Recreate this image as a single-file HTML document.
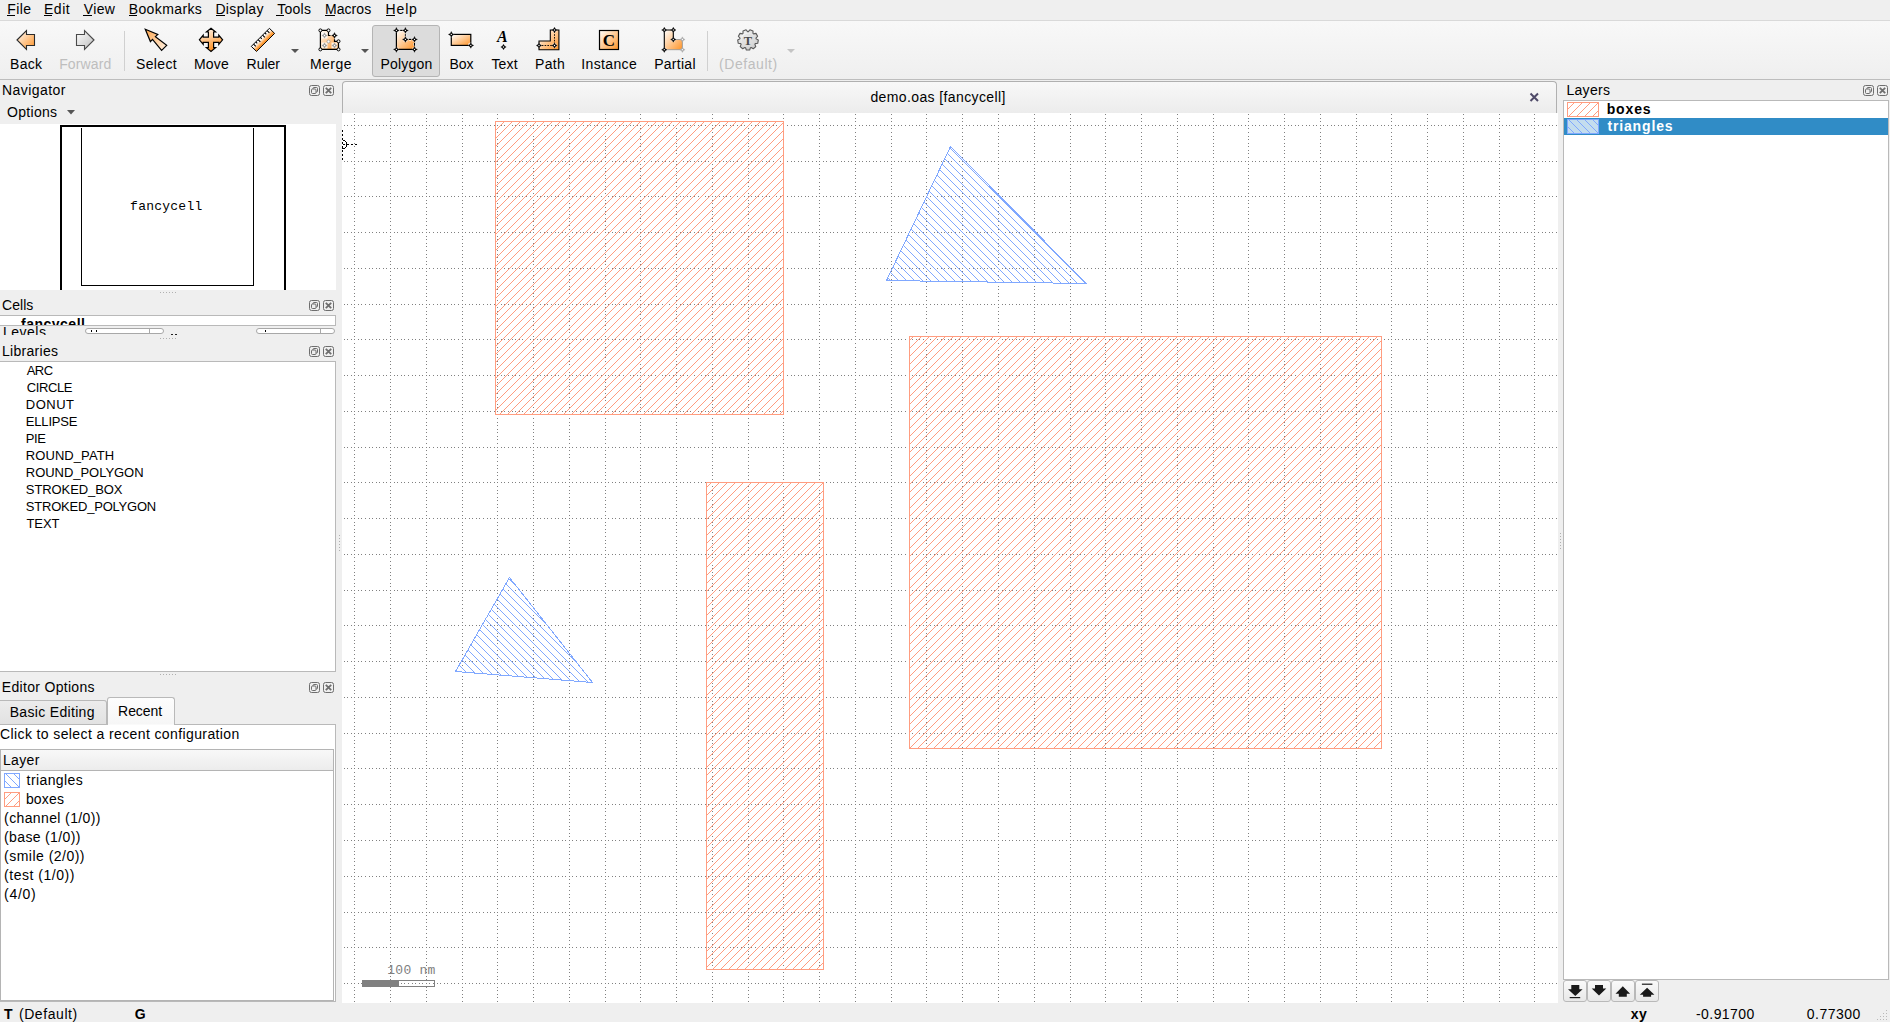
<!DOCTYPE html><html><head><meta charset="utf-8"><title>KLayout</title><style>
*{margin:0;padding:0;box-sizing:border-box}
html,body{width:1890px;height:1022px;overflow:hidden}
body{background:#efefef;position:relative;font-family:"Liberation Sans",sans-serif;font-size:14px;color:#000}
.a{position:absolute}
.t{position:absolute;white-space:pre;line-height:14px}
svg{position:absolute;overflow:visible}
.u{text-decoration:underline;text-underline-offset:2px}
</style></head><body>
<div class="a" style="left:0;top:0;width:1890px;height:20px;background:#efefef"></div>
<div class="a" style="left:0;top:20px;width:1890px;height:1px;background:#d9d9d9"></div>
<div class="t" style="left:7.3px;top:2px;letter-spacing:0.37px;">File</div>
<div class="a" style="left:7px;top:15px;width:8px;height:1px;background:#000"></div>
<div class="t" style="left:43.9px;top:2px;letter-spacing:0.57px;">Edit</div>
<div class="a" style="left:44px;top:15px;width:8px;height:1px;background:#000"></div>
<div class="t" style="left:83.7px;top:2px;letter-spacing:0.4px;">View</div>
<div class="a" style="left:83px;top:15px;width:9px;height:1px;background:#000"></div>
<div class="t" style="left:128.7px;top:2px;letter-spacing:0.39px;">Bookmarks</div>
<div class="a" style="left:129px;top:15px;width:8px;height:1px;background:#000"></div>
<div class="t" style="left:215.4px;top:2px;letter-spacing:0.37px;">Display</div>
<div class="a" style="left:216px;top:15px;width:9px;height:1px;background:#000"></div>
<div class="t" style="left:277.3px;top:2px;letter-spacing:0.25px;">Tools</div>
<div class="a" style="left:276px;top:15px;width:8px;height:1px;background:#000"></div>
<div class="t" style="left:324.9px;top:2px;letter-spacing:0.08px;">Macros</div>
<div class="a" style="left:325px;top:15px;width:10px;height:1px;background:#000"></div>
<div class="t" style="left:385.6px;top:2px;letter-spacing:0.83px;">Help</div>
<div class="a" style="left:386px;top:15px;width:9px;height:1px;background:#000"></div>
<div class="a" style="left:0;top:21px;width:1890px;height:58px;background:linear-gradient(#f8f8f8,#efefef)"></div>
<div class="a" style="left:0;top:79px;width:1890px;height:1px;background:#bdbdbd"></div>
<div class="a" style="left:372px;top:25px;width:68px;height:52px;background:#dcdcdc;border:1px solid #b4b4b4;border-radius:3px"></div>
<div class="a" style="left:124px;top:31px;width:1px;height:40px;background:#d0d0d0"></div>
<div class="a" style="left:707px;top:31px;width:1px;height:40px;background:#d0d0d0"></div>
<div class="t" style="left:10.1px;top:57px;letter-spacing:0.27px;">Back</div>
<div class="t" style="left:59.2px;top:57px;color:#bebebe;letter-spacing:0.13px;">Forward</div>
<div class="t" style="left:136.1px;top:57px;letter-spacing:0.32px;">Select</div>
<div class="t" style="left:194.0px;top:57px;letter-spacing:0.2px;">Move</div>
<div class="t" style="left:246.6px;top:57px;letter-spacing:-0.05px;">Ruler</div>
<div class="t" style="left:310.0px;top:57px;letter-spacing:0.45px;">Merge</div>
<div class="t" style="left:380.4px;top:57px;letter-spacing:0.2px;">Polygon</div>
<div class="t" style="left:449.4px;top:57px;letter-spacing:0.05px;">Box</div>
<div class="t" style="left:491.4px;top:57px;letter-spacing:0.17px;">Text</div>
<div class="t" style="left:535.1px;top:57px;letter-spacing:0.27px;">Path</div>
<div class="t" style="left:581.3px;top:57px;letter-spacing:0.36px;">Instance</div>
<div class="t" style="left:654.2px;top:57px;letter-spacing:0.28px;">Partial</div>
<div class="t" style="left:719.0px;top:57px;color:#bebebe;letter-spacing:0.56px;">(Default)</div>
<svg style="left:0;top:0" width="820" height="80" viewBox="0 0 820 80">
<defs>
<linearGradient id="og" x1="0" y1="0" x2="1" y2="1"><stop offset="0" stop-color="#fff"/><stop offset="1" stop-color="#ff9326"/></linearGradient>
<linearGradient id="og2" x1="0" y1="0" x2="1" y2="1"><stop offset="0" stop-color="#ffa64d"/><stop offset="1" stop-color="#fff3e6"/></linearGradient>
<linearGradient id="ogv" x1="0" y1="0" x2="0.3" y2="1"><stop offset="0" stop-color="#fff"/><stop offset="1" stop-color="#ff9326"/></linearGradient>
<linearGradient id="gg" x1="0" y1="0" x2="1" y2="1"><stop offset="0" stop-color="#fff"/><stop offset="1" stop-color="#bdbdbd"/></linearGradient>
<linearGradient id="rg" gradientUnits="userSpaceOnUse" x1="260.3" y1="37.3" x2="265.5" y2="42.4"><stop offset="0.25" stop-color="#fff"/><stop offset="0.8" stop-color="#ff9a33"/></linearGradient>
<radialGradient id="gear" cx="0.4" cy="0.35" r="0.7"><stop offset="0" stop-color="#fff"/><stop offset="1" stop-color="#c8c8c8"/></radialGradient>
</defs>
<path d="M17 40L26.5 30.5V34.5H34.5V45.5H26.5V49.5Z" fill="url(#og)" stroke="#2b2b2b" stroke-width="1.1" stroke-linejoin="miter"/>
<path d="M94 40L84.5 30.5V34.5H76.5V45.5H84.5V49.5Z" fill="url(#gg)" stroke="#4a4a4a" stroke-width="1.1"/>
<path d="M145.3 29.3L157.8 34.4L155.4 36.6L166.7 45.4L161.6 50.4L152.5 39.3L150.4 41.6Z" fill="url(#og2)" stroke="#000" stroke-width="1.2" stroke-linejoin="miter"/>
<path d="M211.0 28.2L215.6 32.0L213.6 32.0L213.6 37.2L218.8 37.2L218.8 35.2L222.6 39.8L218.8 44.4L218.8 42.4L213.6 42.4L213.6 47.6L215.6 47.6L211.0 51.4L206.4 47.6L208.4 47.6L208.4 42.4L203.2 42.4L203.2 44.4L199.4 39.8L203.2 35.2L203.2 37.2L208.4 37.2L208.4 32.0L206.4 32.0Z" fill="url(#ogv)" stroke="#000" stroke-width="1.2"/>
<path d="M269.4 28.3L274.6 33.4L256.5 51.4L251.3 46.4Z" fill="url(#rg)" stroke="#000" stroke-width="1"/>
<path d="M253.56 44.14l2.26 2.26M255.82 41.88l1.41 1.41M258.09 39.61l2.26 2.26M260.35 37.35l1.41 1.41M262.61 35.09l2.26 2.26M264.88 32.83l1.41 1.41M267.14 30.56l2.26 2.26" stroke="#000" stroke-width="1.1"/>
<path d="M291 49H299L295 53Z" fill="#555"/>
<path d="M361 49H369L365 53Z" fill="#555"/>
<path d="M787 49H795L791 53Z" fill="#c4c4c4"/>
<path d="M320.4 30.4H328.5V35.5H334.5V41.3H338.5V49.4H320.4Z" fill="url(#og)"/>
<rect x="321.5" y="32.5" width="6" height="6" fill="#fff" opacity="0.8"/>
<path d="M324.5 32.812L325.5 34.5L327.188 35.5L325.5 36.5L324.5 38.188L323.5 36.5L321.812 35.5L323.5 34.5Z" fill="#9a9a9a" stroke="#9a9a9a" stroke-width="0.35" stroke-linejoin="round"/><circle cx="324.5" cy="35.5" r="0.65" fill="#fff"/>
<rect x="321.5" y="42.5" width="6" height="6" fill="#fff" opacity="0.8"/>
<path d="M324.5 42.812L325.5 44.5L327.188 45.5L325.5 46.5L324.5 48.188L323.5 46.5L321.812 45.5L323.5 44.5Z" fill="#9a9a9a" stroke="#9a9a9a" stroke-width="0.35" stroke-linejoin="round"/><circle cx="324.5" cy="45.5" r="0.65" fill="#fff"/>
<rect x="331.5" y="42.5" width="6" height="6" fill="#fff" opacity="0.8"/>
<path d="M334.5 42.812L335.5 44.5L337.188 45.5L335.5 46.5L334.5 48.188L333.5 46.5L331.812 45.5L333.5 44.5Z" fill="#9a9a9a" stroke="#9a9a9a" stroke-width="0.35" stroke-linejoin="round"/><circle cx="334.5" cy="45.5" r="0.65" fill="#fff"/>
<circle cx="328.5" cy="41.5" r="1.5" fill="#fff" stroke="#999" stroke-width="0.8"/>
<path d="M330.5 35.5H328.5V30.4H320.4V49.4H338.5V41.3H334.5V39.2" fill="none" stroke="#000" stroke-width="1.2"/>
<circle cx="320.4" cy="30.4" r="1.5" fill="#fff" stroke="#000" stroke-width="1"/>
<circle cx="328.5" cy="30.4" r="1.5" fill="#fff" stroke="#000" stroke-width="1"/>
<circle cx="338.5" cy="41.3" r="1.5" fill="#fff" stroke="#000" stroke-width="1"/>
<circle cx="338.5" cy="49.4" r="1.5" fill="#fff" stroke="#000" stroke-width="1"/>
<circle cx="320.4" cy="49.4" r="1.5" fill="#fff" stroke="#000" stroke-width="1"/>
<path d="M334.5 32.588L335.5 34.5L337.412 35.5L335.5 36.5L334.5 38.412L333.5 36.5L331.588 35.5L333.5 34.5Z" fill="#000" stroke="#000" stroke-width="0.35" stroke-linejoin="round"/><circle cx="334.5" cy="35.5" r="0.65" fill="#fff"/>
<path d="M396.4 30.4H405.4V39.4H414.5V49.4H396.4Z" fill="url(#og)"/>
<path d="M400.2 30.4H402.4M405.4 34.2V35.8M409 39.4H411M414.5 43.1V45.7" stroke="#fff" stroke-width="2.6" opacity="0.8"/>
<path d="M396.4 33V47M399 49.4H412" stroke="#000" stroke-width="1.2"/>
<path d="M400.2 30.4H402.4M405.4 34.2V35.8M409 39.4H411M414.5 43.1V45.7" stroke="#000" stroke-width="1.2"/>
<circle cx="396.4" cy="30.4" r="2.6" fill="#fff" opacity="0.6"/>
<path d="M396.4 27.488L397.4 29.4L399.31199999999995 30.4L397.4 31.4L396.4 33.312L395.4 31.4L393.488 30.4L395.4 29.4Z" fill="#000" stroke="#000" stroke-width="0.35" stroke-linejoin="round"/><circle cx="396.4" cy="30.4" r="0.65" fill="#fff"/>
<circle cx="405.4" cy="30.4" r="2.6" fill="#fff" opacity="0.6"/>
<path d="M405.4 27.488L406.4 29.4L408.31199999999995 30.4L406.4 31.4L405.4 33.312L404.4 31.4L402.488 30.4L404.4 29.4Z" fill="#000" stroke="#000" stroke-width="0.35" stroke-linejoin="round"/><circle cx="405.4" cy="30.4" r="0.65" fill="#fff"/>
<circle cx="405.4" cy="39.4" r="2.6" fill="#fff" opacity="0.6"/>
<path d="M405.4 36.488L406.4 38.4L408.31199999999995 39.4L406.4 40.4L405.4 42.312L404.4 40.4L402.488 39.4L404.4 38.4Z" fill="#000" stroke="#000" stroke-width="0.35" stroke-linejoin="round"/><circle cx="405.4" cy="39.4" r="0.65" fill="#fff"/>
<circle cx="414.5" cy="39.4" r="2.6" fill="#fff" opacity="0.6"/>
<path d="M414.5 36.488L415.5 38.4L417.412 39.4L415.5 40.4L414.5 42.312L413.5 40.4L411.588 39.4L413.5 38.4Z" fill="#000" stroke="#000" stroke-width="0.35" stroke-linejoin="round"/><circle cx="414.5" cy="39.4" r="0.65" fill="#fff"/>
<circle cx="414.5" cy="49.4" r="2.6" fill="#fff" opacity="0.6"/>
<path d="M414.5 46.488L415.5 48.4L417.412 49.4L415.5 50.4L414.5 52.312L413.5 50.4L411.588 49.4L413.5 48.4Z" fill="#000" stroke="#000" stroke-width="0.35" stroke-linejoin="round"/><circle cx="414.5" cy="49.4" r="0.65" fill="#fff"/>
<circle cx="396.4" cy="49.4" r="2.6" fill="#fff" opacity="0.6"/>
<path d="M396.4 46.488L397.4 48.4L399.31199999999995 49.4L397.4 50.4L396.4 52.312L395.4 50.4L393.488 49.4L395.4 48.4Z" fill="#000" stroke="#000" stroke-width="0.35" stroke-linejoin="round"/><circle cx="396.4" cy="49.4" r="0.65" fill="#fff"/>
<rect x="451.3" y="34.4" width="19.5" height="11" fill="url(#og)" stroke="#000" stroke-width="1.2"/>
<circle cx="451.3" cy="34.4" r="2.8" fill="#fff" opacity="0.8"/><circle cx="470.8" cy="45.4" r="2.8" fill="#fff" opacity="0.8"/>
<path d="M451.3 31.488L452.3 33.4L454.212 34.4L452.3 35.4L451.3 37.312L450.3 35.4L448.38800000000003 34.4L450.3 33.4Z" fill="#000" stroke="#000" stroke-width="0.35" stroke-linejoin="round"/><circle cx="451.3" cy="34.4" r="0.65" fill="#fff"/><path d="M470.8 42.488L471.8 44.4L473.712 45.4L471.8 46.4L470.8 48.312L469.8 46.4L467.88800000000003 45.4L469.8 44.4Z" fill="#000" stroke="#000" stroke-width="0.35" stroke-linejoin="round"/><circle cx="470.8" cy="45.4" r="0.65" fill="#fff"/>
<text x="497" y="42" font-family="Liberation Serif" font-style="italic" font-weight="bold" font-size="16">A</text>
<path d="M503.5 44.312L504.5 46.0L506.188 47L504.5 48.0L503.5 49.688L502.5 48.0L500.812 47L502.5 46.0Z" fill="#000" stroke="#000" stroke-width="0.35" stroke-linejoin="round"/><circle cx="503.5" cy="47" r="0.65" fill="#fff"/>
<path d="M539 41H550.3V30H558.9V49.7H539Z" fill="url(#og)" stroke="#000" stroke-width="1.1"/>
<path d="M539 45.5H554.5V30" fill="none" stroke="#000" stroke-width="0.9" stroke-dasharray="1.6 1.2"/>
<circle cx="539" cy="45.5" r="2.4" fill="#fff" opacity="0.7"/>
<circle cx="554.5" cy="45.5" r="2.4" fill="#fff" opacity="0.7"/>
<circle cx="554.5" cy="30" r="2.4" fill="#fff" opacity="0.7"/>
<path d="M539 42.812L540.0 44.5L541.688 45.5L540.0 46.5L539 48.188L538.0 46.5L536.312 45.5L538.0 44.5Z" fill="#000" stroke="#000" stroke-width="0.35" stroke-linejoin="round"/><circle cx="539" cy="45.5" r="0.65" fill="#fff"/><path d="M554.5 42.812L555.5 44.5L557.188 45.5L555.5 46.5L554.5 48.188L553.5 46.5L551.812 45.5L553.5 44.5Z" fill="#000" stroke="#000" stroke-width="0.35" stroke-linejoin="round"/><circle cx="554.5" cy="45.5" r="0.65" fill="#fff"/><path d="M554.5 27.312L555.5 29.0L557.188 30L555.5 31.0L554.5 32.688L553.5 31.0L551.812 30L553.5 29.0Z" fill="#000" stroke="#000" stroke-width="0.35" stroke-linejoin="round"/><circle cx="554.5" cy="30" r="0.65" fill="#fff"/>
<rect x="599.5" y="30.5" width="19" height="19" fill="url(#og)" stroke="#000" stroke-width="1.2"/>
<text x="609" y="46" text-anchor="middle" font-family="Liberation Serif" font-weight="bold" font-size="17">C</text>
<path d="M664.3 30H673.3V39.5H682.4V49.7H664.3Z" fill="url(#og)"/>
<path d="M664.3 30V49.7M664.3 30H673.3V39.5" fill="none" stroke="#000" stroke-width="1.1"/>
<path d="M673.3 39.5H682.4V49.7H664.3" fill="none" stroke="#999" stroke-width="0.9"/>
<circle cx="664.3" cy="30" r="2.4" fill="#fff" opacity="0.7"/>
<circle cx="673.3" cy="30" r="2.4" fill="#fff" opacity="0.7"/>
<circle cx="673.3" cy="39.5" r="2.4" fill="#fff" opacity="0.7"/>
<circle cx="664.3" cy="49.7" r="2.4" fill="#fff" opacity="0.7"/>
<path d="M664.3 27.312L665.3 29.0L666.9879999999999 30L665.3 31.0L664.3 32.688L663.3 31.0L661.612 30L663.3 29.0Z" fill="#000" stroke="#000" stroke-width="0.35" stroke-linejoin="round"/><circle cx="664.3" cy="30" r="0.65" fill="#fff"/><path d="M673.3 27.312L674.3 29.0L675.9879999999999 30L674.3 31.0L673.3 32.688L672.3 31.0L670.612 30L672.3 29.0Z" fill="#000" stroke="#000" stroke-width="0.35" stroke-linejoin="round"/><circle cx="673.3" cy="30" r="0.65" fill="#fff"/><path d="M673.3 36.812L674.3 38.5L675.9879999999999 39.5L674.3 40.5L673.3 42.188L672.3 40.5L670.612 39.5L672.3 38.5Z" fill="#000" stroke="#000" stroke-width="0.35" stroke-linejoin="round"/><circle cx="673.3" cy="39.5" r="0.65" fill="#fff"/><path d="M664.3 47.012L665.3 48.7L666.9879999999999 49.7L665.3 50.7L664.3 52.388000000000005L663.3 50.7L661.612 49.7L663.3 48.7Z" fill="#000" stroke="#000" stroke-width="0.35" stroke-linejoin="round"/><circle cx="664.3" cy="49.7" r="0.65" fill="#fff"/>
<path d="M682.4 36.812L683.4 38.5L685.088 39.5L683.4 40.5L682.4 42.188L681.4 40.5L679.712 39.5L681.4 38.5Z" fill="#aaa" stroke="#aaa" stroke-width="0.35" stroke-linejoin="round"/><circle cx="682.4" cy="39.5" r="0.65" fill="#fff"/><path d="M682.4 47.012L683.4 48.7L685.088 49.7L683.4 50.7L682.4 52.388000000000005L681.4 50.7L679.712 49.7L681.4 48.7Z" fill="#aaa" stroke="#aaa" stroke-width="0.35" stroke-linejoin="round"/><circle cx="682.4" cy="49.7" r="0.65" fill="#fff"/>
<path d="M750.42 47.73L749.64 50.07L746.36 50.07L745.58 47.73L744.82 47.46L742.72 48.74L740.21 46.63L741.11 44.34L740.71 43.65L738.27 43.28L737.70 40.05L739.86 38.87L740.00 38.08L738.37 36.24L740.01 33.39L742.43 33.88L743.04 33.37L742.98 30.91L746.06 29.78L747.60 31.71L748.40 31.71L749.94 29.78L753.02 30.91L752.96 33.37L753.57 33.88L755.99 33.39L757.63 36.24L756.00 38.08L756.14 38.87L758.30 40.05L757.73 43.28L755.29 43.65L754.89 44.34L755.79 46.63L753.28 48.74L751.18 47.46Z" fill="url(#gear)" stroke="#5a5a5a" stroke-width="1.1" stroke-linejoin="round"/>
<circle cx="748" cy="40" r="6.2" fill="#d9d9d9" opacity="0.6"/>
<text x="748" y="44.6" text-anchor="middle" font-family="Liberation Serif" font-weight="bold" font-size="12.5" fill="#4a4a4a">T</text>
</svg>
<div class="t" style="left:1.9px;top:83px;letter-spacing:0.46px;">Navigator</div>
<svg style="left:309px;top:85px" width="26" height="12" viewBox="0 0 26 12">
<rect x="0.5" y="0.5" width="10" height="10" rx="2" fill="none" stroke="#6e6e6e"/>
<rect x="4" y="2.5" width="4.5" height="4.5" rx="1" fill="none" stroke="#6e6e6e"/>
<rect x="2.5" y="4" width="4.5" height="4.5" rx="1" fill="#efefef" stroke="#6e6e6e"/>
<rect x="14.5" y="0.5" width="10" height="10" rx="2" fill="none" stroke="#6e6e6e"/>
<path d="M16.8 2.8L22.2 8.2M22.2 2.8L16.8 8.2" stroke="#6e6e6e" stroke-width="1.8"/>
</svg>
<div class="t" style="left:7.1px;top:105px;letter-spacing:0.28px;">Options</div>
<svg style="left:67px;top:110px" width="8" height="5"><path d="M0 0H8L4 4.5Z" fill="#555"/></svg>
<div class="a" style="left:0;top:124px;width:336px;height:166px;background:#fff"></div>
<div class="a" style="left:60px;top:125px;width:226px;height:170px;border:2px solid #000;border-bottom:none"></div>
<div class="a" style="left:81px;top:128px;width:173px;height:158px;border:1px solid #000;border-top:none"></div>
<div class="a" style="left:81px;top:128px;width:1px;height:1px;background:#000"></div>
<div class="t" style="left:130.1px;top:200px;font-size:13px;line-height:13px;letter-spacing:0.24px;font-family:'Liberation Mono',monospace;">fancycell</div>
<div class="a" style="left:0;top:290px;width:340px;height:10px;background:#efefef"></div>
<div class="a" style="left:160px;top:292px;width:17px;height:1px;background:repeating-linear-gradient(90deg,#b0b0b0 0 1px,transparent 1px 3px)"></div>
<div class="t" style="left:2.0px;top:298px;letter-spacing:0.05px;">Cells</div>
<svg style="left:309px;top:300px" width="26" height="12" viewBox="0 0 26 12">
<rect x="0.5" y="0.5" width="10" height="10" rx="2" fill="none" stroke="#6e6e6e"/>
<rect x="4" y="2.5" width="4.5" height="4.5" rx="1" fill="none" stroke="#6e6e6e"/>
<rect x="2.5" y="4" width="4.5" height="4.5" rx="1" fill="#efefef" stroke="#6e6e6e"/>
<rect x="14.5" y="0.5" width="10" height="10" rx="2" fill="none" stroke="#6e6e6e"/>
<path d="M16.8 2.8L22.2 8.2M22.2 2.8L16.8 8.2" stroke="#6e6e6e" stroke-width="1.8"/>
</svg>
<div class="a" style="left:0;top:315px;width:336px;height:11px;background:#fff;border-top:1px solid #b9b9b9;border-bottom:1px solid #b9b9b9;border-right:1px solid #b9b9b9;overflow:hidden"><div class="t" style="left:21px;top:1px;font-weight:bold;letter-spacing:0.5px">fancycell</div></div>
<div class="a" style="left:0;top:326px;width:80px;height:9px;overflow:hidden"><div class="t" style="left:3px;top:-1px;letter-spacing:0.5px">Levels</div></div>
<div class="a" style="left:85px;top:328px;width:79px;height:6px;border:1px solid #a8a8a8;border-radius:3px;background:#fff"></div>
<div class="a" style="left:149px;top:328px;width:1px;height:6px;background:#a8a8a8"></div>
<div class="a" style="left:256px;top:328px;width:79px;height:6px;border:1px solid #a8a8a8;border-radius:3px;background:#fff"></div>
<div class="a" style="left:320px;top:328px;width:1px;height:6px;background:#a8a8a8"></div>
<div class="a" style="left:91px;top:330px;width:1px;height:2px;background:#000"></div><div class="a" style="left:96px;top:330px;width:1px;height:2px;background:#000"></div>
<div class="a" style="left:171px;top:334px;width:2px;height:1px;background:#222"></div><div class="a" style="left:175px;top:334px;width:2px;height:1px;background:#222"></div>
<div class="a" style="left:265px;top:330px;width:1px;height:2px;background:#000"></div>
<div class="a" style="left:160px;top:338px;width:17px;height:1px;background:repeating-linear-gradient(90deg,#b0b0b0 0 1px,transparent 1px 3px)"></div>
<div class="t" style="left:2.0px;top:344px;letter-spacing:0.29px;">Libraries</div>
<svg style="left:309px;top:346px" width="26" height="12" viewBox="0 0 26 12">
<rect x="0.5" y="0.5" width="10" height="10" rx="2" fill="none" stroke="#6e6e6e"/>
<rect x="4" y="2.5" width="4.5" height="4.5" rx="1" fill="none" stroke="#6e6e6e"/>
<rect x="2.5" y="4" width="4.5" height="4.5" rx="1" fill="#efefef" stroke="#6e6e6e"/>
<rect x="14.5" y="0.5" width="10" height="10" rx="2" fill="none" stroke="#6e6e6e"/>
<path d="M16.8 2.8L22.2 8.2M22.2 2.8L16.8 8.2" stroke="#6e6e6e" stroke-width="1.8"/>
</svg>
<div class="a" style="left:-1px;top:361px;width:337px;height:311px;background:#fff;border:1px solid #b9b9b9"></div>
<div class="t" style="left:26.8px;top:364px;font-size:13px;line-height:13px;letter-spacing:-0.6px;">ARC</div>
<div class="t" style="left:26.8px;top:381px;font-size:13px;line-height:13px;letter-spacing:-0.4px;">CIRCLE</div>
<div class="t" style="left:25.8px;top:398px;font-size:13px;line-height:13px;letter-spacing:0.5px;">DONUT</div>
<div class="t" style="left:25.8px;top:415px;font-size:13px;line-height:13px;letter-spacing:-0.17px;">ELLIPSE</div>
<div class="t" style="left:25.8px;top:432px;font-size:13px;line-height:13px;letter-spacing:-0.4px;">PIE</div>
<div class="t" style="left:25.8px;top:449px;font-size:13px;line-height:13px;letter-spacing:0.07px;">ROUND_PATH</div>
<div class="t" style="left:25.8px;top:466px;font-size:13px;line-height:13px;letter-spacing:-0.04px;">ROUND_POLYGON</div>
<div class="t" style="left:25.8px;top:483px;font-size:13px;line-height:13px;letter-spacing:-0.09px;">STROKED_BOX</div>
<div class="t" style="left:25.8px;top:500px;font-size:13px;line-height:13px;letter-spacing:-0.21px;">STROKED_POLYGON</div>
<div class="t" style="left:26.4px;top:517px;font-size:13px;line-height:13px;letter-spacing:-0.03px;">TEXT</div>
<div class="a" style="left:160px;top:674px;width:17px;height:1px;background:repeating-linear-gradient(90deg,#b0b0b0 0 1px,transparent 1px 3px)"></div>
<div class="t" style="left:1.8px;top:680px;letter-spacing:0.31px;">Editor Options</div>
<svg style="left:309px;top:682px" width="26" height="12" viewBox="0 0 26 12">
<rect x="0.5" y="0.5" width="10" height="10" rx="2" fill="none" stroke="#6e6e6e"/>
<rect x="4" y="2.5" width="4.5" height="4.5" rx="1" fill="none" stroke="#6e6e6e"/>
<rect x="2.5" y="4" width="4.5" height="4.5" rx="1" fill="#efefef" stroke="#6e6e6e"/>
<rect x="14.5" y="0.5" width="10" height="10" rx="2" fill="none" stroke="#6e6e6e"/>
<path d="M16.8 2.8L22.2 8.2M22.2 2.8L16.8 8.2" stroke="#6e6e6e" stroke-width="1.8"/>
</svg>
<div class="a" style="left:0;top:700px;width:107px;height:25px;background:linear-gradient(#ececec,#e2e2e2);border:1px solid #b9b9b9;border-left:none;border-radius:0 3px 0 0"></div>
<div class="a" style="left:107px;top:697px;width:68px;height:28px;background:linear-gradient(#fdfdfd,#f6f6f6);border:1px solid #b9b9b9;border-bottom:none;border-radius:3px 3px 0 0"></div>
<div class="t" style="left:9.7px;top:705px;letter-spacing:0.32px;">Basic Editing</div>
<div class="t" style="left:118.1px;top:704px;letter-spacing:-0.06px;">Recent</div>
<div class="a" style="left:-1px;top:724px;width:337px;height:278px;background:#fff;border:1px solid #b9b9b9"></div>
<div class="a" style="left:108px;top:724px;width:66px;height:1px;background:#fafafa"></div>
<div class="t" style="left:0.0px;top:727px;letter-spacing:0.39px;">Click to select a recent configuration</div>
<div class="a" style="left:0px;top:749px;width:334px;height:252px;border:1px solid #b4b4b4;background:#fff"></div>
<div class="a" style="left:1px;top:750px;width:332px;height:21px;background:linear-gradient(#f8f8f8,#ececec);border-bottom:1px solid #b4b4b4"></div>
<div class="t" style="left:2.9px;top:753px;letter-spacing:0.38px;">Layer</div>
<div class="t" style="left:26.6px;top:773px;letter-spacing:0.4px;">triangles</div>
<div class="t" style="left:25.9px;top:792px;letter-spacing:0.18px;">boxes</div>
<div class="t" style="left:4.1px;top:811px;letter-spacing:0.38px;">(channel (1/0))</div>
<div class="t" style="left:4.1px;top:830px;letter-spacing:0.35px;">(base (1/0))</div>
<div class="t" style="left:4.1px;top:849px;letter-spacing:0.48px;">(smile (2/0))</div>
<div class="t" style="left:4.1px;top:868px;letter-spacing:0.52px;">(test (1/0))</div>
<div class="t" style="left:4.1px;top:887px;letter-spacing:0.68px;">(4/0)</div>
<svg style="left:4px;top:773px" width="16" height="15" shape-rendering="crispEdges"><rect x="0.5" y="0.5" width="15" height="14" fill="#fff" stroke="#80a8ff"/><path d="M1 8h1v1h-1zM2 1h1v1h-1zM2 9h1v1h-1zM3 2h1v1h-1zM3 10h1v1h-1zM4 3h1v1h-1zM4 11h1v1h-1zM5 4h1v1h-1zM5 12h1v1h-1zM6 5h1v1h-1zM6 13h1v1h-1zM7 6h1v1h-1zM8 7h1v1h-1zM9 8h1v1h-1zM10 1h1v1h-1zM10 9h1v1h-1zM11 2h1v1h-1zM11 10h1v1h-1zM12 3h1v1h-1zM12 11h1v1h-1zM13 4h1v1h-1zM13 12h1v1h-1zM14 5h1v1h-1zM14 13h1v1h-1z" fill="#80a8ff"/></svg>
<svg style="left:4px;top:792px" width="16" height="15" shape-rendering="crispEdges"><rect x="0.5" y="0.5" width="15" height="14" fill="#fff" stroke="#ff9d80"/><path d="M1 6h1v1h-1zM2 5h1v1h-1zM2 13h1v1h-1zM3 4h1v1h-1zM3 12h1v1h-1zM4 3h1v1h-1zM4 11h1v1h-1zM5 2h1v1h-1zM5 10h1v1h-1zM6 1h1v1h-1zM6 9h1v1h-1zM7 8h1v1h-1zM8 7h1v1h-1zM9 6h1v1h-1zM10 5h1v1h-1zM10 13h1v1h-1zM11 4h1v1h-1zM11 12h1v1h-1zM12 3h1v1h-1zM12 11h1v1h-1zM13 2h1v1h-1zM13 10h1v1h-1zM14 1h1v1h-1zM14 9h1v1h-1z" fill="#ff9d80"/></svg>
<div class="a" style="left:339px;top:535px;width:1px;height:17px;background:repeating-linear-gradient(180deg,#b0b0b0 0 1px,transparent 1px 3px)"></div>
<div class="a" style="left:342px;top:81px;width:1215px;height:32px;background:linear-gradient(#f8f8f8,#ececec);border:1px solid #b0b0b0;border-bottom:none;border-radius:4px 4px 0 0"></div>
<div class="t" style="left:870.4px;top:90px;letter-spacing:0.39px;">demo.oas [fancycell]</div>
<svg style="left:1529px;top:92px" width="11" height="11"><path d="M1.5 1.5L9 9M9 1.5L1.5 9" stroke="#4f4a68" stroke-width="2"/></svg>
<svg style="left:342px;top:113px" width="1216" height="890" viewBox="342 113 1216 890" shape-rendering="crispEdges">
<rect x="342" y="113" width="1216" height="890" fill="#fff"/>
<defs><pattern id="hb" x="0" y="0" width="8" height="8" patternUnits="userSpaceOnUse"><path d="M0 1h1v1h-1zM1 0h1v1h-1zM2 7h1v1h-1zM3 6h1v1h-1zM4 5h1v1h-1zM5 4h1v1h-1zM6 3h1v1h-1zM7 2h1v1h-1z" fill="#ff9d80"/></pattern><pattern id="ht" x="0" y="0" width="8" height="8" patternUnits="userSpaceOnUse"><path d="M0 6h1v1h-1zM1 7h1v1h-1zM2 0h1v1h-1zM3 1h1v1h-1zM4 2h1v1h-1zM5 3h1v1h-1zM6 4h1v1h-1zM7 5h1v1h-1z" fill="#80a8ff"/></pattern></defs>
<path d="M344 125.5h1m2 0h1m3 0h1m2 0h1m3 0h1m2 0h1m3 0h1m3 0h1m2 0h1m3 0h1m2 0h1m3 0h1m2 0h1m3 0h1m3 0h1m2 0h1m3 0h1m2 0h1m3 0h1m3 0h1m2 0h1m3 0h1m2 0h1m3 0h1m2 0h1m3 0h1m3 0h1m2 0h1m3 0h1m2 0h1m3 0h1m2 0h1m3 0h1m3 0h1m2 0h1m3 0h1m2 0h1m3 0h1m2 0h1m3 0h1m3 0h1m2 0h1m3 0h1m2 0h1m3 0h1m2 0h1m3 0h1m3 0h1m2 0h1m3 0h1m2 0h1m3 0h1m3 0h1m2 0h1m3 0h1m2 0h1m3 0h1m2 0h1m3 0h1m3 0h1m2 0h1m3 0h1m2 0h1m3 0h1m2 0h1m3 0h1m3 0h1m2 0h1m3 0h1m2 0h1m3 0h1m2 0h1m3 0h1m3 0h1m2 0h1m3 0h1m2 0h1m3 0h1m3 0h1m2 0h1m3 0h1m2 0h1m3 0h1m2 0h1m3 0h1m3 0h1m2 0h1m3 0h1m2 0h1m3 0h1m2 0h1m3 0h1m3 0h1m2 0h1m3 0h1m2 0h1m3 0h1m2 0h1m3 0h1m3 0h1m2 0h1m3 0h1m2 0h1m3 0h1m2 0h1m3 0h1m3 0h1m2 0h1m3 0h1m2 0h1m3 0h1m3 0h1m2 0h1m3 0h1m2 0h1m3 0h1m2 0h1m3 0h1m3 0h1m2 0h1m3 0h1m2 0h1m3 0h1m2 0h1m3 0h1m3 0h1m2 0h1m3 0h1m2 0h1m3 0h1m2 0h1m3 0h1m3 0h1m2 0h1m3 0h1m2 0h1m3 0h1m2 0h1m3 0h1m3 0h1m2 0h1m3 0h1m2 0h1m3 0h1m3 0h1m2 0h1m3 0h1m2 0h1m3 0h1m2 0h1m3 0h1m3 0h1m2 0h1m3 0h1m2 0h1m3 0h1m2 0h1m3 0h1m3 0h1m2 0h1m3 0h1m2 0h1m3 0h1m2 0h1m3 0h1m3 0h1m2 0h1m3 0h1m2 0h1m3 0h1m2 0h1m3 0h1m3 0h1m2 0h1m3 0h1m2 0h1m3 0h1m3 0h1m2 0h1m3 0h1m2 0h1m3 0h1m2 0h1m3 0h1m3 0h1m2 0h1m3 0h1m2 0h1m3 0h1m2 0h1m3 0h1m3 0h1m2 0h1m3 0h1m2 0h1m3 0h1m2 0h1m3 0h1m3 0h1m2 0h1m3 0h1m2 0h1m3 0h1m3 0h1m2 0h1m3 0h1m2 0h1m3 0h1m2 0h1m3 0h1m3 0h1m2 0h1m3 0h1m2 0h1m3 0h1m2 0h1m3 0h1m3 0h1m2 0h1m3 0h1m2 0h1m3 0h1m2 0h1m3 0h1m3 0h1m2 0h1m3 0h1m2 0h1m3 0h1m2 0h1m3 0h1m3 0h1m2 0h1m3 0h1m2 0h1m3 0h1m3 0h1m2 0h1m3 0h1m2 0h1m3 0h1m2 0h1m3 0h1m3 0h1m2 0h1m3 0h1m2 0h1m3 0h1m2 0h1m3 0h1m3 0h1m2 0h1m3 0h1m2 0h1m3 0h1m2 0h1m3 0h1m3 0h1m2 0h1m3 0h1m2 0h1m3 0h1m2 0h1m3 0h1m3 0h1m2 0h1m3 0h1m2 0h1m3 0h1m3 0h1m2 0h1m3 0h1m2 0h1m3 0h1m2 0h1m3 0h1m3 0h1m2 0h1m3 0h1m2 0h1m3 0h1m2 0h1m3 0h1m3 0h1m2 0h1m3 0h1m2 0h1m3 0h1m2 0h1m3 0h1m3 0h1m2 0h1m3 0h1m2 0h1m3 0h1m2 0h1m3 0h1m3 0h1m2 0h1m3 0h1m2 0h1m3 0h1m3 0h1m2 0h1m3 0h1m2 0h1m3 0h1m2 0h1m3 0h1m3 0h1m2 0h1m3 0h1m2 0h1m3 0h1m2 0h1m3 0h1m3 0h1m2 0h1m3 0h1m2 0h1m3 0h1m2 0h1m3 0h1m3 0h1m2 0h1m3 0h1m2 0h1m3 0h1m2 0h1m3 0h1m3 0h1m2 0h1m3 0h1m2 0h1m3 0h1m3 0h1m2 0h1m3 0h1m2 0h1m3 0h1M344 161.5h1m2 0h1m3 0h1m2 0h1m3 0h1m2 0h1m3 0h1m3 0h1m2 0h1m3 0h1m2 0h1m3 0h1m2 0h1m3 0h1m3 0h1m2 0h1m3 0h1m2 0h1m3 0h1m3 0h1m2 0h1m3 0h1m2 0h1m3 0h1m2 0h1m3 0h1m3 0h1m2 0h1m3 0h1m2 0h1m3 0h1m2 0h1m3 0h1m3 0h1m2 0h1m3 0h1m2 0h1m3 0h1m2 0h1m3 0h1m3 0h1m2 0h1m3 0h1m2 0h1m3 0h1m2 0h1m3 0h1m3 0h1m2 0h1m3 0h1m2 0h1m3 0h1m3 0h1m2 0h1m3 0h1m2 0h1m3 0h1m2 0h1m3 0h1m3 0h1m2 0h1m3 0h1m2 0h1m3 0h1m2 0h1m3 0h1m3 0h1m2 0h1m3 0h1m2 0h1m3 0h1m2 0h1m3 0h1m3 0h1m2 0h1m3 0h1m2 0h1m3 0h1m3 0h1m2 0h1m3 0h1m2 0h1m3 0h1m2 0h1m3 0h1m3 0h1m2 0h1m3 0h1m2 0h1m3 0h1m2 0h1m3 0h1m3 0h1m2 0h1m3 0h1m2 0h1m3 0h1m2 0h1m3 0h1m3 0h1m2 0h1m3 0h1m2 0h1m3 0h1m2 0h1m3 0h1m3 0h1m2 0h1m3 0h1m2 0h1m3 0h1m3 0h1m2 0h1m3 0h1m2 0h1m3 0h1m2 0h1m3 0h1m3 0h1m2 0h1m3 0h1m2 0h1m3 0h1m2 0h1m3 0h1m3 0h1m2 0h1m3 0h1m2 0h1m3 0h1m2 0h1m3 0h1m3 0h1m2 0h1m3 0h1m2 0h1m3 0h1m2 0h1m3 0h1m3 0h1m2 0h1m3 0h1m2 0h1m3 0h1m3 0h1m2 0h1m3 0h1m2 0h1m3 0h1m2 0h1m3 0h1m3 0h1m2 0h1m3 0h1m2 0h1m3 0h1m2 0h1m3 0h1m3 0h1m2 0h1m3 0h1m2 0h1m3 0h1m2 0h1m3 0h1m3 0h1m2 0h1m3 0h1m2 0h1m3 0h1m2 0h1m3 0h1m3 0h1m2 0h1m3 0h1m2 0h1m3 0h1m3 0h1m2 0h1m3 0h1m2 0h1m3 0h1m2 0h1m3 0h1m3 0h1m2 0h1m3 0h1m2 0h1m3 0h1m2 0h1m3 0h1m3 0h1m2 0h1m3 0h1m2 0h1m3 0h1m2 0h1m3 0h1m3 0h1m2 0h1m3 0h1m2 0h1m3 0h1m3 0h1m2 0h1m3 0h1m2 0h1m3 0h1m2 0h1m3 0h1m3 0h1m2 0h1m3 0h1m2 0h1m3 0h1m2 0h1m3 0h1m3 0h1m2 0h1m3 0h1m2 0h1m3 0h1m2 0h1m3 0h1m3 0h1m2 0h1m3 0h1m2 0h1m3 0h1m2 0h1m3 0h1m3 0h1m2 0h1m3 0h1m2 0h1m3 0h1m3 0h1m2 0h1m3 0h1m2 0h1m3 0h1m2 0h1m3 0h1m3 0h1m2 0h1m3 0h1m2 0h1m3 0h1m2 0h1m3 0h1m3 0h1m2 0h1m3 0h1m2 0h1m3 0h1m2 0h1m3 0h1m3 0h1m2 0h1m3 0h1m2 0h1m3 0h1m2 0h1m3 0h1m3 0h1m2 0h1m3 0h1m2 0h1m3 0h1m3 0h1m2 0h1m3 0h1m2 0h1m3 0h1m2 0h1m3 0h1m3 0h1m2 0h1m3 0h1m2 0h1m3 0h1m2 0h1m3 0h1m3 0h1m2 0h1m3 0h1m2 0h1m3 0h1m2 0h1m3 0h1m3 0h1m2 0h1m3 0h1m2 0h1m3 0h1m2 0h1m3 0h1m3 0h1m2 0h1m3 0h1m2 0h1m3 0h1m3 0h1m2 0h1m3 0h1m2 0h1m3 0h1m2 0h1m3 0h1m3 0h1m2 0h1m3 0h1m2 0h1m3 0h1m2 0h1m3 0h1m3 0h1m2 0h1m3 0h1m2 0h1m3 0h1m2 0h1m3 0h1m3 0h1m2 0h1m3 0h1m2 0h1m3 0h1m2 0h1m3 0h1m3 0h1m2 0h1m3 0h1m2 0h1m3 0h1m3 0h1m2 0h1m3 0h1m2 0h1m3 0h1M344 196.5h1m2 0h1m3 0h1m2 0h1m3 0h1m2 0h1m3 0h1m3 0h1m2 0h1m3 0h1m2 0h1m3 0h1m2 0h1m3 0h1m3 0h1m2 0h1m3 0h1m2 0h1m3 0h1m3 0h1m2 0h1m3 0h1m2 0h1m3 0h1m2 0h1m3 0h1m3 0h1m2 0h1m3 0h1m2 0h1m3 0h1m2 0h1m3 0h1m3 0h1m2 0h1m3 0h1m2 0h1m3 0h1m2 0h1m3 0h1m3 0h1m2 0h1m3 0h1m2 0h1m3 0h1m2 0h1m3 0h1m3 0h1m2 0h1m3 0h1m2 0h1m3 0h1m3 0h1m2 0h1m3 0h1m2 0h1m3 0h1m2 0h1m3 0h1m3 0h1m2 0h1m3 0h1m2 0h1m3 0h1m2 0h1m3 0h1m3 0h1m2 0h1m3 0h1m2 0h1m3 0h1m2 0h1m3 0h1m3 0h1m2 0h1m3 0h1m2 0h1m3 0h1m3 0h1m2 0h1m3 0h1m2 0h1m3 0h1m2 0h1m3 0h1m3 0h1m2 0h1m3 0h1m2 0h1m3 0h1m2 0h1m3 0h1m3 0h1m2 0h1m3 0h1m2 0h1m3 0h1m2 0h1m3 0h1m3 0h1m2 0h1m3 0h1m2 0h1m3 0h1m2 0h1m3 0h1m3 0h1m2 0h1m3 0h1m2 0h1m3 0h1m3 0h1m2 0h1m3 0h1m2 0h1m3 0h1m2 0h1m3 0h1m3 0h1m2 0h1m3 0h1m2 0h1m3 0h1m2 0h1m3 0h1m3 0h1m2 0h1m3 0h1m2 0h1m3 0h1m2 0h1m3 0h1m3 0h1m2 0h1m3 0h1m2 0h1m3 0h1m2 0h1m3 0h1m3 0h1m2 0h1m3 0h1m2 0h1m3 0h1m3 0h1m2 0h1m3 0h1m2 0h1m3 0h1m2 0h1m3 0h1m3 0h1m2 0h1m3 0h1m2 0h1m3 0h1m2 0h1m3 0h1m3 0h1m2 0h1m3 0h1m2 0h1m3 0h1m2 0h1m3 0h1m3 0h1m2 0h1m3 0h1m2 0h1m3 0h1m2 0h1m3 0h1m3 0h1m2 0h1m3 0h1m2 0h1m3 0h1m3 0h1m2 0h1m3 0h1m2 0h1m3 0h1m2 0h1m3 0h1m3 0h1m2 0h1m3 0h1m2 0h1m3 0h1m2 0h1m3 0h1m3 0h1m2 0h1m3 0h1m2 0h1m3 0h1m2 0h1m3 0h1m3 0h1m2 0h1m3 0h1m2 0h1m3 0h1m3 0h1m2 0h1m3 0h1m2 0h1m3 0h1m2 0h1m3 0h1m3 0h1m2 0h1m3 0h1m2 0h1m3 0h1m2 0h1m3 0h1m3 0h1m2 0h1m3 0h1m2 0h1m3 0h1m2 0h1m3 0h1m3 0h1m2 0h1m3 0h1m2 0h1m3 0h1m2 0h1m3 0h1m3 0h1m2 0h1m3 0h1m2 0h1m3 0h1m3 0h1m2 0h1m3 0h1m2 0h1m3 0h1m2 0h1m3 0h1m3 0h1m2 0h1m3 0h1m2 0h1m3 0h1m2 0h1m3 0h1m3 0h1m2 0h1m3 0h1m2 0h1m3 0h1m2 0h1m3 0h1m3 0h1m2 0h1m3 0h1m2 0h1m3 0h1m2 0h1m3 0h1m3 0h1m2 0h1m3 0h1m2 0h1m3 0h1m3 0h1m2 0h1m3 0h1m2 0h1m3 0h1m2 0h1m3 0h1m3 0h1m2 0h1m3 0h1m2 0h1m3 0h1m2 0h1m3 0h1m3 0h1m2 0h1m3 0h1m2 0h1m3 0h1m2 0h1m3 0h1m3 0h1m2 0h1m3 0h1m2 0h1m3 0h1m2 0h1m3 0h1m3 0h1m2 0h1m3 0h1m2 0h1m3 0h1m3 0h1m2 0h1m3 0h1m2 0h1m3 0h1m2 0h1m3 0h1m3 0h1m2 0h1m3 0h1m2 0h1m3 0h1m2 0h1m3 0h1m3 0h1m2 0h1m3 0h1m2 0h1m3 0h1m2 0h1m3 0h1m3 0h1m2 0h1m3 0h1m2 0h1m3 0h1m2 0h1m3 0h1m3 0h1m2 0h1m3 0h1m2 0h1m3 0h1m3 0h1m2 0h1m3 0h1m2 0h1m3 0h1M344 232.5h1m2 0h1m3 0h1m2 0h1m3 0h1m2 0h1m3 0h1m3 0h1m2 0h1m3 0h1m2 0h1m3 0h1m2 0h1m3 0h1m3 0h1m2 0h1m3 0h1m2 0h1m3 0h1m3 0h1m2 0h1m3 0h1m2 0h1m3 0h1m2 0h1m3 0h1m3 0h1m2 0h1m3 0h1m2 0h1m3 0h1m2 0h1m3 0h1m3 0h1m2 0h1m3 0h1m2 0h1m3 0h1m2 0h1m3 0h1m3 0h1m2 0h1m3 0h1m2 0h1m3 0h1m2 0h1m3 0h1m3 0h1m2 0h1m3 0h1m2 0h1m3 0h1m3 0h1m2 0h1m3 0h1m2 0h1m3 0h1m2 0h1m3 0h1m3 0h1m2 0h1m3 0h1m2 0h1m3 0h1m2 0h1m3 0h1m3 0h1m2 0h1m3 0h1m2 0h1m3 0h1m2 0h1m3 0h1m3 0h1m2 0h1m3 0h1m2 0h1m3 0h1m3 0h1m2 0h1m3 0h1m2 0h1m3 0h1m2 0h1m3 0h1m3 0h1m2 0h1m3 0h1m2 0h1m3 0h1m2 0h1m3 0h1m3 0h1m2 0h1m3 0h1m2 0h1m3 0h1m2 0h1m3 0h1m3 0h1m2 0h1m3 0h1m2 0h1m3 0h1m2 0h1m3 0h1m3 0h1m2 0h1m3 0h1m2 0h1m3 0h1m3 0h1m2 0h1m3 0h1m2 0h1m3 0h1m2 0h1m3 0h1m3 0h1m2 0h1m3 0h1m2 0h1m3 0h1m2 0h1m3 0h1m3 0h1m2 0h1m3 0h1m2 0h1m3 0h1m2 0h1m3 0h1m3 0h1m2 0h1m3 0h1m2 0h1m3 0h1m2 0h1m3 0h1m3 0h1m2 0h1m3 0h1m2 0h1m3 0h1m3 0h1m2 0h1m3 0h1m2 0h1m3 0h1m2 0h1m3 0h1m3 0h1m2 0h1m3 0h1m2 0h1m3 0h1m2 0h1m3 0h1m3 0h1m2 0h1m3 0h1m2 0h1m3 0h1m2 0h1m3 0h1m3 0h1m2 0h1m3 0h1m2 0h1m3 0h1m2 0h1m3 0h1m3 0h1m2 0h1m3 0h1m2 0h1m3 0h1m3 0h1m2 0h1m3 0h1m2 0h1m3 0h1m2 0h1m3 0h1m3 0h1m2 0h1m3 0h1m2 0h1m3 0h1m2 0h1m3 0h1m3 0h1m2 0h1m3 0h1m2 0h1m3 0h1m2 0h1m3 0h1m3 0h1m2 0h1m3 0h1m2 0h1m3 0h1m3 0h1m2 0h1m3 0h1m2 0h1m3 0h1m2 0h1m3 0h1m3 0h1m2 0h1m3 0h1m2 0h1m3 0h1m2 0h1m3 0h1m3 0h1m2 0h1m3 0h1m2 0h1m3 0h1m2 0h1m3 0h1m3 0h1m2 0h1m3 0h1m2 0h1m3 0h1m2 0h1m3 0h1m3 0h1m2 0h1m3 0h1m2 0h1m3 0h1m3 0h1m2 0h1m3 0h1m2 0h1m3 0h1m2 0h1m3 0h1m3 0h1m2 0h1m3 0h1m2 0h1m3 0h1m2 0h1m3 0h1m3 0h1m2 0h1m3 0h1m2 0h1m3 0h1m2 0h1m3 0h1m3 0h1m2 0h1m3 0h1m2 0h1m3 0h1m2 0h1m3 0h1m3 0h1m2 0h1m3 0h1m2 0h1m3 0h1m3 0h1m2 0h1m3 0h1m2 0h1m3 0h1m2 0h1m3 0h1m3 0h1m2 0h1m3 0h1m2 0h1m3 0h1m2 0h1m3 0h1m3 0h1m2 0h1m3 0h1m2 0h1m3 0h1m2 0h1m3 0h1m3 0h1m2 0h1m3 0h1m2 0h1m3 0h1m2 0h1m3 0h1m3 0h1m2 0h1m3 0h1m2 0h1m3 0h1m3 0h1m2 0h1m3 0h1m2 0h1m3 0h1m2 0h1m3 0h1m3 0h1m2 0h1m3 0h1m2 0h1m3 0h1m2 0h1m3 0h1m3 0h1m2 0h1m3 0h1m2 0h1m3 0h1m2 0h1m3 0h1m3 0h1m2 0h1m3 0h1m2 0h1m3 0h1m2 0h1m3 0h1m3 0h1m2 0h1m3 0h1m2 0h1m3 0h1m3 0h1m2 0h1m3 0h1m2 0h1m3 0h1M344 268.5h1m2 0h1m3 0h1m2 0h1m3 0h1m2 0h1m3 0h1m3 0h1m2 0h1m3 0h1m2 0h1m3 0h1m2 0h1m3 0h1m3 0h1m2 0h1m3 0h1m2 0h1m3 0h1m3 0h1m2 0h1m3 0h1m2 0h1m3 0h1m2 0h1m3 0h1m3 0h1m2 0h1m3 0h1m2 0h1m3 0h1m2 0h1m3 0h1m3 0h1m2 0h1m3 0h1m2 0h1m3 0h1m2 0h1m3 0h1m3 0h1m2 0h1m3 0h1m2 0h1m3 0h1m2 0h1m3 0h1m3 0h1m2 0h1m3 0h1m2 0h1m3 0h1m3 0h1m2 0h1m3 0h1m2 0h1m3 0h1m2 0h1m3 0h1m3 0h1m2 0h1m3 0h1m2 0h1m3 0h1m2 0h1m3 0h1m3 0h1m2 0h1m3 0h1m2 0h1m3 0h1m2 0h1m3 0h1m3 0h1m2 0h1m3 0h1m2 0h1m3 0h1m3 0h1m2 0h1m3 0h1m2 0h1m3 0h1m2 0h1m3 0h1m3 0h1m2 0h1m3 0h1m2 0h1m3 0h1m2 0h1m3 0h1m3 0h1m2 0h1m3 0h1m2 0h1m3 0h1m2 0h1m3 0h1m3 0h1m2 0h1m3 0h1m2 0h1m3 0h1m2 0h1m3 0h1m3 0h1m2 0h1m3 0h1m2 0h1m3 0h1m3 0h1m2 0h1m3 0h1m2 0h1m3 0h1m2 0h1m3 0h1m3 0h1m2 0h1m3 0h1m2 0h1m3 0h1m2 0h1m3 0h1m3 0h1m2 0h1m3 0h1m2 0h1m3 0h1m2 0h1m3 0h1m3 0h1m2 0h1m3 0h1m2 0h1m3 0h1m2 0h1m3 0h1m3 0h1m2 0h1m3 0h1m2 0h1m3 0h1m3 0h1m2 0h1m3 0h1m2 0h1m3 0h1m2 0h1m3 0h1m3 0h1m2 0h1m3 0h1m2 0h1m3 0h1m2 0h1m3 0h1m3 0h1m2 0h1m3 0h1m2 0h1m3 0h1m2 0h1m3 0h1m3 0h1m2 0h1m3 0h1m2 0h1m3 0h1m2 0h1m3 0h1m3 0h1m2 0h1m3 0h1m2 0h1m3 0h1m3 0h1m2 0h1m3 0h1m2 0h1m3 0h1m2 0h1m3 0h1m3 0h1m2 0h1m3 0h1m2 0h1m3 0h1m2 0h1m3 0h1m3 0h1m2 0h1m3 0h1m2 0h1m3 0h1m2 0h1m3 0h1m3 0h1m2 0h1m3 0h1m2 0h1m3 0h1m3 0h1m2 0h1m3 0h1m2 0h1m3 0h1m2 0h1m3 0h1m3 0h1m2 0h1m3 0h1m2 0h1m3 0h1m2 0h1m3 0h1m3 0h1m2 0h1m3 0h1m2 0h1m3 0h1m2 0h1m3 0h1m3 0h1m2 0h1m3 0h1m2 0h1m3 0h1m2 0h1m3 0h1m3 0h1m2 0h1m3 0h1m2 0h1m3 0h1m3 0h1m2 0h1m3 0h1m2 0h1m3 0h1m2 0h1m3 0h1m3 0h1m2 0h1m3 0h1m2 0h1m3 0h1m2 0h1m3 0h1m3 0h1m2 0h1m3 0h1m2 0h1m3 0h1m2 0h1m3 0h1m3 0h1m2 0h1m3 0h1m2 0h1m3 0h1m2 0h1m3 0h1m3 0h1m2 0h1m3 0h1m2 0h1m3 0h1m3 0h1m2 0h1m3 0h1m2 0h1m3 0h1m2 0h1m3 0h1m3 0h1m2 0h1m3 0h1m2 0h1m3 0h1m2 0h1m3 0h1m3 0h1m2 0h1m3 0h1m2 0h1m3 0h1m2 0h1m3 0h1m3 0h1m2 0h1m3 0h1m2 0h1m3 0h1m2 0h1m3 0h1m3 0h1m2 0h1m3 0h1m2 0h1m3 0h1m3 0h1m2 0h1m3 0h1m2 0h1m3 0h1m2 0h1m3 0h1m3 0h1m2 0h1m3 0h1m2 0h1m3 0h1m2 0h1m3 0h1m3 0h1m2 0h1m3 0h1m2 0h1m3 0h1m2 0h1m3 0h1m3 0h1m2 0h1m3 0h1m2 0h1m3 0h1m2 0h1m3 0h1m3 0h1m2 0h1m3 0h1m2 0h1m3 0h1m3 0h1m2 0h1m3 0h1m2 0h1m3 0h1M344 304.5h1m2 0h1m3 0h1m2 0h1m3 0h1m2 0h1m3 0h1m3 0h1m2 0h1m3 0h1m2 0h1m3 0h1m2 0h1m3 0h1m3 0h1m2 0h1m3 0h1m2 0h1m3 0h1m3 0h1m2 0h1m3 0h1m2 0h1m3 0h1m2 0h1m3 0h1m3 0h1m2 0h1m3 0h1m2 0h1m3 0h1m2 0h1m3 0h1m3 0h1m2 0h1m3 0h1m2 0h1m3 0h1m2 0h1m3 0h1m3 0h1m2 0h1m3 0h1m2 0h1m3 0h1m2 0h1m3 0h1m3 0h1m2 0h1m3 0h1m2 0h1m3 0h1m3 0h1m2 0h1m3 0h1m2 0h1m3 0h1m2 0h1m3 0h1m3 0h1m2 0h1m3 0h1m2 0h1m3 0h1m2 0h1m3 0h1m3 0h1m2 0h1m3 0h1m2 0h1m3 0h1m2 0h1m3 0h1m3 0h1m2 0h1m3 0h1m2 0h1m3 0h1m3 0h1m2 0h1m3 0h1m2 0h1m3 0h1m2 0h1m3 0h1m3 0h1m2 0h1m3 0h1m2 0h1m3 0h1m2 0h1m3 0h1m3 0h1m2 0h1m3 0h1m2 0h1m3 0h1m2 0h1m3 0h1m3 0h1m2 0h1m3 0h1m2 0h1m3 0h1m2 0h1m3 0h1m3 0h1m2 0h1m3 0h1m2 0h1m3 0h1m3 0h1m2 0h1m3 0h1m2 0h1m3 0h1m2 0h1m3 0h1m3 0h1m2 0h1m3 0h1m2 0h1m3 0h1m2 0h1m3 0h1m3 0h1m2 0h1m3 0h1m2 0h1m3 0h1m2 0h1m3 0h1m3 0h1m2 0h1m3 0h1m2 0h1m3 0h1m2 0h1m3 0h1m3 0h1m2 0h1m3 0h1m2 0h1m3 0h1m3 0h1m2 0h1m3 0h1m2 0h1m3 0h1m2 0h1m3 0h1m3 0h1m2 0h1m3 0h1m2 0h1m3 0h1m2 0h1m3 0h1m3 0h1m2 0h1m3 0h1m2 0h1m3 0h1m2 0h1m3 0h1m3 0h1m2 0h1m3 0h1m2 0h1m3 0h1m2 0h1m3 0h1m3 0h1m2 0h1m3 0h1m2 0h1m3 0h1m3 0h1m2 0h1m3 0h1m2 0h1m3 0h1m2 0h1m3 0h1m3 0h1m2 0h1m3 0h1m2 0h1m3 0h1m2 0h1m3 0h1m3 0h1m2 0h1m3 0h1m2 0h1m3 0h1m2 0h1m3 0h1m3 0h1m2 0h1m3 0h1m2 0h1m3 0h1m3 0h1m2 0h1m3 0h1m2 0h1m3 0h1m2 0h1m3 0h1m3 0h1m2 0h1m3 0h1m2 0h1m3 0h1m2 0h1m3 0h1m3 0h1m2 0h1m3 0h1m2 0h1m3 0h1m2 0h1m3 0h1m3 0h1m2 0h1m3 0h1m2 0h1m3 0h1m2 0h1m3 0h1m3 0h1m2 0h1m3 0h1m2 0h1m3 0h1m3 0h1m2 0h1m3 0h1m2 0h1m3 0h1m2 0h1m3 0h1m3 0h1m2 0h1m3 0h1m2 0h1m3 0h1m2 0h1m3 0h1m3 0h1m2 0h1m3 0h1m2 0h1m3 0h1m2 0h1m3 0h1m3 0h1m2 0h1m3 0h1m2 0h1m3 0h1m2 0h1m3 0h1m3 0h1m2 0h1m3 0h1m2 0h1m3 0h1m3 0h1m2 0h1m3 0h1m2 0h1m3 0h1m2 0h1m3 0h1m3 0h1m2 0h1m3 0h1m2 0h1m3 0h1m2 0h1m3 0h1m3 0h1m2 0h1m3 0h1m2 0h1m3 0h1m2 0h1m3 0h1m3 0h1m2 0h1m3 0h1m2 0h1m3 0h1m2 0h1m3 0h1m3 0h1m2 0h1m3 0h1m2 0h1m3 0h1m3 0h1m2 0h1m3 0h1m2 0h1m3 0h1m2 0h1m3 0h1m3 0h1m2 0h1m3 0h1m2 0h1m3 0h1m2 0h1m3 0h1m3 0h1m2 0h1m3 0h1m2 0h1m3 0h1m2 0h1m3 0h1m3 0h1m2 0h1m3 0h1m2 0h1m3 0h1m2 0h1m3 0h1m3 0h1m2 0h1m3 0h1m2 0h1m3 0h1m3 0h1m2 0h1m3 0h1m2 0h1m3 0h1M344 339.5h1m2 0h1m3 0h1m2 0h1m3 0h1m2 0h1m3 0h1m3 0h1m2 0h1m3 0h1m2 0h1m3 0h1m2 0h1m3 0h1m3 0h1m2 0h1m3 0h1m2 0h1m3 0h1m3 0h1m2 0h1m3 0h1m2 0h1m3 0h1m2 0h1m3 0h1m3 0h1m2 0h1m3 0h1m2 0h1m3 0h1m2 0h1m3 0h1m3 0h1m2 0h1m3 0h1m2 0h1m3 0h1m2 0h1m3 0h1m3 0h1m2 0h1m3 0h1m2 0h1m3 0h1m2 0h1m3 0h1m3 0h1m2 0h1m3 0h1m2 0h1m3 0h1m3 0h1m2 0h1m3 0h1m2 0h1m3 0h1m2 0h1m3 0h1m3 0h1m2 0h1m3 0h1m2 0h1m3 0h1m2 0h1m3 0h1m3 0h1m2 0h1m3 0h1m2 0h1m3 0h1m2 0h1m3 0h1m3 0h1m2 0h1m3 0h1m2 0h1m3 0h1m3 0h1m2 0h1m3 0h1m2 0h1m3 0h1m2 0h1m3 0h1m3 0h1m2 0h1m3 0h1m2 0h1m3 0h1m2 0h1m3 0h1m3 0h1m2 0h1m3 0h1m2 0h1m3 0h1m2 0h1m3 0h1m3 0h1m2 0h1m3 0h1m2 0h1m3 0h1m2 0h1m3 0h1m3 0h1m2 0h1m3 0h1m2 0h1m3 0h1m3 0h1m2 0h1m3 0h1m2 0h1m3 0h1m2 0h1m3 0h1m3 0h1m2 0h1m3 0h1m2 0h1m3 0h1m2 0h1m3 0h1m3 0h1m2 0h1m3 0h1m2 0h1m3 0h1m2 0h1m3 0h1m3 0h1m2 0h1m3 0h1m2 0h1m3 0h1m2 0h1m3 0h1m3 0h1m2 0h1m3 0h1m2 0h1m3 0h1m3 0h1m2 0h1m3 0h1m2 0h1m3 0h1m2 0h1m3 0h1m3 0h1m2 0h1m3 0h1m2 0h1m3 0h1m2 0h1m3 0h1m3 0h1m2 0h1m3 0h1m2 0h1m3 0h1m2 0h1m3 0h1m3 0h1m2 0h1m3 0h1m2 0h1m3 0h1m2 0h1m3 0h1m3 0h1m2 0h1m3 0h1m2 0h1m3 0h1m3 0h1m2 0h1m3 0h1m2 0h1m3 0h1m2 0h1m3 0h1m3 0h1m2 0h1m3 0h1m2 0h1m3 0h1m2 0h1m3 0h1m3 0h1m2 0h1m3 0h1m2 0h1m3 0h1m2 0h1m3 0h1m3 0h1m2 0h1m3 0h1m2 0h1m3 0h1m3 0h1m2 0h1m3 0h1m2 0h1m3 0h1m2 0h1m3 0h1m3 0h1m2 0h1m3 0h1m2 0h1m3 0h1m2 0h1m3 0h1m3 0h1m2 0h1m3 0h1m2 0h1m3 0h1m2 0h1m3 0h1m3 0h1m2 0h1m3 0h1m2 0h1m3 0h1m2 0h1m3 0h1m3 0h1m2 0h1m3 0h1m2 0h1m3 0h1m3 0h1m2 0h1m3 0h1m2 0h1m3 0h1m2 0h1m3 0h1m3 0h1m2 0h1m3 0h1m2 0h1m3 0h1m2 0h1m3 0h1m3 0h1m2 0h1m3 0h1m2 0h1m3 0h1m2 0h1m3 0h1m3 0h1m2 0h1m3 0h1m2 0h1m3 0h1m2 0h1m3 0h1m3 0h1m2 0h1m3 0h1m2 0h1m3 0h1m3 0h1m2 0h1m3 0h1m2 0h1m3 0h1m2 0h1m3 0h1m3 0h1m2 0h1m3 0h1m2 0h1m3 0h1m2 0h1m3 0h1m3 0h1m2 0h1m3 0h1m2 0h1m3 0h1m2 0h1m3 0h1m3 0h1m2 0h1m3 0h1m2 0h1m3 0h1m2 0h1m3 0h1m3 0h1m2 0h1m3 0h1m2 0h1m3 0h1m3 0h1m2 0h1m3 0h1m2 0h1m3 0h1m2 0h1m3 0h1m3 0h1m2 0h1m3 0h1m2 0h1m3 0h1m2 0h1m3 0h1m3 0h1m2 0h1m3 0h1m2 0h1m3 0h1m2 0h1m3 0h1m3 0h1m2 0h1m3 0h1m2 0h1m3 0h1m2 0h1m3 0h1m3 0h1m2 0h1m3 0h1m2 0h1m3 0h1m3 0h1m2 0h1m3 0h1m2 0h1m3 0h1M344 375.5h1m2 0h1m3 0h1m2 0h1m3 0h1m2 0h1m3 0h1m3 0h1m2 0h1m3 0h1m2 0h1m3 0h1m2 0h1m3 0h1m3 0h1m2 0h1m3 0h1m2 0h1m3 0h1m3 0h1m2 0h1m3 0h1m2 0h1m3 0h1m2 0h1m3 0h1m3 0h1m2 0h1m3 0h1m2 0h1m3 0h1m2 0h1m3 0h1m3 0h1m2 0h1m3 0h1m2 0h1m3 0h1m2 0h1m3 0h1m3 0h1m2 0h1m3 0h1m2 0h1m3 0h1m2 0h1m3 0h1m3 0h1m2 0h1m3 0h1m2 0h1m3 0h1m3 0h1m2 0h1m3 0h1m2 0h1m3 0h1m2 0h1m3 0h1m3 0h1m2 0h1m3 0h1m2 0h1m3 0h1m2 0h1m3 0h1m3 0h1m2 0h1m3 0h1m2 0h1m3 0h1m2 0h1m3 0h1m3 0h1m2 0h1m3 0h1m2 0h1m3 0h1m3 0h1m2 0h1m3 0h1m2 0h1m3 0h1m2 0h1m3 0h1m3 0h1m2 0h1m3 0h1m2 0h1m3 0h1m2 0h1m3 0h1m3 0h1m2 0h1m3 0h1m2 0h1m3 0h1m2 0h1m3 0h1m3 0h1m2 0h1m3 0h1m2 0h1m3 0h1m2 0h1m3 0h1m3 0h1m2 0h1m3 0h1m2 0h1m3 0h1m3 0h1m2 0h1m3 0h1m2 0h1m3 0h1m2 0h1m3 0h1m3 0h1m2 0h1m3 0h1m2 0h1m3 0h1m2 0h1m3 0h1m3 0h1m2 0h1m3 0h1m2 0h1m3 0h1m2 0h1m3 0h1m3 0h1m2 0h1m3 0h1m2 0h1m3 0h1m2 0h1m3 0h1m3 0h1m2 0h1m3 0h1m2 0h1m3 0h1m3 0h1m2 0h1m3 0h1m2 0h1m3 0h1m2 0h1m3 0h1m3 0h1m2 0h1m3 0h1m2 0h1m3 0h1m2 0h1m3 0h1m3 0h1m2 0h1m3 0h1m2 0h1m3 0h1m2 0h1m3 0h1m3 0h1m2 0h1m3 0h1m2 0h1m3 0h1m2 0h1m3 0h1m3 0h1m2 0h1m3 0h1m2 0h1m3 0h1m3 0h1m2 0h1m3 0h1m2 0h1m3 0h1m2 0h1m3 0h1m3 0h1m2 0h1m3 0h1m2 0h1m3 0h1m2 0h1m3 0h1m3 0h1m2 0h1m3 0h1m2 0h1m3 0h1m2 0h1m3 0h1m3 0h1m2 0h1m3 0h1m2 0h1m3 0h1m3 0h1m2 0h1m3 0h1m2 0h1m3 0h1m2 0h1m3 0h1m3 0h1m2 0h1m3 0h1m2 0h1m3 0h1m2 0h1m3 0h1m3 0h1m2 0h1m3 0h1m2 0h1m3 0h1m2 0h1m3 0h1m3 0h1m2 0h1m3 0h1m2 0h1m3 0h1m2 0h1m3 0h1m3 0h1m2 0h1m3 0h1m2 0h1m3 0h1m3 0h1m2 0h1m3 0h1m2 0h1m3 0h1m2 0h1m3 0h1m3 0h1m2 0h1m3 0h1m2 0h1m3 0h1m2 0h1m3 0h1m3 0h1m2 0h1m3 0h1m2 0h1m3 0h1m2 0h1m3 0h1m3 0h1m2 0h1m3 0h1m2 0h1m3 0h1m2 0h1m3 0h1m3 0h1m2 0h1m3 0h1m2 0h1m3 0h1m3 0h1m2 0h1m3 0h1m2 0h1m3 0h1m2 0h1m3 0h1m3 0h1m2 0h1m3 0h1m2 0h1m3 0h1m2 0h1m3 0h1m3 0h1m2 0h1m3 0h1m2 0h1m3 0h1m2 0h1m3 0h1m3 0h1m2 0h1m3 0h1m2 0h1m3 0h1m2 0h1m3 0h1m3 0h1m2 0h1m3 0h1m2 0h1m3 0h1m3 0h1m2 0h1m3 0h1m2 0h1m3 0h1m2 0h1m3 0h1m3 0h1m2 0h1m3 0h1m2 0h1m3 0h1m2 0h1m3 0h1m3 0h1m2 0h1m3 0h1m2 0h1m3 0h1m2 0h1m3 0h1m3 0h1m2 0h1m3 0h1m2 0h1m3 0h1m2 0h1m3 0h1m3 0h1m2 0h1m3 0h1m2 0h1m3 0h1m3 0h1m2 0h1m3 0h1m2 0h1m3 0h1M344 411.5h1m2 0h1m3 0h1m2 0h1m3 0h1m2 0h1m3 0h1m3 0h1m2 0h1m3 0h1m2 0h1m3 0h1m2 0h1m3 0h1m3 0h1m2 0h1m3 0h1m2 0h1m3 0h1m3 0h1m2 0h1m3 0h1m2 0h1m3 0h1m2 0h1m3 0h1m3 0h1m2 0h1m3 0h1m2 0h1m3 0h1m2 0h1m3 0h1m3 0h1m2 0h1m3 0h1m2 0h1m3 0h1m2 0h1m3 0h1m3 0h1m2 0h1m3 0h1m2 0h1m3 0h1m2 0h1m3 0h1m3 0h1m2 0h1m3 0h1m2 0h1m3 0h1m3 0h1m2 0h1m3 0h1m2 0h1m3 0h1m2 0h1m3 0h1m3 0h1m2 0h1m3 0h1m2 0h1m3 0h1m2 0h1m3 0h1m3 0h1m2 0h1m3 0h1m2 0h1m3 0h1m2 0h1m3 0h1m3 0h1m2 0h1m3 0h1m2 0h1m3 0h1m3 0h1m2 0h1m3 0h1m2 0h1m3 0h1m2 0h1m3 0h1m3 0h1m2 0h1m3 0h1m2 0h1m3 0h1m2 0h1m3 0h1m3 0h1m2 0h1m3 0h1m2 0h1m3 0h1m2 0h1m3 0h1m3 0h1m2 0h1m3 0h1m2 0h1m3 0h1m2 0h1m3 0h1m3 0h1m2 0h1m3 0h1m2 0h1m3 0h1m3 0h1m2 0h1m3 0h1m2 0h1m3 0h1m2 0h1m3 0h1m3 0h1m2 0h1m3 0h1m2 0h1m3 0h1m2 0h1m3 0h1m3 0h1m2 0h1m3 0h1m2 0h1m3 0h1m2 0h1m3 0h1m3 0h1m2 0h1m3 0h1m2 0h1m3 0h1m2 0h1m3 0h1m3 0h1m2 0h1m3 0h1m2 0h1m3 0h1m3 0h1m2 0h1m3 0h1m2 0h1m3 0h1m2 0h1m3 0h1m3 0h1m2 0h1m3 0h1m2 0h1m3 0h1m2 0h1m3 0h1m3 0h1m2 0h1m3 0h1m2 0h1m3 0h1m2 0h1m3 0h1m3 0h1m2 0h1m3 0h1m2 0h1m3 0h1m2 0h1m3 0h1m3 0h1m2 0h1m3 0h1m2 0h1m3 0h1m3 0h1m2 0h1m3 0h1m2 0h1m3 0h1m2 0h1m3 0h1m3 0h1m2 0h1m3 0h1m2 0h1m3 0h1m2 0h1m3 0h1m3 0h1m2 0h1m3 0h1m2 0h1m3 0h1m2 0h1m3 0h1m3 0h1m2 0h1m3 0h1m2 0h1m3 0h1m3 0h1m2 0h1m3 0h1m2 0h1m3 0h1m2 0h1m3 0h1m3 0h1m2 0h1m3 0h1m2 0h1m3 0h1m2 0h1m3 0h1m3 0h1m2 0h1m3 0h1m2 0h1m3 0h1m2 0h1m3 0h1m3 0h1m2 0h1m3 0h1m2 0h1m3 0h1m2 0h1m3 0h1m3 0h1m2 0h1m3 0h1m2 0h1m3 0h1m3 0h1m2 0h1m3 0h1m2 0h1m3 0h1m2 0h1m3 0h1m3 0h1m2 0h1m3 0h1m2 0h1m3 0h1m2 0h1m3 0h1m3 0h1m2 0h1m3 0h1m2 0h1m3 0h1m2 0h1m3 0h1m3 0h1m2 0h1m3 0h1m2 0h1m3 0h1m2 0h1m3 0h1m3 0h1m2 0h1m3 0h1m2 0h1m3 0h1m3 0h1m2 0h1m3 0h1m2 0h1m3 0h1m2 0h1m3 0h1m3 0h1m2 0h1m3 0h1m2 0h1m3 0h1m2 0h1m3 0h1m3 0h1m2 0h1m3 0h1m2 0h1m3 0h1m2 0h1m3 0h1m3 0h1m2 0h1m3 0h1m2 0h1m3 0h1m2 0h1m3 0h1m3 0h1m2 0h1m3 0h1m2 0h1m3 0h1m3 0h1m2 0h1m3 0h1m2 0h1m3 0h1m2 0h1m3 0h1m3 0h1m2 0h1m3 0h1m2 0h1m3 0h1m2 0h1m3 0h1m3 0h1m2 0h1m3 0h1m2 0h1m3 0h1m2 0h1m3 0h1m3 0h1m2 0h1m3 0h1m2 0h1m3 0h1m2 0h1m3 0h1m3 0h1m2 0h1m3 0h1m2 0h1m3 0h1m3 0h1m2 0h1m3 0h1m2 0h1m3 0h1M344 447.5h1m2 0h1m3 0h1m2 0h1m3 0h1m2 0h1m3 0h1m3 0h1m2 0h1m3 0h1m2 0h1m3 0h1m2 0h1m3 0h1m3 0h1m2 0h1m3 0h1m2 0h1m3 0h1m3 0h1m2 0h1m3 0h1m2 0h1m3 0h1m2 0h1m3 0h1m3 0h1m2 0h1m3 0h1m2 0h1m3 0h1m2 0h1m3 0h1m3 0h1m2 0h1m3 0h1m2 0h1m3 0h1m2 0h1m3 0h1m3 0h1m2 0h1m3 0h1m2 0h1m3 0h1m2 0h1m3 0h1m3 0h1m2 0h1m3 0h1m2 0h1m3 0h1m3 0h1m2 0h1m3 0h1m2 0h1m3 0h1m2 0h1m3 0h1m3 0h1m2 0h1m3 0h1m2 0h1m3 0h1m2 0h1m3 0h1m3 0h1m2 0h1m3 0h1m2 0h1m3 0h1m2 0h1m3 0h1m3 0h1m2 0h1m3 0h1m2 0h1m3 0h1m3 0h1m2 0h1m3 0h1m2 0h1m3 0h1m2 0h1m3 0h1m3 0h1m2 0h1m3 0h1m2 0h1m3 0h1m2 0h1m3 0h1m3 0h1m2 0h1m3 0h1m2 0h1m3 0h1m2 0h1m3 0h1m3 0h1m2 0h1m3 0h1m2 0h1m3 0h1m2 0h1m3 0h1m3 0h1m2 0h1m3 0h1m2 0h1m3 0h1m3 0h1m2 0h1m3 0h1m2 0h1m3 0h1m2 0h1m3 0h1m3 0h1m2 0h1m3 0h1m2 0h1m3 0h1m2 0h1m3 0h1m3 0h1m2 0h1m3 0h1m2 0h1m3 0h1m2 0h1m3 0h1m3 0h1m2 0h1m3 0h1m2 0h1m3 0h1m2 0h1m3 0h1m3 0h1m2 0h1m3 0h1m2 0h1m3 0h1m3 0h1m2 0h1m3 0h1m2 0h1m3 0h1m2 0h1m3 0h1m3 0h1m2 0h1m3 0h1m2 0h1m3 0h1m2 0h1m3 0h1m3 0h1m2 0h1m3 0h1m2 0h1m3 0h1m2 0h1m3 0h1m3 0h1m2 0h1m3 0h1m2 0h1m3 0h1m2 0h1m3 0h1m3 0h1m2 0h1m3 0h1m2 0h1m3 0h1m3 0h1m2 0h1m3 0h1m2 0h1m3 0h1m2 0h1m3 0h1m3 0h1m2 0h1m3 0h1m2 0h1m3 0h1m2 0h1m3 0h1m3 0h1m2 0h1m3 0h1m2 0h1m3 0h1m2 0h1m3 0h1m3 0h1m2 0h1m3 0h1m2 0h1m3 0h1m3 0h1m2 0h1m3 0h1m2 0h1m3 0h1m2 0h1m3 0h1m3 0h1m2 0h1m3 0h1m2 0h1m3 0h1m2 0h1m3 0h1m3 0h1m2 0h1m3 0h1m2 0h1m3 0h1m2 0h1m3 0h1m3 0h1m2 0h1m3 0h1m2 0h1m3 0h1m2 0h1m3 0h1m3 0h1m2 0h1m3 0h1m2 0h1m3 0h1m3 0h1m2 0h1m3 0h1m2 0h1m3 0h1m2 0h1m3 0h1m3 0h1m2 0h1m3 0h1m2 0h1m3 0h1m2 0h1m3 0h1m3 0h1m2 0h1m3 0h1m2 0h1m3 0h1m2 0h1m3 0h1m3 0h1m2 0h1m3 0h1m2 0h1m3 0h1m2 0h1m3 0h1m3 0h1m2 0h1m3 0h1m2 0h1m3 0h1m3 0h1m2 0h1m3 0h1m2 0h1m3 0h1m2 0h1m3 0h1m3 0h1m2 0h1m3 0h1m2 0h1m3 0h1m2 0h1m3 0h1m3 0h1m2 0h1m3 0h1m2 0h1m3 0h1m2 0h1m3 0h1m3 0h1m2 0h1m3 0h1m2 0h1m3 0h1m2 0h1m3 0h1m3 0h1m2 0h1m3 0h1m2 0h1m3 0h1m3 0h1m2 0h1m3 0h1m2 0h1m3 0h1m2 0h1m3 0h1m3 0h1m2 0h1m3 0h1m2 0h1m3 0h1m2 0h1m3 0h1m3 0h1m2 0h1m3 0h1m2 0h1m3 0h1m2 0h1m3 0h1m3 0h1m2 0h1m3 0h1m2 0h1m3 0h1m2 0h1m3 0h1m3 0h1m2 0h1m3 0h1m2 0h1m3 0h1m3 0h1m2 0h1m3 0h1m2 0h1m3 0h1M344 482.5h1m2 0h1m3 0h1m2 0h1m3 0h1m2 0h1m3 0h1m3 0h1m2 0h1m3 0h1m2 0h1m3 0h1m2 0h1m3 0h1m3 0h1m2 0h1m3 0h1m2 0h1m3 0h1m3 0h1m2 0h1m3 0h1m2 0h1m3 0h1m2 0h1m3 0h1m3 0h1m2 0h1m3 0h1m2 0h1m3 0h1m2 0h1m3 0h1m3 0h1m2 0h1m3 0h1m2 0h1m3 0h1m2 0h1m3 0h1m3 0h1m2 0h1m3 0h1m2 0h1m3 0h1m2 0h1m3 0h1m3 0h1m2 0h1m3 0h1m2 0h1m3 0h1m3 0h1m2 0h1m3 0h1m2 0h1m3 0h1m2 0h1m3 0h1m3 0h1m2 0h1m3 0h1m2 0h1m3 0h1m2 0h1m3 0h1m3 0h1m2 0h1m3 0h1m2 0h1m3 0h1m2 0h1m3 0h1m3 0h1m2 0h1m3 0h1m2 0h1m3 0h1m3 0h1m2 0h1m3 0h1m2 0h1m3 0h1m2 0h1m3 0h1m3 0h1m2 0h1m3 0h1m2 0h1m3 0h1m2 0h1m3 0h1m3 0h1m2 0h1m3 0h1m2 0h1m3 0h1m2 0h1m3 0h1m3 0h1m2 0h1m3 0h1m2 0h1m3 0h1m2 0h1m3 0h1m3 0h1m2 0h1m3 0h1m2 0h1m3 0h1m3 0h1m2 0h1m3 0h1m2 0h1m3 0h1m2 0h1m3 0h1m3 0h1m2 0h1m3 0h1m2 0h1m3 0h1m2 0h1m3 0h1m3 0h1m2 0h1m3 0h1m2 0h1m3 0h1m2 0h1m3 0h1m3 0h1m2 0h1m3 0h1m2 0h1m3 0h1m2 0h1m3 0h1m3 0h1m2 0h1m3 0h1m2 0h1m3 0h1m3 0h1m2 0h1m3 0h1m2 0h1m3 0h1m2 0h1m3 0h1m3 0h1m2 0h1m3 0h1m2 0h1m3 0h1m2 0h1m3 0h1m3 0h1m2 0h1m3 0h1m2 0h1m3 0h1m2 0h1m3 0h1m3 0h1m2 0h1m3 0h1m2 0h1m3 0h1m2 0h1m3 0h1m3 0h1m2 0h1m3 0h1m2 0h1m3 0h1m3 0h1m2 0h1m3 0h1m2 0h1m3 0h1m2 0h1m3 0h1m3 0h1m2 0h1m3 0h1m2 0h1m3 0h1m2 0h1m3 0h1m3 0h1m2 0h1m3 0h1m2 0h1m3 0h1m2 0h1m3 0h1m3 0h1m2 0h1m3 0h1m2 0h1m3 0h1m3 0h1m2 0h1m3 0h1m2 0h1m3 0h1m2 0h1m3 0h1m3 0h1m2 0h1m3 0h1m2 0h1m3 0h1m2 0h1m3 0h1m3 0h1m2 0h1m3 0h1m2 0h1m3 0h1m2 0h1m3 0h1m3 0h1m2 0h1m3 0h1m2 0h1m3 0h1m2 0h1m3 0h1m3 0h1m2 0h1m3 0h1m2 0h1m3 0h1m3 0h1m2 0h1m3 0h1m2 0h1m3 0h1m2 0h1m3 0h1m3 0h1m2 0h1m3 0h1m2 0h1m3 0h1m2 0h1m3 0h1m3 0h1m2 0h1m3 0h1m2 0h1m3 0h1m2 0h1m3 0h1m3 0h1m2 0h1m3 0h1m2 0h1m3 0h1m2 0h1m3 0h1m3 0h1m2 0h1m3 0h1m2 0h1m3 0h1m3 0h1m2 0h1m3 0h1m2 0h1m3 0h1m2 0h1m3 0h1m3 0h1m2 0h1m3 0h1m2 0h1m3 0h1m2 0h1m3 0h1m3 0h1m2 0h1m3 0h1m2 0h1m3 0h1m2 0h1m3 0h1m3 0h1m2 0h1m3 0h1m2 0h1m3 0h1m2 0h1m3 0h1m3 0h1m2 0h1m3 0h1m2 0h1m3 0h1m3 0h1m2 0h1m3 0h1m2 0h1m3 0h1m2 0h1m3 0h1m3 0h1m2 0h1m3 0h1m2 0h1m3 0h1m2 0h1m3 0h1m3 0h1m2 0h1m3 0h1m2 0h1m3 0h1m2 0h1m3 0h1m3 0h1m2 0h1m3 0h1m2 0h1m3 0h1m2 0h1m3 0h1m3 0h1m2 0h1m3 0h1m2 0h1m3 0h1m3 0h1m2 0h1m3 0h1m2 0h1m3 0h1M344 518.5h1m2 0h1m3 0h1m2 0h1m3 0h1m2 0h1m3 0h1m3 0h1m2 0h1m3 0h1m2 0h1m3 0h1m2 0h1m3 0h1m3 0h1m2 0h1m3 0h1m2 0h1m3 0h1m3 0h1m2 0h1m3 0h1m2 0h1m3 0h1m2 0h1m3 0h1m3 0h1m2 0h1m3 0h1m2 0h1m3 0h1m2 0h1m3 0h1m3 0h1m2 0h1m3 0h1m2 0h1m3 0h1m2 0h1m3 0h1m3 0h1m2 0h1m3 0h1m2 0h1m3 0h1m2 0h1m3 0h1m3 0h1m2 0h1m3 0h1m2 0h1m3 0h1m3 0h1m2 0h1m3 0h1m2 0h1m3 0h1m2 0h1m3 0h1m3 0h1m2 0h1m3 0h1m2 0h1m3 0h1m2 0h1m3 0h1m3 0h1m2 0h1m3 0h1m2 0h1m3 0h1m2 0h1m3 0h1m3 0h1m2 0h1m3 0h1m2 0h1m3 0h1m3 0h1m2 0h1m3 0h1m2 0h1m3 0h1m2 0h1m3 0h1m3 0h1m2 0h1m3 0h1m2 0h1m3 0h1m2 0h1m3 0h1m3 0h1m2 0h1m3 0h1m2 0h1m3 0h1m2 0h1m3 0h1m3 0h1m2 0h1m3 0h1m2 0h1m3 0h1m2 0h1m3 0h1m3 0h1m2 0h1m3 0h1m2 0h1m3 0h1m3 0h1m2 0h1m3 0h1m2 0h1m3 0h1m2 0h1m3 0h1m3 0h1m2 0h1m3 0h1m2 0h1m3 0h1m2 0h1m3 0h1m3 0h1m2 0h1m3 0h1m2 0h1m3 0h1m2 0h1m3 0h1m3 0h1m2 0h1m3 0h1m2 0h1m3 0h1m2 0h1m3 0h1m3 0h1m2 0h1m3 0h1m2 0h1m3 0h1m3 0h1m2 0h1m3 0h1m2 0h1m3 0h1m2 0h1m3 0h1m3 0h1m2 0h1m3 0h1m2 0h1m3 0h1m2 0h1m3 0h1m3 0h1m2 0h1m3 0h1m2 0h1m3 0h1m2 0h1m3 0h1m3 0h1m2 0h1m3 0h1m2 0h1m3 0h1m2 0h1m3 0h1m3 0h1m2 0h1m3 0h1m2 0h1m3 0h1m3 0h1m2 0h1m3 0h1m2 0h1m3 0h1m2 0h1m3 0h1m3 0h1m2 0h1m3 0h1m2 0h1m3 0h1m2 0h1m3 0h1m3 0h1m2 0h1m3 0h1m2 0h1m3 0h1m2 0h1m3 0h1m3 0h1m2 0h1m3 0h1m2 0h1m3 0h1m3 0h1m2 0h1m3 0h1m2 0h1m3 0h1m2 0h1m3 0h1m3 0h1m2 0h1m3 0h1m2 0h1m3 0h1m2 0h1m3 0h1m3 0h1m2 0h1m3 0h1m2 0h1m3 0h1m2 0h1m3 0h1m3 0h1m2 0h1m3 0h1m2 0h1m3 0h1m2 0h1m3 0h1m3 0h1m2 0h1m3 0h1m2 0h1m3 0h1m3 0h1m2 0h1m3 0h1m2 0h1m3 0h1m2 0h1m3 0h1m3 0h1m2 0h1m3 0h1m2 0h1m3 0h1m2 0h1m3 0h1m3 0h1m2 0h1m3 0h1m2 0h1m3 0h1m2 0h1m3 0h1m3 0h1m2 0h1m3 0h1m2 0h1m3 0h1m2 0h1m3 0h1m3 0h1m2 0h1m3 0h1m2 0h1m3 0h1m3 0h1m2 0h1m3 0h1m2 0h1m3 0h1m2 0h1m3 0h1m3 0h1m2 0h1m3 0h1m2 0h1m3 0h1m2 0h1m3 0h1m3 0h1m2 0h1m3 0h1m2 0h1m3 0h1m2 0h1m3 0h1m3 0h1m2 0h1m3 0h1m2 0h1m3 0h1m2 0h1m3 0h1m3 0h1m2 0h1m3 0h1m2 0h1m3 0h1m3 0h1m2 0h1m3 0h1m2 0h1m3 0h1m2 0h1m3 0h1m3 0h1m2 0h1m3 0h1m2 0h1m3 0h1m2 0h1m3 0h1m3 0h1m2 0h1m3 0h1m2 0h1m3 0h1m2 0h1m3 0h1m3 0h1m2 0h1m3 0h1m2 0h1m3 0h1m2 0h1m3 0h1m3 0h1m2 0h1m3 0h1m2 0h1m3 0h1m3 0h1m2 0h1m3 0h1m2 0h1m3 0h1M344 554.5h1m2 0h1m3 0h1m2 0h1m3 0h1m2 0h1m3 0h1m3 0h1m2 0h1m3 0h1m2 0h1m3 0h1m2 0h1m3 0h1m3 0h1m2 0h1m3 0h1m2 0h1m3 0h1m3 0h1m2 0h1m3 0h1m2 0h1m3 0h1m2 0h1m3 0h1m3 0h1m2 0h1m3 0h1m2 0h1m3 0h1m2 0h1m3 0h1m3 0h1m2 0h1m3 0h1m2 0h1m3 0h1m2 0h1m3 0h1m3 0h1m2 0h1m3 0h1m2 0h1m3 0h1m2 0h1m3 0h1m3 0h1m2 0h1m3 0h1m2 0h1m3 0h1m3 0h1m2 0h1m3 0h1m2 0h1m3 0h1m2 0h1m3 0h1m3 0h1m2 0h1m3 0h1m2 0h1m3 0h1m2 0h1m3 0h1m3 0h1m2 0h1m3 0h1m2 0h1m3 0h1m2 0h1m3 0h1m3 0h1m2 0h1m3 0h1m2 0h1m3 0h1m3 0h1m2 0h1m3 0h1m2 0h1m3 0h1m2 0h1m3 0h1m3 0h1m2 0h1m3 0h1m2 0h1m3 0h1m2 0h1m3 0h1m3 0h1m2 0h1m3 0h1m2 0h1m3 0h1m2 0h1m3 0h1m3 0h1m2 0h1m3 0h1m2 0h1m3 0h1m2 0h1m3 0h1m3 0h1m2 0h1m3 0h1m2 0h1m3 0h1m3 0h1m2 0h1m3 0h1m2 0h1m3 0h1m2 0h1m3 0h1m3 0h1m2 0h1m3 0h1m2 0h1m3 0h1m2 0h1m3 0h1m3 0h1m2 0h1m3 0h1m2 0h1m3 0h1m2 0h1m3 0h1m3 0h1m2 0h1m3 0h1m2 0h1m3 0h1m2 0h1m3 0h1m3 0h1m2 0h1m3 0h1m2 0h1m3 0h1m3 0h1m2 0h1m3 0h1m2 0h1m3 0h1m2 0h1m3 0h1m3 0h1m2 0h1m3 0h1m2 0h1m3 0h1m2 0h1m3 0h1m3 0h1m2 0h1m3 0h1m2 0h1m3 0h1m2 0h1m3 0h1m3 0h1m2 0h1m3 0h1m2 0h1m3 0h1m2 0h1m3 0h1m3 0h1m2 0h1m3 0h1m2 0h1m3 0h1m3 0h1m2 0h1m3 0h1m2 0h1m3 0h1m2 0h1m3 0h1m3 0h1m2 0h1m3 0h1m2 0h1m3 0h1m2 0h1m3 0h1m3 0h1m2 0h1m3 0h1m2 0h1m3 0h1m2 0h1m3 0h1m3 0h1m2 0h1m3 0h1m2 0h1m3 0h1m3 0h1m2 0h1m3 0h1m2 0h1m3 0h1m2 0h1m3 0h1m3 0h1m2 0h1m3 0h1m2 0h1m3 0h1m2 0h1m3 0h1m3 0h1m2 0h1m3 0h1m2 0h1m3 0h1m2 0h1m3 0h1m3 0h1m2 0h1m3 0h1m2 0h1m3 0h1m2 0h1m3 0h1m3 0h1m2 0h1m3 0h1m2 0h1m3 0h1m3 0h1m2 0h1m3 0h1m2 0h1m3 0h1m2 0h1m3 0h1m3 0h1m2 0h1m3 0h1m2 0h1m3 0h1m2 0h1m3 0h1m3 0h1m2 0h1m3 0h1m2 0h1m3 0h1m2 0h1m3 0h1m3 0h1m2 0h1m3 0h1m2 0h1m3 0h1m2 0h1m3 0h1m3 0h1m2 0h1m3 0h1m2 0h1m3 0h1m3 0h1m2 0h1m3 0h1m2 0h1m3 0h1m2 0h1m3 0h1m3 0h1m2 0h1m3 0h1m2 0h1m3 0h1m2 0h1m3 0h1m3 0h1m2 0h1m3 0h1m2 0h1m3 0h1m2 0h1m3 0h1m3 0h1m2 0h1m3 0h1m2 0h1m3 0h1m2 0h1m3 0h1m3 0h1m2 0h1m3 0h1m2 0h1m3 0h1m3 0h1m2 0h1m3 0h1m2 0h1m3 0h1m2 0h1m3 0h1m3 0h1m2 0h1m3 0h1m2 0h1m3 0h1m2 0h1m3 0h1m3 0h1m2 0h1m3 0h1m2 0h1m3 0h1m2 0h1m3 0h1m3 0h1m2 0h1m3 0h1m2 0h1m3 0h1m2 0h1m3 0h1m3 0h1m2 0h1m3 0h1m2 0h1m3 0h1m3 0h1m2 0h1m3 0h1m2 0h1m3 0h1M344 590.5h1m2 0h1m3 0h1m2 0h1m3 0h1m2 0h1m3 0h1m3 0h1m2 0h1m3 0h1m2 0h1m3 0h1m2 0h1m3 0h1m3 0h1m2 0h1m3 0h1m2 0h1m3 0h1m3 0h1m2 0h1m3 0h1m2 0h1m3 0h1m2 0h1m3 0h1m3 0h1m2 0h1m3 0h1m2 0h1m3 0h1m2 0h1m3 0h1m3 0h1m2 0h1m3 0h1m2 0h1m3 0h1m2 0h1m3 0h1m3 0h1m2 0h1m3 0h1m2 0h1m3 0h1m2 0h1m3 0h1m3 0h1m2 0h1m3 0h1m2 0h1m3 0h1m3 0h1m2 0h1m3 0h1m2 0h1m3 0h1m2 0h1m3 0h1m3 0h1m2 0h1m3 0h1m2 0h1m3 0h1m2 0h1m3 0h1m3 0h1m2 0h1m3 0h1m2 0h1m3 0h1m2 0h1m3 0h1m3 0h1m2 0h1m3 0h1m2 0h1m3 0h1m3 0h1m2 0h1m3 0h1m2 0h1m3 0h1m2 0h1m3 0h1m3 0h1m2 0h1m3 0h1m2 0h1m3 0h1m2 0h1m3 0h1m3 0h1m2 0h1m3 0h1m2 0h1m3 0h1m2 0h1m3 0h1m3 0h1m2 0h1m3 0h1m2 0h1m3 0h1m2 0h1m3 0h1m3 0h1m2 0h1m3 0h1m2 0h1m3 0h1m3 0h1m2 0h1m3 0h1m2 0h1m3 0h1m2 0h1m3 0h1m3 0h1m2 0h1m3 0h1m2 0h1m3 0h1m2 0h1m3 0h1m3 0h1m2 0h1m3 0h1m2 0h1m3 0h1m2 0h1m3 0h1m3 0h1m2 0h1m3 0h1m2 0h1m3 0h1m2 0h1m3 0h1m3 0h1m2 0h1m3 0h1m2 0h1m3 0h1m3 0h1m2 0h1m3 0h1m2 0h1m3 0h1m2 0h1m3 0h1m3 0h1m2 0h1m3 0h1m2 0h1m3 0h1m2 0h1m3 0h1m3 0h1m2 0h1m3 0h1m2 0h1m3 0h1m2 0h1m3 0h1m3 0h1m2 0h1m3 0h1m2 0h1m3 0h1m2 0h1m3 0h1m3 0h1m2 0h1m3 0h1m2 0h1m3 0h1m3 0h1m2 0h1m3 0h1m2 0h1m3 0h1m2 0h1m3 0h1m3 0h1m2 0h1m3 0h1m2 0h1m3 0h1m2 0h1m3 0h1m3 0h1m2 0h1m3 0h1m2 0h1m3 0h1m2 0h1m3 0h1m3 0h1m2 0h1m3 0h1m2 0h1m3 0h1m3 0h1m2 0h1m3 0h1m2 0h1m3 0h1m2 0h1m3 0h1m3 0h1m2 0h1m3 0h1m2 0h1m3 0h1m2 0h1m3 0h1m3 0h1m2 0h1m3 0h1m2 0h1m3 0h1m2 0h1m3 0h1m3 0h1m2 0h1m3 0h1m2 0h1m3 0h1m2 0h1m3 0h1m3 0h1m2 0h1m3 0h1m2 0h1m3 0h1m3 0h1m2 0h1m3 0h1m2 0h1m3 0h1m2 0h1m3 0h1m3 0h1m2 0h1m3 0h1m2 0h1m3 0h1m2 0h1m3 0h1m3 0h1m2 0h1m3 0h1m2 0h1m3 0h1m2 0h1m3 0h1m3 0h1m2 0h1m3 0h1m2 0h1m3 0h1m2 0h1m3 0h1m3 0h1m2 0h1m3 0h1m2 0h1m3 0h1m3 0h1m2 0h1m3 0h1m2 0h1m3 0h1m2 0h1m3 0h1m3 0h1m2 0h1m3 0h1m2 0h1m3 0h1m2 0h1m3 0h1m3 0h1m2 0h1m3 0h1m2 0h1m3 0h1m2 0h1m3 0h1m3 0h1m2 0h1m3 0h1m2 0h1m3 0h1m2 0h1m3 0h1m3 0h1m2 0h1m3 0h1m2 0h1m3 0h1m3 0h1m2 0h1m3 0h1m2 0h1m3 0h1m2 0h1m3 0h1m3 0h1m2 0h1m3 0h1m2 0h1m3 0h1m2 0h1m3 0h1m3 0h1m2 0h1m3 0h1m2 0h1m3 0h1m2 0h1m3 0h1m3 0h1m2 0h1m3 0h1m2 0h1m3 0h1m2 0h1m3 0h1m3 0h1m2 0h1m3 0h1m2 0h1m3 0h1m3 0h1m2 0h1m3 0h1m2 0h1m3 0h1M344 625.5h1m2 0h1m3 0h1m2 0h1m3 0h1m2 0h1m3 0h1m3 0h1m2 0h1m3 0h1m2 0h1m3 0h1m2 0h1m3 0h1m3 0h1m2 0h1m3 0h1m2 0h1m3 0h1m3 0h1m2 0h1m3 0h1m2 0h1m3 0h1m2 0h1m3 0h1m3 0h1m2 0h1m3 0h1m2 0h1m3 0h1m2 0h1m3 0h1m3 0h1m2 0h1m3 0h1m2 0h1m3 0h1m2 0h1m3 0h1m3 0h1m2 0h1m3 0h1m2 0h1m3 0h1m2 0h1m3 0h1m3 0h1m2 0h1m3 0h1m2 0h1m3 0h1m3 0h1m2 0h1m3 0h1m2 0h1m3 0h1m2 0h1m3 0h1m3 0h1m2 0h1m3 0h1m2 0h1m3 0h1m2 0h1m3 0h1m3 0h1m2 0h1m3 0h1m2 0h1m3 0h1m2 0h1m3 0h1m3 0h1m2 0h1m3 0h1m2 0h1m3 0h1m3 0h1m2 0h1m3 0h1m2 0h1m3 0h1m2 0h1m3 0h1m3 0h1m2 0h1m3 0h1m2 0h1m3 0h1m2 0h1m3 0h1m3 0h1m2 0h1m3 0h1m2 0h1m3 0h1m2 0h1m3 0h1m3 0h1m2 0h1m3 0h1m2 0h1m3 0h1m2 0h1m3 0h1m3 0h1m2 0h1m3 0h1m2 0h1m3 0h1m3 0h1m2 0h1m3 0h1m2 0h1m3 0h1m2 0h1m3 0h1m3 0h1m2 0h1m3 0h1m2 0h1m3 0h1m2 0h1m3 0h1m3 0h1m2 0h1m3 0h1m2 0h1m3 0h1m2 0h1m3 0h1m3 0h1m2 0h1m3 0h1m2 0h1m3 0h1m2 0h1m3 0h1m3 0h1m2 0h1m3 0h1m2 0h1m3 0h1m3 0h1m2 0h1m3 0h1m2 0h1m3 0h1m2 0h1m3 0h1m3 0h1m2 0h1m3 0h1m2 0h1m3 0h1m2 0h1m3 0h1m3 0h1m2 0h1m3 0h1m2 0h1m3 0h1m2 0h1m3 0h1m3 0h1m2 0h1m3 0h1m2 0h1m3 0h1m2 0h1m3 0h1m3 0h1m2 0h1m3 0h1m2 0h1m3 0h1m3 0h1m2 0h1m3 0h1m2 0h1m3 0h1m2 0h1m3 0h1m3 0h1m2 0h1m3 0h1m2 0h1m3 0h1m2 0h1m3 0h1m3 0h1m2 0h1m3 0h1m2 0h1m3 0h1m2 0h1m3 0h1m3 0h1m2 0h1m3 0h1m2 0h1m3 0h1m3 0h1m2 0h1m3 0h1m2 0h1m3 0h1m2 0h1m3 0h1m3 0h1m2 0h1m3 0h1m2 0h1m3 0h1m2 0h1m3 0h1m3 0h1m2 0h1m3 0h1m2 0h1m3 0h1m2 0h1m3 0h1m3 0h1m2 0h1m3 0h1m2 0h1m3 0h1m2 0h1m3 0h1m3 0h1m2 0h1m3 0h1m2 0h1m3 0h1m3 0h1m2 0h1m3 0h1m2 0h1m3 0h1m2 0h1m3 0h1m3 0h1m2 0h1m3 0h1m2 0h1m3 0h1m2 0h1m3 0h1m3 0h1m2 0h1m3 0h1m2 0h1m3 0h1m2 0h1m3 0h1m3 0h1m2 0h1m3 0h1m2 0h1m3 0h1m2 0h1m3 0h1m3 0h1m2 0h1m3 0h1m2 0h1m3 0h1m3 0h1m2 0h1m3 0h1m2 0h1m3 0h1m2 0h1m3 0h1m3 0h1m2 0h1m3 0h1m2 0h1m3 0h1m2 0h1m3 0h1m3 0h1m2 0h1m3 0h1m2 0h1m3 0h1m2 0h1m3 0h1m3 0h1m2 0h1m3 0h1m2 0h1m3 0h1m2 0h1m3 0h1m3 0h1m2 0h1m3 0h1m2 0h1m3 0h1m3 0h1m2 0h1m3 0h1m2 0h1m3 0h1m2 0h1m3 0h1m3 0h1m2 0h1m3 0h1m2 0h1m3 0h1m2 0h1m3 0h1m3 0h1m2 0h1m3 0h1m2 0h1m3 0h1m2 0h1m3 0h1m3 0h1m2 0h1m3 0h1m2 0h1m3 0h1m2 0h1m3 0h1m3 0h1m2 0h1m3 0h1m2 0h1m3 0h1m3 0h1m2 0h1m3 0h1m2 0h1m3 0h1M344 661.5h1m2 0h1m3 0h1m2 0h1m3 0h1m2 0h1m3 0h1m3 0h1m2 0h1m3 0h1m2 0h1m3 0h1m2 0h1m3 0h1m3 0h1m2 0h1m3 0h1m2 0h1m3 0h1m3 0h1m2 0h1m3 0h1m2 0h1m3 0h1m2 0h1m3 0h1m3 0h1m2 0h1m3 0h1m2 0h1m3 0h1m2 0h1m3 0h1m3 0h1m2 0h1m3 0h1m2 0h1m3 0h1m2 0h1m3 0h1m3 0h1m2 0h1m3 0h1m2 0h1m3 0h1m2 0h1m3 0h1m3 0h1m2 0h1m3 0h1m2 0h1m3 0h1m3 0h1m2 0h1m3 0h1m2 0h1m3 0h1m2 0h1m3 0h1m3 0h1m2 0h1m3 0h1m2 0h1m3 0h1m2 0h1m3 0h1m3 0h1m2 0h1m3 0h1m2 0h1m3 0h1m2 0h1m3 0h1m3 0h1m2 0h1m3 0h1m2 0h1m3 0h1m3 0h1m2 0h1m3 0h1m2 0h1m3 0h1m2 0h1m3 0h1m3 0h1m2 0h1m3 0h1m2 0h1m3 0h1m2 0h1m3 0h1m3 0h1m2 0h1m3 0h1m2 0h1m3 0h1m2 0h1m3 0h1m3 0h1m2 0h1m3 0h1m2 0h1m3 0h1m2 0h1m3 0h1m3 0h1m2 0h1m3 0h1m2 0h1m3 0h1m3 0h1m2 0h1m3 0h1m2 0h1m3 0h1m2 0h1m3 0h1m3 0h1m2 0h1m3 0h1m2 0h1m3 0h1m2 0h1m3 0h1m3 0h1m2 0h1m3 0h1m2 0h1m3 0h1m2 0h1m3 0h1m3 0h1m2 0h1m3 0h1m2 0h1m3 0h1m2 0h1m3 0h1m3 0h1m2 0h1m3 0h1m2 0h1m3 0h1m3 0h1m2 0h1m3 0h1m2 0h1m3 0h1m2 0h1m3 0h1m3 0h1m2 0h1m3 0h1m2 0h1m3 0h1m2 0h1m3 0h1m3 0h1m2 0h1m3 0h1m2 0h1m3 0h1m2 0h1m3 0h1m3 0h1m2 0h1m3 0h1m2 0h1m3 0h1m2 0h1m3 0h1m3 0h1m2 0h1m3 0h1m2 0h1m3 0h1m3 0h1m2 0h1m3 0h1m2 0h1m3 0h1m2 0h1m3 0h1m3 0h1m2 0h1m3 0h1m2 0h1m3 0h1m2 0h1m3 0h1m3 0h1m2 0h1m3 0h1m2 0h1m3 0h1m2 0h1m3 0h1m3 0h1m2 0h1m3 0h1m2 0h1m3 0h1m3 0h1m2 0h1m3 0h1m2 0h1m3 0h1m2 0h1m3 0h1m3 0h1m2 0h1m3 0h1m2 0h1m3 0h1m2 0h1m3 0h1m3 0h1m2 0h1m3 0h1m2 0h1m3 0h1m2 0h1m3 0h1m3 0h1m2 0h1m3 0h1m2 0h1m3 0h1m2 0h1m3 0h1m3 0h1m2 0h1m3 0h1m2 0h1m3 0h1m3 0h1m2 0h1m3 0h1m2 0h1m3 0h1m2 0h1m3 0h1m3 0h1m2 0h1m3 0h1m2 0h1m3 0h1m2 0h1m3 0h1m3 0h1m2 0h1m3 0h1m2 0h1m3 0h1m2 0h1m3 0h1m3 0h1m2 0h1m3 0h1m2 0h1m3 0h1m2 0h1m3 0h1m3 0h1m2 0h1m3 0h1m2 0h1m3 0h1m3 0h1m2 0h1m3 0h1m2 0h1m3 0h1m2 0h1m3 0h1m3 0h1m2 0h1m3 0h1m2 0h1m3 0h1m2 0h1m3 0h1m3 0h1m2 0h1m3 0h1m2 0h1m3 0h1m2 0h1m3 0h1m3 0h1m2 0h1m3 0h1m2 0h1m3 0h1m2 0h1m3 0h1m3 0h1m2 0h1m3 0h1m2 0h1m3 0h1m3 0h1m2 0h1m3 0h1m2 0h1m3 0h1m2 0h1m3 0h1m3 0h1m2 0h1m3 0h1m2 0h1m3 0h1m2 0h1m3 0h1m3 0h1m2 0h1m3 0h1m2 0h1m3 0h1m2 0h1m3 0h1m3 0h1m2 0h1m3 0h1m2 0h1m3 0h1m2 0h1m3 0h1m3 0h1m2 0h1m3 0h1m2 0h1m3 0h1m3 0h1m2 0h1m3 0h1m2 0h1m3 0h1M344 697.5h1m2 0h1m3 0h1m2 0h1m3 0h1m2 0h1m3 0h1m3 0h1m2 0h1m3 0h1m2 0h1m3 0h1m2 0h1m3 0h1m3 0h1m2 0h1m3 0h1m2 0h1m3 0h1m3 0h1m2 0h1m3 0h1m2 0h1m3 0h1m2 0h1m3 0h1m3 0h1m2 0h1m3 0h1m2 0h1m3 0h1m2 0h1m3 0h1m3 0h1m2 0h1m3 0h1m2 0h1m3 0h1m2 0h1m3 0h1m3 0h1m2 0h1m3 0h1m2 0h1m3 0h1m2 0h1m3 0h1m3 0h1m2 0h1m3 0h1m2 0h1m3 0h1m3 0h1m2 0h1m3 0h1m2 0h1m3 0h1m2 0h1m3 0h1m3 0h1m2 0h1m3 0h1m2 0h1m3 0h1m2 0h1m3 0h1m3 0h1m2 0h1m3 0h1m2 0h1m3 0h1m2 0h1m3 0h1m3 0h1m2 0h1m3 0h1m2 0h1m3 0h1m3 0h1m2 0h1m3 0h1m2 0h1m3 0h1m2 0h1m3 0h1m3 0h1m2 0h1m3 0h1m2 0h1m3 0h1m2 0h1m3 0h1m3 0h1m2 0h1m3 0h1m2 0h1m3 0h1m2 0h1m3 0h1m3 0h1m2 0h1m3 0h1m2 0h1m3 0h1m2 0h1m3 0h1m3 0h1m2 0h1m3 0h1m2 0h1m3 0h1m3 0h1m2 0h1m3 0h1m2 0h1m3 0h1m2 0h1m3 0h1m3 0h1m2 0h1m3 0h1m2 0h1m3 0h1m2 0h1m3 0h1m3 0h1m2 0h1m3 0h1m2 0h1m3 0h1m2 0h1m3 0h1m3 0h1m2 0h1m3 0h1m2 0h1m3 0h1m2 0h1m3 0h1m3 0h1m2 0h1m3 0h1m2 0h1m3 0h1m3 0h1m2 0h1m3 0h1m2 0h1m3 0h1m2 0h1m3 0h1m3 0h1m2 0h1m3 0h1m2 0h1m3 0h1m2 0h1m3 0h1m3 0h1m2 0h1m3 0h1m2 0h1m3 0h1m2 0h1m3 0h1m3 0h1m2 0h1m3 0h1m2 0h1m3 0h1m2 0h1m3 0h1m3 0h1m2 0h1m3 0h1m2 0h1m3 0h1m3 0h1m2 0h1m3 0h1m2 0h1m3 0h1m2 0h1m3 0h1m3 0h1m2 0h1m3 0h1m2 0h1m3 0h1m2 0h1m3 0h1m3 0h1m2 0h1m3 0h1m2 0h1m3 0h1m2 0h1m3 0h1m3 0h1m2 0h1m3 0h1m2 0h1m3 0h1m3 0h1m2 0h1m3 0h1m2 0h1m3 0h1m2 0h1m3 0h1m3 0h1m2 0h1m3 0h1m2 0h1m3 0h1m2 0h1m3 0h1m3 0h1m2 0h1m3 0h1m2 0h1m3 0h1m2 0h1m3 0h1m3 0h1m2 0h1m3 0h1m2 0h1m3 0h1m2 0h1m3 0h1m3 0h1m2 0h1m3 0h1m2 0h1m3 0h1m3 0h1m2 0h1m3 0h1m2 0h1m3 0h1m2 0h1m3 0h1m3 0h1m2 0h1m3 0h1m2 0h1m3 0h1m2 0h1m3 0h1m3 0h1m2 0h1m3 0h1m2 0h1m3 0h1m2 0h1m3 0h1m3 0h1m2 0h1m3 0h1m2 0h1m3 0h1m2 0h1m3 0h1m3 0h1m2 0h1m3 0h1m2 0h1m3 0h1m3 0h1m2 0h1m3 0h1m2 0h1m3 0h1m2 0h1m3 0h1m3 0h1m2 0h1m3 0h1m2 0h1m3 0h1m2 0h1m3 0h1m3 0h1m2 0h1m3 0h1m2 0h1m3 0h1m2 0h1m3 0h1m3 0h1m2 0h1m3 0h1m2 0h1m3 0h1m2 0h1m3 0h1m3 0h1m2 0h1m3 0h1m2 0h1m3 0h1m3 0h1m2 0h1m3 0h1m2 0h1m3 0h1m2 0h1m3 0h1m3 0h1m2 0h1m3 0h1m2 0h1m3 0h1m2 0h1m3 0h1m3 0h1m2 0h1m3 0h1m2 0h1m3 0h1m2 0h1m3 0h1m3 0h1m2 0h1m3 0h1m2 0h1m3 0h1m2 0h1m3 0h1m3 0h1m2 0h1m3 0h1m2 0h1m3 0h1m3 0h1m2 0h1m3 0h1m2 0h1m3 0h1M344 733.5h1m2 0h1m3 0h1m2 0h1m3 0h1m2 0h1m3 0h1m3 0h1m2 0h1m3 0h1m2 0h1m3 0h1m2 0h1m3 0h1m3 0h1m2 0h1m3 0h1m2 0h1m3 0h1m3 0h1m2 0h1m3 0h1m2 0h1m3 0h1m2 0h1m3 0h1m3 0h1m2 0h1m3 0h1m2 0h1m3 0h1m2 0h1m3 0h1m3 0h1m2 0h1m3 0h1m2 0h1m3 0h1m2 0h1m3 0h1m3 0h1m2 0h1m3 0h1m2 0h1m3 0h1m2 0h1m3 0h1m3 0h1m2 0h1m3 0h1m2 0h1m3 0h1m3 0h1m2 0h1m3 0h1m2 0h1m3 0h1m2 0h1m3 0h1m3 0h1m2 0h1m3 0h1m2 0h1m3 0h1m2 0h1m3 0h1m3 0h1m2 0h1m3 0h1m2 0h1m3 0h1m2 0h1m3 0h1m3 0h1m2 0h1m3 0h1m2 0h1m3 0h1m3 0h1m2 0h1m3 0h1m2 0h1m3 0h1m2 0h1m3 0h1m3 0h1m2 0h1m3 0h1m2 0h1m3 0h1m2 0h1m3 0h1m3 0h1m2 0h1m3 0h1m2 0h1m3 0h1m2 0h1m3 0h1m3 0h1m2 0h1m3 0h1m2 0h1m3 0h1m2 0h1m3 0h1m3 0h1m2 0h1m3 0h1m2 0h1m3 0h1m3 0h1m2 0h1m3 0h1m2 0h1m3 0h1m2 0h1m3 0h1m3 0h1m2 0h1m3 0h1m2 0h1m3 0h1m2 0h1m3 0h1m3 0h1m2 0h1m3 0h1m2 0h1m3 0h1m2 0h1m3 0h1m3 0h1m2 0h1m3 0h1m2 0h1m3 0h1m2 0h1m3 0h1m3 0h1m2 0h1m3 0h1m2 0h1m3 0h1m3 0h1m2 0h1m3 0h1m2 0h1m3 0h1m2 0h1m3 0h1m3 0h1m2 0h1m3 0h1m2 0h1m3 0h1m2 0h1m3 0h1m3 0h1m2 0h1m3 0h1m2 0h1m3 0h1m2 0h1m3 0h1m3 0h1m2 0h1m3 0h1m2 0h1m3 0h1m2 0h1m3 0h1m3 0h1m2 0h1m3 0h1m2 0h1m3 0h1m3 0h1m2 0h1m3 0h1m2 0h1m3 0h1m2 0h1m3 0h1m3 0h1m2 0h1m3 0h1m2 0h1m3 0h1m2 0h1m3 0h1m3 0h1m2 0h1m3 0h1m2 0h1m3 0h1m2 0h1m3 0h1m3 0h1m2 0h1m3 0h1m2 0h1m3 0h1m3 0h1m2 0h1m3 0h1m2 0h1m3 0h1m2 0h1m3 0h1m3 0h1m2 0h1m3 0h1m2 0h1m3 0h1m2 0h1m3 0h1m3 0h1m2 0h1m3 0h1m2 0h1m3 0h1m2 0h1m3 0h1m3 0h1m2 0h1m3 0h1m2 0h1m3 0h1m2 0h1m3 0h1m3 0h1m2 0h1m3 0h1m2 0h1m3 0h1m3 0h1m2 0h1m3 0h1m2 0h1m3 0h1m2 0h1m3 0h1m3 0h1m2 0h1m3 0h1m2 0h1m3 0h1m2 0h1m3 0h1m3 0h1m2 0h1m3 0h1m2 0h1m3 0h1m2 0h1m3 0h1m3 0h1m2 0h1m3 0h1m2 0h1m3 0h1m2 0h1m3 0h1m3 0h1m2 0h1m3 0h1m2 0h1m3 0h1m3 0h1m2 0h1m3 0h1m2 0h1m3 0h1m2 0h1m3 0h1m3 0h1m2 0h1m3 0h1m2 0h1m3 0h1m2 0h1m3 0h1m3 0h1m2 0h1m3 0h1m2 0h1m3 0h1m2 0h1m3 0h1m3 0h1m2 0h1m3 0h1m2 0h1m3 0h1m2 0h1m3 0h1m3 0h1m2 0h1m3 0h1m2 0h1m3 0h1m3 0h1m2 0h1m3 0h1m2 0h1m3 0h1m2 0h1m3 0h1m3 0h1m2 0h1m3 0h1m2 0h1m3 0h1m2 0h1m3 0h1m3 0h1m2 0h1m3 0h1m2 0h1m3 0h1m2 0h1m3 0h1m3 0h1m2 0h1m3 0h1m2 0h1m3 0h1m2 0h1m3 0h1m3 0h1m2 0h1m3 0h1m2 0h1m3 0h1m3 0h1m2 0h1m3 0h1m2 0h1m3 0h1M344 768.5h1m2 0h1m3 0h1m2 0h1m3 0h1m2 0h1m3 0h1m3 0h1m2 0h1m3 0h1m2 0h1m3 0h1m2 0h1m3 0h1m3 0h1m2 0h1m3 0h1m2 0h1m3 0h1m3 0h1m2 0h1m3 0h1m2 0h1m3 0h1m2 0h1m3 0h1m3 0h1m2 0h1m3 0h1m2 0h1m3 0h1m2 0h1m3 0h1m3 0h1m2 0h1m3 0h1m2 0h1m3 0h1m2 0h1m3 0h1m3 0h1m2 0h1m3 0h1m2 0h1m3 0h1m2 0h1m3 0h1m3 0h1m2 0h1m3 0h1m2 0h1m3 0h1m3 0h1m2 0h1m3 0h1m2 0h1m3 0h1m2 0h1m3 0h1m3 0h1m2 0h1m3 0h1m2 0h1m3 0h1m2 0h1m3 0h1m3 0h1m2 0h1m3 0h1m2 0h1m3 0h1m2 0h1m3 0h1m3 0h1m2 0h1m3 0h1m2 0h1m3 0h1m3 0h1m2 0h1m3 0h1m2 0h1m3 0h1m2 0h1m3 0h1m3 0h1m2 0h1m3 0h1m2 0h1m3 0h1m2 0h1m3 0h1m3 0h1m2 0h1m3 0h1m2 0h1m3 0h1m2 0h1m3 0h1m3 0h1m2 0h1m3 0h1m2 0h1m3 0h1m2 0h1m3 0h1m3 0h1m2 0h1m3 0h1m2 0h1m3 0h1m3 0h1m2 0h1m3 0h1m2 0h1m3 0h1m2 0h1m3 0h1m3 0h1m2 0h1m3 0h1m2 0h1m3 0h1m2 0h1m3 0h1m3 0h1m2 0h1m3 0h1m2 0h1m3 0h1m2 0h1m3 0h1m3 0h1m2 0h1m3 0h1m2 0h1m3 0h1m2 0h1m3 0h1m3 0h1m2 0h1m3 0h1m2 0h1m3 0h1m3 0h1m2 0h1m3 0h1m2 0h1m3 0h1m2 0h1m3 0h1m3 0h1m2 0h1m3 0h1m2 0h1m3 0h1m2 0h1m3 0h1m3 0h1m2 0h1m3 0h1m2 0h1m3 0h1m2 0h1m3 0h1m3 0h1m2 0h1m3 0h1m2 0h1m3 0h1m2 0h1m3 0h1m3 0h1m2 0h1m3 0h1m2 0h1m3 0h1m3 0h1m2 0h1m3 0h1m2 0h1m3 0h1m2 0h1m3 0h1m3 0h1m2 0h1m3 0h1m2 0h1m3 0h1m2 0h1m3 0h1m3 0h1m2 0h1m3 0h1m2 0h1m3 0h1m2 0h1m3 0h1m3 0h1m2 0h1m3 0h1m2 0h1m3 0h1m3 0h1m2 0h1m3 0h1m2 0h1m3 0h1m2 0h1m3 0h1m3 0h1m2 0h1m3 0h1m2 0h1m3 0h1m2 0h1m3 0h1m3 0h1m2 0h1m3 0h1m2 0h1m3 0h1m2 0h1m3 0h1m3 0h1m2 0h1m3 0h1m2 0h1m3 0h1m2 0h1m3 0h1m3 0h1m2 0h1m3 0h1m2 0h1m3 0h1m3 0h1m2 0h1m3 0h1m2 0h1m3 0h1m2 0h1m3 0h1m3 0h1m2 0h1m3 0h1m2 0h1m3 0h1m2 0h1m3 0h1m3 0h1m2 0h1m3 0h1m2 0h1m3 0h1m2 0h1m3 0h1m3 0h1m2 0h1m3 0h1m2 0h1m3 0h1m2 0h1m3 0h1m3 0h1m2 0h1m3 0h1m2 0h1m3 0h1m3 0h1m2 0h1m3 0h1m2 0h1m3 0h1m2 0h1m3 0h1m3 0h1m2 0h1m3 0h1m2 0h1m3 0h1m2 0h1m3 0h1m3 0h1m2 0h1m3 0h1m2 0h1m3 0h1m2 0h1m3 0h1m3 0h1m2 0h1m3 0h1m2 0h1m3 0h1m2 0h1m3 0h1m3 0h1m2 0h1m3 0h1m2 0h1m3 0h1m3 0h1m2 0h1m3 0h1m2 0h1m3 0h1m2 0h1m3 0h1m3 0h1m2 0h1m3 0h1m2 0h1m3 0h1m2 0h1m3 0h1m3 0h1m2 0h1m3 0h1m2 0h1m3 0h1m2 0h1m3 0h1m3 0h1m2 0h1m3 0h1m2 0h1m3 0h1m2 0h1m3 0h1m3 0h1m2 0h1m3 0h1m2 0h1m3 0h1m3 0h1m2 0h1m3 0h1m2 0h1m3 0h1M344 804.5h1m2 0h1m3 0h1m2 0h1m3 0h1m2 0h1m3 0h1m3 0h1m2 0h1m3 0h1m2 0h1m3 0h1m2 0h1m3 0h1m3 0h1m2 0h1m3 0h1m2 0h1m3 0h1m3 0h1m2 0h1m3 0h1m2 0h1m3 0h1m2 0h1m3 0h1m3 0h1m2 0h1m3 0h1m2 0h1m3 0h1m2 0h1m3 0h1m3 0h1m2 0h1m3 0h1m2 0h1m3 0h1m2 0h1m3 0h1m3 0h1m2 0h1m3 0h1m2 0h1m3 0h1m2 0h1m3 0h1m3 0h1m2 0h1m3 0h1m2 0h1m3 0h1m3 0h1m2 0h1m3 0h1m2 0h1m3 0h1m2 0h1m3 0h1m3 0h1m2 0h1m3 0h1m2 0h1m3 0h1m2 0h1m3 0h1m3 0h1m2 0h1m3 0h1m2 0h1m3 0h1m2 0h1m3 0h1m3 0h1m2 0h1m3 0h1m2 0h1m3 0h1m3 0h1m2 0h1m3 0h1m2 0h1m3 0h1m2 0h1m3 0h1m3 0h1m2 0h1m3 0h1m2 0h1m3 0h1m2 0h1m3 0h1m3 0h1m2 0h1m3 0h1m2 0h1m3 0h1m2 0h1m3 0h1m3 0h1m2 0h1m3 0h1m2 0h1m3 0h1m2 0h1m3 0h1m3 0h1m2 0h1m3 0h1m2 0h1m3 0h1m3 0h1m2 0h1m3 0h1m2 0h1m3 0h1m2 0h1m3 0h1m3 0h1m2 0h1m3 0h1m2 0h1m3 0h1m2 0h1m3 0h1m3 0h1m2 0h1m3 0h1m2 0h1m3 0h1m2 0h1m3 0h1m3 0h1m2 0h1m3 0h1m2 0h1m3 0h1m2 0h1m3 0h1m3 0h1m2 0h1m3 0h1m2 0h1m3 0h1m3 0h1m2 0h1m3 0h1m2 0h1m3 0h1m2 0h1m3 0h1m3 0h1m2 0h1m3 0h1m2 0h1m3 0h1m2 0h1m3 0h1m3 0h1m2 0h1m3 0h1m2 0h1m3 0h1m2 0h1m3 0h1m3 0h1m2 0h1m3 0h1m2 0h1m3 0h1m2 0h1m3 0h1m3 0h1m2 0h1m3 0h1m2 0h1m3 0h1m3 0h1m2 0h1m3 0h1m2 0h1m3 0h1m2 0h1m3 0h1m3 0h1m2 0h1m3 0h1m2 0h1m3 0h1m2 0h1m3 0h1m3 0h1m2 0h1m3 0h1m2 0h1m3 0h1m2 0h1m3 0h1m3 0h1m2 0h1m3 0h1m2 0h1m3 0h1m3 0h1m2 0h1m3 0h1m2 0h1m3 0h1m2 0h1m3 0h1m3 0h1m2 0h1m3 0h1m2 0h1m3 0h1m2 0h1m3 0h1m3 0h1m2 0h1m3 0h1m2 0h1m3 0h1m2 0h1m3 0h1m3 0h1m2 0h1m3 0h1m2 0h1m3 0h1m2 0h1m3 0h1m3 0h1m2 0h1m3 0h1m2 0h1m3 0h1m3 0h1m2 0h1m3 0h1m2 0h1m3 0h1m2 0h1m3 0h1m3 0h1m2 0h1m3 0h1m2 0h1m3 0h1m2 0h1m3 0h1m3 0h1m2 0h1m3 0h1m2 0h1m3 0h1m2 0h1m3 0h1m3 0h1m2 0h1m3 0h1m2 0h1m3 0h1m2 0h1m3 0h1m3 0h1m2 0h1m3 0h1m2 0h1m3 0h1m3 0h1m2 0h1m3 0h1m2 0h1m3 0h1m2 0h1m3 0h1m3 0h1m2 0h1m3 0h1m2 0h1m3 0h1m2 0h1m3 0h1m3 0h1m2 0h1m3 0h1m2 0h1m3 0h1m2 0h1m3 0h1m3 0h1m2 0h1m3 0h1m2 0h1m3 0h1m2 0h1m3 0h1m3 0h1m2 0h1m3 0h1m2 0h1m3 0h1m3 0h1m2 0h1m3 0h1m2 0h1m3 0h1m2 0h1m3 0h1m3 0h1m2 0h1m3 0h1m2 0h1m3 0h1m2 0h1m3 0h1m3 0h1m2 0h1m3 0h1m2 0h1m3 0h1m2 0h1m3 0h1m3 0h1m2 0h1m3 0h1m2 0h1m3 0h1m2 0h1m3 0h1m3 0h1m2 0h1m3 0h1m2 0h1m3 0h1m3 0h1m2 0h1m3 0h1m2 0h1m3 0h1M344 840.5h1m2 0h1m3 0h1m2 0h1m3 0h1m2 0h1m3 0h1m3 0h1m2 0h1m3 0h1m2 0h1m3 0h1m2 0h1m3 0h1m3 0h1m2 0h1m3 0h1m2 0h1m3 0h1m3 0h1m2 0h1m3 0h1m2 0h1m3 0h1m2 0h1m3 0h1m3 0h1m2 0h1m3 0h1m2 0h1m3 0h1m2 0h1m3 0h1m3 0h1m2 0h1m3 0h1m2 0h1m3 0h1m2 0h1m3 0h1m3 0h1m2 0h1m3 0h1m2 0h1m3 0h1m2 0h1m3 0h1m3 0h1m2 0h1m3 0h1m2 0h1m3 0h1m3 0h1m2 0h1m3 0h1m2 0h1m3 0h1m2 0h1m3 0h1m3 0h1m2 0h1m3 0h1m2 0h1m3 0h1m2 0h1m3 0h1m3 0h1m2 0h1m3 0h1m2 0h1m3 0h1m2 0h1m3 0h1m3 0h1m2 0h1m3 0h1m2 0h1m3 0h1m3 0h1m2 0h1m3 0h1m2 0h1m3 0h1m2 0h1m3 0h1m3 0h1m2 0h1m3 0h1m2 0h1m3 0h1m2 0h1m3 0h1m3 0h1m2 0h1m3 0h1m2 0h1m3 0h1m2 0h1m3 0h1m3 0h1m2 0h1m3 0h1m2 0h1m3 0h1m2 0h1m3 0h1m3 0h1m2 0h1m3 0h1m2 0h1m3 0h1m3 0h1m2 0h1m3 0h1m2 0h1m3 0h1m2 0h1m3 0h1m3 0h1m2 0h1m3 0h1m2 0h1m3 0h1m2 0h1m3 0h1m3 0h1m2 0h1m3 0h1m2 0h1m3 0h1m2 0h1m3 0h1m3 0h1m2 0h1m3 0h1m2 0h1m3 0h1m2 0h1m3 0h1m3 0h1m2 0h1m3 0h1m2 0h1m3 0h1m3 0h1m2 0h1m3 0h1m2 0h1m3 0h1m2 0h1m3 0h1m3 0h1m2 0h1m3 0h1m2 0h1m3 0h1m2 0h1m3 0h1m3 0h1m2 0h1m3 0h1m2 0h1m3 0h1m2 0h1m3 0h1m3 0h1m2 0h1m3 0h1m2 0h1m3 0h1m2 0h1m3 0h1m3 0h1m2 0h1m3 0h1m2 0h1m3 0h1m3 0h1m2 0h1m3 0h1m2 0h1m3 0h1m2 0h1m3 0h1m3 0h1m2 0h1m3 0h1m2 0h1m3 0h1m2 0h1m3 0h1m3 0h1m2 0h1m3 0h1m2 0h1m3 0h1m2 0h1m3 0h1m3 0h1m2 0h1m3 0h1m2 0h1m3 0h1m3 0h1m2 0h1m3 0h1m2 0h1m3 0h1m2 0h1m3 0h1m3 0h1m2 0h1m3 0h1m2 0h1m3 0h1m2 0h1m3 0h1m3 0h1m2 0h1m3 0h1m2 0h1m3 0h1m2 0h1m3 0h1m3 0h1m2 0h1m3 0h1m2 0h1m3 0h1m2 0h1m3 0h1m3 0h1m2 0h1m3 0h1m2 0h1m3 0h1m3 0h1m2 0h1m3 0h1m2 0h1m3 0h1m2 0h1m3 0h1m3 0h1m2 0h1m3 0h1m2 0h1m3 0h1m2 0h1m3 0h1m3 0h1m2 0h1m3 0h1m2 0h1m3 0h1m2 0h1m3 0h1m3 0h1m2 0h1m3 0h1m2 0h1m3 0h1m2 0h1m3 0h1m3 0h1m2 0h1m3 0h1m2 0h1m3 0h1m3 0h1m2 0h1m3 0h1m2 0h1m3 0h1m2 0h1m3 0h1m3 0h1m2 0h1m3 0h1m2 0h1m3 0h1m2 0h1m3 0h1m3 0h1m2 0h1m3 0h1m2 0h1m3 0h1m2 0h1m3 0h1m3 0h1m2 0h1m3 0h1m2 0h1m3 0h1m2 0h1m3 0h1m3 0h1m2 0h1m3 0h1m2 0h1m3 0h1m3 0h1m2 0h1m3 0h1m2 0h1m3 0h1m2 0h1m3 0h1m3 0h1m2 0h1m3 0h1m2 0h1m3 0h1m2 0h1m3 0h1m3 0h1m2 0h1m3 0h1m2 0h1m3 0h1m2 0h1m3 0h1m3 0h1m2 0h1m3 0h1m2 0h1m3 0h1m2 0h1m3 0h1m3 0h1m2 0h1m3 0h1m2 0h1m3 0h1m3 0h1m2 0h1m3 0h1m2 0h1m3 0h1M344 876.5h1m2 0h1m3 0h1m2 0h1m3 0h1m2 0h1m3 0h1m3 0h1m2 0h1m3 0h1m2 0h1m3 0h1m2 0h1m3 0h1m3 0h1m2 0h1m3 0h1m2 0h1m3 0h1m3 0h1m2 0h1m3 0h1m2 0h1m3 0h1m2 0h1m3 0h1m3 0h1m2 0h1m3 0h1m2 0h1m3 0h1m2 0h1m3 0h1m3 0h1m2 0h1m3 0h1m2 0h1m3 0h1m2 0h1m3 0h1m3 0h1m2 0h1m3 0h1m2 0h1m3 0h1m2 0h1m3 0h1m3 0h1m2 0h1m3 0h1m2 0h1m3 0h1m3 0h1m2 0h1m3 0h1m2 0h1m3 0h1m2 0h1m3 0h1m3 0h1m2 0h1m3 0h1m2 0h1m3 0h1m2 0h1m3 0h1m3 0h1m2 0h1m3 0h1m2 0h1m3 0h1m2 0h1m3 0h1m3 0h1m2 0h1m3 0h1m2 0h1m3 0h1m3 0h1m2 0h1m3 0h1m2 0h1m3 0h1m2 0h1m3 0h1m3 0h1m2 0h1m3 0h1m2 0h1m3 0h1m2 0h1m3 0h1m3 0h1m2 0h1m3 0h1m2 0h1m3 0h1m2 0h1m3 0h1m3 0h1m2 0h1m3 0h1m2 0h1m3 0h1m2 0h1m3 0h1m3 0h1m2 0h1m3 0h1m2 0h1m3 0h1m3 0h1m2 0h1m3 0h1m2 0h1m3 0h1m2 0h1m3 0h1m3 0h1m2 0h1m3 0h1m2 0h1m3 0h1m2 0h1m3 0h1m3 0h1m2 0h1m3 0h1m2 0h1m3 0h1m2 0h1m3 0h1m3 0h1m2 0h1m3 0h1m2 0h1m3 0h1m2 0h1m3 0h1m3 0h1m2 0h1m3 0h1m2 0h1m3 0h1m3 0h1m2 0h1m3 0h1m2 0h1m3 0h1m2 0h1m3 0h1m3 0h1m2 0h1m3 0h1m2 0h1m3 0h1m2 0h1m3 0h1m3 0h1m2 0h1m3 0h1m2 0h1m3 0h1m2 0h1m3 0h1m3 0h1m2 0h1m3 0h1m2 0h1m3 0h1m2 0h1m3 0h1m3 0h1m2 0h1m3 0h1m2 0h1m3 0h1m3 0h1m2 0h1m3 0h1m2 0h1m3 0h1m2 0h1m3 0h1m3 0h1m2 0h1m3 0h1m2 0h1m3 0h1m2 0h1m3 0h1m3 0h1m2 0h1m3 0h1m2 0h1m3 0h1m2 0h1m3 0h1m3 0h1m2 0h1m3 0h1m2 0h1m3 0h1m3 0h1m2 0h1m3 0h1m2 0h1m3 0h1m2 0h1m3 0h1m3 0h1m2 0h1m3 0h1m2 0h1m3 0h1m2 0h1m3 0h1m3 0h1m2 0h1m3 0h1m2 0h1m3 0h1m2 0h1m3 0h1m3 0h1m2 0h1m3 0h1m2 0h1m3 0h1m2 0h1m3 0h1m3 0h1m2 0h1m3 0h1m2 0h1m3 0h1m3 0h1m2 0h1m3 0h1m2 0h1m3 0h1m2 0h1m3 0h1m3 0h1m2 0h1m3 0h1m2 0h1m3 0h1m2 0h1m3 0h1m3 0h1m2 0h1m3 0h1m2 0h1m3 0h1m2 0h1m3 0h1m3 0h1m2 0h1m3 0h1m2 0h1m3 0h1m2 0h1m3 0h1m3 0h1m2 0h1m3 0h1m2 0h1m3 0h1m3 0h1m2 0h1m3 0h1m2 0h1m3 0h1m2 0h1m3 0h1m3 0h1m2 0h1m3 0h1m2 0h1m3 0h1m2 0h1m3 0h1m3 0h1m2 0h1m3 0h1m2 0h1m3 0h1m2 0h1m3 0h1m3 0h1m2 0h1m3 0h1m2 0h1m3 0h1m2 0h1m3 0h1m3 0h1m2 0h1m3 0h1m2 0h1m3 0h1m3 0h1m2 0h1m3 0h1m2 0h1m3 0h1m2 0h1m3 0h1m3 0h1m2 0h1m3 0h1m2 0h1m3 0h1m2 0h1m3 0h1m3 0h1m2 0h1m3 0h1m2 0h1m3 0h1m2 0h1m3 0h1m3 0h1m2 0h1m3 0h1m2 0h1m3 0h1m2 0h1m3 0h1m3 0h1m2 0h1m3 0h1m2 0h1m3 0h1m3 0h1m2 0h1m3 0h1m2 0h1m3 0h1M344 912.5h1m2 0h1m3 0h1m2 0h1m3 0h1m2 0h1m3 0h1m3 0h1m2 0h1m3 0h1m2 0h1m3 0h1m2 0h1m3 0h1m3 0h1m2 0h1m3 0h1m2 0h1m3 0h1m3 0h1m2 0h1m3 0h1m2 0h1m3 0h1m2 0h1m3 0h1m3 0h1m2 0h1m3 0h1m2 0h1m3 0h1m2 0h1m3 0h1m3 0h1m2 0h1m3 0h1m2 0h1m3 0h1m2 0h1m3 0h1m3 0h1m2 0h1m3 0h1m2 0h1m3 0h1m2 0h1m3 0h1m3 0h1m2 0h1m3 0h1m2 0h1m3 0h1m3 0h1m2 0h1m3 0h1m2 0h1m3 0h1m2 0h1m3 0h1m3 0h1m2 0h1m3 0h1m2 0h1m3 0h1m2 0h1m3 0h1m3 0h1m2 0h1m3 0h1m2 0h1m3 0h1m2 0h1m3 0h1m3 0h1m2 0h1m3 0h1m2 0h1m3 0h1m3 0h1m2 0h1m3 0h1m2 0h1m3 0h1m2 0h1m3 0h1m3 0h1m2 0h1m3 0h1m2 0h1m3 0h1m2 0h1m3 0h1m3 0h1m2 0h1m3 0h1m2 0h1m3 0h1m2 0h1m3 0h1m3 0h1m2 0h1m3 0h1m2 0h1m3 0h1m2 0h1m3 0h1m3 0h1m2 0h1m3 0h1m2 0h1m3 0h1m3 0h1m2 0h1m3 0h1m2 0h1m3 0h1m2 0h1m3 0h1m3 0h1m2 0h1m3 0h1m2 0h1m3 0h1m2 0h1m3 0h1m3 0h1m2 0h1m3 0h1m2 0h1m3 0h1m2 0h1m3 0h1m3 0h1m2 0h1m3 0h1m2 0h1m3 0h1m2 0h1m3 0h1m3 0h1m2 0h1m3 0h1m2 0h1m3 0h1m3 0h1m2 0h1m3 0h1m2 0h1m3 0h1m2 0h1m3 0h1m3 0h1m2 0h1m3 0h1m2 0h1m3 0h1m2 0h1m3 0h1m3 0h1m2 0h1m3 0h1m2 0h1m3 0h1m2 0h1m3 0h1m3 0h1m2 0h1m3 0h1m2 0h1m3 0h1m2 0h1m3 0h1m3 0h1m2 0h1m3 0h1m2 0h1m3 0h1m3 0h1m2 0h1m3 0h1m2 0h1m3 0h1m2 0h1m3 0h1m3 0h1m2 0h1m3 0h1m2 0h1m3 0h1m2 0h1m3 0h1m3 0h1m2 0h1m3 0h1m2 0h1m3 0h1m2 0h1m3 0h1m3 0h1m2 0h1m3 0h1m2 0h1m3 0h1m3 0h1m2 0h1m3 0h1m2 0h1m3 0h1m2 0h1m3 0h1m3 0h1m2 0h1m3 0h1m2 0h1m3 0h1m2 0h1m3 0h1m3 0h1m2 0h1m3 0h1m2 0h1m3 0h1m2 0h1m3 0h1m3 0h1m2 0h1m3 0h1m2 0h1m3 0h1m2 0h1m3 0h1m3 0h1m2 0h1m3 0h1m2 0h1m3 0h1m3 0h1m2 0h1m3 0h1m2 0h1m3 0h1m2 0h1m3 0h1m3 0h1m2 0h1m3 0h1m2 0h1m3 0h1m2 0h1m3 0h1m3 0h1m2 0h1m3 0h1m2 0h1m3 0h1m2 0h1m3 0h1m3 0h1m2 0h1m3 0h1m2 0h1m3 0h1m2 0h1m3 0h1m3 0h1m2 0h1m3 0h1m2 0h1m3 0h1m3 0h1m2 0h1m3 0h1m2 0h1m3 0h1m2 0h1m3 0h1m3 0h1m2 0h1m3 0h1m2 0h1m3 0h1m2 0h1m3 0h1m3 0h1m2 0h1m3 0h1m2 0h1m3 0h1m2 0h1m3 0h1m3 0h1m2 0h1m3 0h1m2 0h1m3 0h1m2 0h1m3 0h1m3 0h1m2 0h1m3 0h1m2 0h1m3 0h1m3 0h1m2 0h1m3 0h1m2 0h1m3 0h1m2 0h1m3 0h1m3 0h1m2 0h1m3 0h1m2 0h1m3 0h1m2 0h1m3 0h1m3 0h1m2 0h1m3 0h1m2 0h1m3 0h1m2 0h1m3 0h1m3 0h1m2 0h1m3 0h1m2 0h1m3 0h1m2 0h1m3 0h1m3 0h1m2 0h1m3 0h1m2 0h1m3 0h1m3 0h1m2 0h1m3 0h1m2 0h1m3 0h1M344 947.5h1m2 0h1m3 0h1m2 0h1m3 0h1m2 0h1m3 0h1m3 0h1m2 0h1m3 0h1m2 0h1m3 0h1m2 0h1m3 0h1m3 0h1m2 0h1m3 0h1m2 0h1m3 0h1m3 0h1m2 0h1m3 0h1m2 0h1m3 0h1m2 0h1m3 0h1m3 0h1m2 0h1m3 0h1m2 0h1m3 0h1m2 0h1m3 0h1m3 0h1m2 0h1m3 0h1m2 0h1m3 0h1m2 0h1m3 0h1m3 0h1m2 0h1m3 0h1m2 0h1m3 0h1m2 0h1m3 0h1m3 0h1m2 0h1m3 0h1m2 0h1m3 0h1m3 0h1m2 0h1m3 0h1m2 0h1m3 0h1m2 0h1m3 0h1m3 0h1m2 0h1m3 0h1m2 0h1m3 0h1m2 0h1m3 0h1m3 0h1m2 0h1m3 0h1m2 0h1m3 0h1m2 0h1m3 0h1m3 0h1m2 0h1m3 0h1m2 0h1m3 0h1m3 0h1m2 0h1m3 0h1m2 0h1m3 0h1m2 0h1m3 0h1m3 0h1m2 0h1m3 0h1m2 0h1m3 0h1m2 0h1m3 0h1m3 0h1m2 0h1m3 0h1m2 0h1m3 0h1m2 0h1m3 0h1m3 0h1m2 0h1m3 0h1m2 0h1m3 0h1m2 0h1m3 0h1m3 0h1m2 0h1m3 0h1m2 0h1m3 0h1m3 0h1m2 0h1m3 0h1m2 0h1m3 0h1m2 0h1m3 0h1m3 0h1m2 0h1m3 0h1m2 0h1m3 0h1m2 0h1m3 0h1m3 0h1m2 0h1m3 0h1m2 0h1m3 0h1m2 0h1m3 0h1m3 0h1m2 0h1m3 0h1m2 0h1m3 0h1m2 0h1m3 0h1m3 0h1m2 0h1m3 0h1m2 0h1m3 0h1m3 0h1m2 0h1m3 0h1m2 0h1m3 0h1m2 0h1m3 0h1m3 0h1m2 0h1m3 0h1m2 0h1m3 0h1m2 0h1m3 0h1m3 0h1m2 0h1m3 0h1m2 0h1m3 0h1m2 0h1m3 0h1m3 0h1m2 0h1m3 0h1m2 0h1m3 0h1m2 0h1m3 0h1m3 0h1m2 0h1m3 0h1m2 0h1m3 0h1m3 0h1m2 0h1m3 0h1m2 0h1m3 0h1m2 0h1m3 0h1m3 0h1m2 0h1m3 0h1m2 0h1m3 0h1m2 0h1m3 0h1m3 0h1m2 0h1m3 0h1m2 0h1m3 0h1m2 0h1m3 0h1m3 0h1m2 0h1m3 0h1m2 0h1m3 0h1m3 0h1m2 0h1m3 0h1m2 0h1m3 0h1m2 0h1m3 0h1m3 0h1m2 0h1m3 0h1m2 0h1m3 0h1m2 0h1m3 0h1m3 0h1m2 0h1m3 0h1m2 0h1m3 0h1m2 0h1m3 0h1m3 0h1m2 0h1m3 0h1m2 0h1m3 0h1m2 0h1m3 0h1m3 0h1m2 0h1m3 0h1m2 0h1m3 0h1m3 0h1m2 0h1m3 0h1m2 0h1m3 0h1m2 0h1m3 0h1m3 0h1m2 0h1m3 0h1m2 0h1m3 0h1m2 0h1m3 0h1m3 0h1m2 0h1m3 0h1m2 0h1m3 0h1m2 0h1m3 0h1m3 0h1m2 0h1m3 0h1m2 0h1m3 0h1m2 0h1m3 0h1m3 0h1m2 0h1m3 0h1m2 0h1m3 0h1m3 0h1m2 0h1m3 0h1m2 0h1m3 0h1m2 0h1m3 0h1m3 0h1m2 0h1m3 0h1m2 0h1m3 0h1m2 0h1m3 0h1m3 0h1m2 0h1m3 0h1m2 0h1m3 0h1m2 0h1m3 0h1m3 0h1m2 0h1m3 0h1m2 0h1m3 0h1m2 0h1m3 0h1m3 0h1m2 0h1m3 0h1m2 0h1m3 0h1m3 0h1m2 0h1m3 0h1m2 0h1m3 0h1m2 0h1m3 0h1m3 0h1m2 0h1m3 0h1m2 0h1m3 0h1m2 0h1m3 0h1m3 0h1m2 0h1m3 0h1m2 0h1m3 0h1m2 0h1m3 0h1m3 0h1m2 0h1m3 0h1m2 0h1m3 0h1m2 0h1m3 0h1m3 0h1m2 0h1m3 0h1m2 0h1m3 0h1m3 0h1m2 0h1m3 0h1m2 0h1m3 0h1M344 983.5h1m2 0h1m3 0h1m2 0h1m3 0h1m2 0h1m3 0h1m3 0h1m2 0h1m3 0h1m2 0h1m3 0h1m2 0h1m3 0h1m3 0h1m2 0h1m3 0h1m2 0h1m3 0h1m3 0h1m2 0h1m3 0h1m2 0h1m3 0h1m2 0h1m3 0h1m3 0h1m2 0h1m3 0h1m2 0h1m3 0h1m2 0h1m3 0h1m3 0h1m2 0h1m3 0h1m2 0h1m3 0h1m2 0h1m3 0h1m3 0h1m2 0h1m3 0h1m2 0h1m3 0h1m2 0h1m3 0h1m3 0h1m2 0h1m3 0h1m2 0h1m3 0h1m3 0h1m2 0h1m3 0h1m2 0h1m3 0h1m2 0h1m3 0h1m3 0h1m2 0h1m3 0h1m2 0h1m3 0h1m2 0h1m3 0h1m3 0h1m2 0h1m3 0h1m2 0h1m3 0h1m2 0h1m3 0h1m3 0h1m2 0h1m3 0h1m2 0h1m3 0h1m3 0h1m2 0h1m3 0h1m2 0h1m3 0h1m2 0h1m3 0h1m3 0h1m2 0h1m3 0h1m2 0h1m3 0h1m2 0h1m3 0h1m3 0h1m2 0h1m3 0h1m2 0h1m3 0h1m2 0h1m3 0h1m3 0h1m2 0h1m3 0h1m2 0h1m3 0h1m2 0h1m3 0h1m3 0h1m2 0h1m3 0h1m2 0h1m3 0h1m3 0h1m2 0h1m3 0h1m2 0h1m3 0h1m2 0h1m3 0h1m3 0h1m2 0h1m3 0h1m2 0h1m3 0h1m2 0h1m3 0h1m3 0h1m2 0h1m3 0h1m2 0h1m3 0h1m2 0h1m3 0h1m3 0h1m2 0h1m3 0h1m2 0h1m3 0h1m2 0h1m3 0h1m3 0h1m2 0h1m3 0h1m2 0h1m3 0h1m3 0h1m2 0h1m3 0h1m2 0h1m3 0h1m2 0h1m3 0h1m3 0h1m2 0h1m3 0h1m2 0h1m3 0h1m2 0h1m3 0h1m3 0h1m2 0h1m3 0h1m2 0h1m3 0h1m2 0h1m3 0h1m3 0h1m2 0h1m3 0h1m2 0h1m3 0h1m2 0h1m3 0h1m3 0h1m2 0h1m3 0h1m2 0h1m3 0h1m3 0h1m2 0h1m3 0h1m2 0h1m3 0h1m2 0h1m3 0h1m3 0h1m2 0h1m3 0h1m2 0h1m3 0h1m2 0h1m3 0h1m3 0h1m2 0h1m3 0h1m2 0h1m3 0h1m2 0h1m3 0h1m3 0h1m2 0h1m3 0h1m2 0h1m3 0h1m3 0h1m2 0h1m3 0h1m2 0h1m3 0h1m2 0h1m3 0h1m3 0h1m2 0h1m3 0h1m2 0h1m3 0h1m2 0h1m3 0h1m3 0h1m2 0h1m3 0h1m2 0h1m3 0h1m2 0h1m3 0h1m3 0h1m2 0h1m3 0h1m2 0h1m3 0h1m2 0h1m3 0h1m3 0h1m2 0h1m3 0h1m2 0h1m3 0h1m3 0h1m2 0h1m3 0h1m2 0h1m3 0h1m2 0h1m3 0h1m3 0h1m2 0h1m3 0h1m2 0h1m3 0h1m2 0h1m3 0h1m3 0h1m2 0h1m3 0h1m2 0h1m3 0h1m2 0h1m3 0h1m3 0h1m2 0h1m3 0h1m2 0h1m3 0h1m2 0h1m3 0h1m3 0h1m2 0h1m3 0h1m2 0h1m3 0h1m3 0h1m2 0h1m3 0h1m2 0h1m3 0h1m2 0h1m3 0h1m3 0h1m2 0h1m3 0h1m2 0h1m3 0h1m2 0h1m3 0h1m3 0h1m2 0h1m3 0h1m2 0h1m3 0h1m2 0h1m3 0h1m3 0h1m2 0h1m3 0h1m2 0h1m3 0h1m2 0h1m3 0h1m3 0h1m2 0h1m3 0h1m2 0h1m3 0h1m3 0h1m2 0h1m3 0h1m2 0h1m3 0h1m2 0h1m3 0h1m3 0h1m2 0h1m3 0h1m2 0h1m3 0h1m2 0h1m3 0h1m3 0h1m2 0h1m3 0h1m2 0h1m3 0h1m2 0h1m3 0h1m3 0h1m2 0h1m3 0h1m2 0h1m3 0h1m2 0h1m3 0h1m3 0h1m2 0h1m3 0h1m2 0h1m3 0h1m3 0h1m2 0h1m3 0h1m2 0h1m3 0h1M354.5 114v1m0 3v1m0 2v1m0 3v1m0 2v1m0 3v1m0 3v1m0 2v1m0 3v1m0 2v1m0 3v1m0 2v1m0 3v1m0 3v1m0 2v1m0 3v1m0 2v1m0 3v1m0 2v1m0 3v1m0 3v1m0 2v1m0 3v1m0 2v1m0 3v1m0 2v1m0 3v1m0 3v1m0 2v1m0 3v1m0 2v1m0 3v1m0 3v1m0 2v1m0 3v1m0 2v1m0 3v1m0 2v1m0 3v1m0 3v1m0 2v1m0 3v1m0 2v1m0 3v1m0 2v1m0 3v1m0 3v1m0 2v1m0 3v1m0 2v1m0 3v1m0 2v1m0 3v1m0 3v1m0 2v1m0 3v1m0 2v1m0 3v1m0 2v1m0 3v1m0 3v1m0 2v1m0 3v1m0 2v1m0 3v1m0 3v1m0 2v1m0 3v1m0 2v1m0 3v1m0 2v1m0 3v1m0 3v1m0 2v1m0 3v1m0 2v1m0 3v1m0 2v1m0 3v1m0 3v1m0 2v1m0 3v1m0 2v1m0 3v1m0 2v1m0 3v1m0 3v1m0 2v1m0 3v1m0 2v1m0 3v1m0 2v1m0 3v1m0 3v1m0 2v1m0 3v1m0 2v1m0 3v1m0 3v1m0 2v1m0 3v1m0 2v1m0 3v1m0 2v1m0 3v1m0 3v1m0 2v1m0 3v1m0 2v1m0 3v1m0 2v1m0 3v1m0 3v1m0 2v1m0 3v1m0 2v1m0 3v1m0 2v1m0 3v1m0 3v1m0 2v1m0 3v1m0 2v1m0 3v1m0 2v1m0 3v1m0 3v1m0 2v1m0 3v1m0 2v1m0 3v1m0 3v1m0 2v1m0 3v1m0 2v1m0 3v1m0 2v1m0 3v1m0 3v1m0 2v1m0 3v1m0 2v1m0 3v1m0 2v1m0 3v1m0 3v1m0 2v1m0 3v1m0 2v1m0 3v1m0 2v1m0 3v1m0 3v1m0 2v1m0 3v1m0 2v1m0 3v1m0 3v1m0 2v1m0 3v1m0 2v1m0 3v1m0 2v1m0 3v1m0 3v1m0 2v1m0 3v1m0 2v1m0 3v1m0 2v1m0 3v1m0 3v1m0 2v1m0 3v1m0 2v1m0 3v1m0 2v1m0 3v1m0 3v1m0 2v1m0 3v1m0 2v1m0 3v1m0 2v1m0 3v1m0 3v1m0 2v1m0 3v1m0 2v1m0 3v1m0 3v1m0 2v1m0 3v1m0 2v1m0 3v1m0 2v1m0 3v1m0 3v1m0 2v1m0 3v1m0 2v1m0 3v1m0 2v1m0 3v1m0 3v1m0 2v1m0 3v1m0 2v1m0 3v1m0 2v1m0 3v1m0 3v1m0 2v1m0 3v1m0 2v1m0 3v1m0 2v1m0 3v1m0 3v1m0 2v1m0 3v1m0 2v1m0 3v1m0 3v1m0 2v1m0 3v1m0 2v1m0 3v1m0 2v1m0 3v1m0 3v1m0 2v1m0 3v1m0 2v1m0 3v1m0 2v1m0 3v1m0 3v1m0 2v1m0 3v1m0 2v1m0 3v1m0 2v1m0 3v1m0 3v1m0 2v1m0 3v1m0 2v1m0 3v1M390.5 114v1m0 3v1m0 2v1m0 3v1m0 2v1m0 3v1m0 3v1m0 2v1m0 3v1m0 2v1m0 3v1m0 2v1m0 3v1m0 3v1m0 2v1m0 3v1m0 2v1m0 3v1m0 2v1m0 3v1m0 3v1m0 2v1m0 3v1m0 2v1m0 3v1m0 2v1m0 3v1m0 3v1m0 2v1m0 3v1m0 2v1m0 3v1m0 3v1m0 2v1m0 3v1m0 2v1m0 3v1m0 2v1m0 3v1m0 3v1m0 2v1m0 3v1m0 2v1m0 3v1m0 2v1m0 3v1m0 3v1m0 2v1m0 3v1m0 2v1m0 3v1m0 2v1m0 3v1m0 3v1m0 2v1m0 3v1m0 2v1m0 3v1m0 2v1m0 3v1m0 3v1m0 2v1m0 3v1m0 2v1m0 3v1m0 3v1m0 2v1m0 3v1m0 2v1m0 3v1m0 2v1m0 3v1m0 3v1m0 2v1m0 3v1m0 2v1m0 3v1m0 2v1m0 3v1m0 3v1m0 2v1m0 3v1m0 2v1m0 3v1m0 2v1m0 3v1m0 3v1m0 2v1m0 3v1m0 2v1m0 3v1m0 2v1m0 3v1m0 3v1m0 2v1m0 3v1m0 2v1m0 3v1m0 3v1m0 2v1m0 3v1m0 2v1m0 3v1m0 2v1m0 3v1m0 3v1m0 2v1m0 3v1m0 2v1m0 3v1m0 2v1m0 3v1m0 3v1m0 2v1m0 3v1m0 2v1m0 3v1m0 2v1m0 3v1m0 3v1m0 2v1m0 3v1m0 2v1m0 3v1m0 2v1m0 3v1m0 3v1m0 2v1m0 3v1m0 2v1m0 3v1m0 3v1m0 2v1m0 3v1m0 2v1m0 3v1m0 2v1m0 3v1m0 3v1m0 2v1m0 3v1m0 2v1m0 3v1m0 2v1m0 3v1m0 3v1m0 2v1m0 3v1m0 2v1m0 3v1m0 2v1m0 3v1m0 3v1m0 2v1m0 3v1m0 2v1m0 3v1m0 3v1m0 2v1m0 3v1m0 2v1m0 3v1m0 2v1m0 3v1m0 3v1m0 2v1m0 3v1m0 2v1m0 3v1m0 2v1m0 3v1m0 3v1m0 2v1m0 3v1m0 2v1m0 3v1m0 2v1m0 3v1m0 3v1m0 2v1m0 3v1m0 2v1m0 3v1m0 2v1m0 3v1m0 3v1m0 2v1m0 3v1m0 2v1m0 3v1m0 3v1m0 2v1m0 3v1m0 2v1m0 3v1m0 2v1m0 3v1m0 3v1m0 2v1m0 3v1m0 2v1m0 3v1m0 2v1m0 3v1m0 3v1m0 2v1m0 3v1m0 2v1m0 3v1m0 2v1m0 3v1m0 3v1m0 2v1m0 3v1m0 2v1m0 3v1m0 2v1m0 3v1m0 3v1m0 2v1m0 3v1m0 2v1m0 3v1m0 3v1m0 2v1m0 3v1m0 2v1m0 3v1m0 2v1m0 3v1m0 3v1m0 2v1m0 3v1m0 2v1m0 3v1m0 2v1m0 3v1m0 3v1m0 2v1m0 3v1m0 2v1m0 3v1m0 2v1m0 3v1m0 3v1m0 2v1m0 3v1m0 2v1m0 3v1M426.5 114v1m0 3v1m0 2v1m0 3v1m0 2v1m0 3v1m0 3v1m0 2v1m0 3v1m0 2v1m0 3v1m0 2v1m0 3v1m0 3v1m0 2v1m0 3v1m0 2v1m0 3v1m0 2v1m0 3v1m0 3v1m0 2v1m0 3v1m0 2v1m0 3v1m0 2v1m0 3v1m0 3v1m0 2v1m0 3v1m0 2v1m0 3v1m0 3v1m0 2v1m0 3v1m0 2v1m0 3v1m0 2v1m0 3v1m0 3v1m0 2v1m0 3v1m0 2v1m0 3v1m0 2v1m0 3v1m0 3v1m0 2v1m0 3v1m0 2v1m0 3v1m0 2v1m0 3v1m0 3v1m0 2v1m0 3v1m0 2v1m0 3v1m0 2v1m0 3v1m0 3v1m0 2v1m0 3v1m0 2v1m0 3v1m0 3v1m0 2v1m0 3v1m0 2v1m0 3v1m0 2v1m0 3v1m0 3v1m0 2v1m0 3v1m0 2v1m0 3v1m0 2v1m0 3v1m0 3v1m0 2v1m0 3v1m0 2v1m0 3v1m0 2v1m0 3v1m0 3v1m0 2v1m0 3v1m0 2v1m0 3v1m0 2v1m0 3v1m0 3v1m0 2v1m0 3v1m0 2v1m0 3v1m0 3v1m0 2v1m0 3v1m0 2v1m0 3v1m0 2v1m0 3v1m0 3v1m0 2v1m0 3v1m0 2v1m0 3v1m0 2v1m0 3v1m0 3v1m0 2v1m0 3v1m0 2v1m0 3v1m0 2v1m0 3v1m0 3v1m0 2v1m0 3v1m0 2v1m0 3v1m0 2v1m0 3v1m0 3v1m0 2v1m0 3v1m0 2v1m0 3v1m0 3v1m0 2v1m0 3v1m0 2v1m0 3v1m0 2v1m0 3v1m0 3v1m0 2v1m0 3v1m0 2v1m0 3v1m0 2v1m0 3v1m0 3v1m0 2v1m0 3v1m0 2v1m0 3v1m0 2v1m0 3v1m0 3v1m0 2v1m0 3v1m0 2v1m0 3v1m0 3v1m0 2v1m0 3v1m0 2v1m0 3v1m0 2v1m0 3v1m0 3v1m0 2v1m0 3v1m0 2v1m0 3v1m0 2v1m0 3v1m0 3v1m0 2v1m0 3v1m0 2v1m0 3v1m0 2v1m0 3v1m0 3v1m0 2v1m0 3v1m0 2v1m0 3v1m0 2v1m0 3v1m0 3v1m0 2v1m0 3v1m0 2v1m0 3v1m0 3v1m0 2v1m0 3v1m0 2v1m0 3v1m0 2v1m0 3v1m0 3v1m0 2v1m0 3v1m0 2v1m0 3v1m0 2v1m0 3v1m0 3v1m0 2v1m0 3v1m0 2v1m0 3v1m0 2v1m0 3v1m0 3v1m0 2v1m0 3v1m0 2v1m0 3v1m0 2v1m0 3v1m0 3v1m0 2v1m0 3v1m0 2v1m0 3v1m0 3v1m0 2v1m0 3v1m0 2v1m0 3v1m0 2v1m0 3v1m0 3v1m0 2v1m0 3v1m0 2v1m0 3v1m0 2v1m0 3v1m0 3v1m0 2v1m0 3v1m0 2v1m0 3v1m0 2v1m0 3v1m0 3v1m0 2v1m0 3v1m0 2v1m0 3v1M462.5 114v1m0 3v1m0 2v1m0 3v1m0 2v1m0 3v1m0 3v1m0 2v1m0 3v1m0 2v1m0 3v1m0 2v1m0 3v1m0 3v1m0 2v1m0 3v1m0 2v1m0 3v1m0 2v1m0 3v1m0 3v1m0 2v1m0 3v1m0 2v1m0 3v1m0 2v1m0 3v1m0 3v1m0 2v1m0 3v1m0 2v1m0 3v1m0 3v1m0 2v1m0 3v1m0 2v1m0 3v1m0 2v1m0 3v1m0 3v1m0 2v1m0 3v1m0 2v1m0 3v1m0 2v1m0 3v1m0 3v1m0 2v1m0 3v1m0 2v1m0 3v1m0 2v1m0 3v1m0 3v1m0 2v1m0 3v1m0 2v1m0 3v1m0 2v1m0 3v1m0 3v1m0 2v1m0 3v1m0 2v1m0 3v1m0 3v1m0 2v1m0 3v1m0 2v1m0 3v1m0 2v1m0 3v1m0 3v1m0 2v1m0 3v1m0 2v1m0 3v1m0 2v1m0 3v1m0 3v1m0 2v1m0 3v1m0 2v1m0 3v1m0 2v1m0 3v1m0 3v1m0 2v1m0 3v1m0 2v1m0 3v1m0 2v1m0 3v1m0 3v1m0 2v1m0 3v1m0 2v1m0 3v1m0 3v1m0 2v1m0 3v1m0 2v1m0 3v1m0 2v1m0 3v1m0 3v1m0 2v1m0 3v1m0 2v1m0 3v1m0 2v1m0 3v1m0 3v1m0 2v1m0 3v1m0 2v1m0 3v1m0 2v1m0 3v1m0 3v1m0 2v1m0 3v1m0 2v1m0 3v1m0 2v1m0 3v1m0 3v1m0 2v1m0 3v1m0 2v1m0 3v1m0 3v1m0 2v1m0 3v1m0 2v1m0 3v1m0 2v1m0 3v1m0 3v1m0 2v1m0 3v1m0 2v1m0 3v1m0 2v1m0 3v1m0 3v1m0 2v1m0 3v1m0 2v1m0 3v1m0 2v1m0 3v1m0 3v1m0 2v1m0 3v1m0 2v1m0 3v1m0 3v1m0 2v1m0 3v1m0 2v1m0 3v1m0 2v1m0 3v1m0 3v1m0 2v1m0 3v1m0 2v1m0 3v1m0 2v1m0 3v1m0 3v1m0 2v1m0 3v1m0 2v1m0 3v1m0 2v1m0 3v1m0 3v1m0 2v1m0 3v1m0 2v1m0 3v1m0 2v1m0 3v1m0 3v1m0 2v1m0 3v1m0 2v1m0 3v1m0 3v1m0 2v1m0 3v1m0 2v1m0 3v1m0 2v1m0 3v1m0 3v1m0 2v1m0 3v1m0 2v1m0 3v1m0 2v1m0 3v1m0 3v1m0 2v1m0 3v1m0 2v1m0 3v1m0 2v1m0 3v1m0 3v1m0 2v1m0 3v1m0 2v1m0 3v1m0 2v1m0 3v1m0 3v1m0 2v1m0 3v1m0 2v1m0 3v1m0 3v1m0 2v1m0 3v1m0 2v1m0 3v1m0 2v1m0 3v1m0 3v1m0 2v1m0 3v1m0 2v1m0 3v1m0 2v1m0 3v1m0 3v1m0 2v1m0 3v1m0 2v1m0 3v1m0 2v1m0 3v1m0 3v1m0 2v1m0 3v1m0 2v1m0 3v1M497.5 114v1m0 3v1m0 2v1m0 3v1m0 2v1m0 3v1m0 3v1m0 2v1m0 3v1m0 2v1m0 3v1m0 2v1m0 3v1m0 3v1m0 2v1m0 3v1m0 2v1m0 3v1m0 2v1m0 3v1m0 3v1m0 2v1m0 3v1m0 2v1m0 3v1m0 2v1m0 3v1m0 3v1m0 2v1m0 3v1m0 2v1m0 3v1m0 3v1m0 2v1m0 3v1m0 2v1m0 3v1m0 2v1m0 3v1m0 3v1m0 2v1m0 3v1m0 2v1m0 3v1m0 2v1m0 3v1m0 3v1m0 2v1m0 3v1m0 2v1m0 3v1m0 2v1m0 3v1m0 3v1m0 2v1m0 3v1m0 2v1m0 3v1m0 2v1m0 3v1m0 3v1m0 2v1m0 3v1m0 2v1m0 3v1m0 3v1m0 2v1m0 3v1m0 2v1m0 3v1m0 2v1m0 3v1m0 3v1m0 2v1m0 3v1m0 2v1m0 3v1m0 2v1m0 3v1m0 3v1m0 2v1m0 3v1m0 2v1m0 3v1m0 2v1m0 3v1m0 3v1m0 2v1m0 3v1m0 2v1m0 3v1m0 2v1m0 3v1m0 3v1m0 2v1m0 3v1m0 2v1m0 3v1m0 3v1m0 2v1m0 3v1m0 2v1m0 3v1m0 2v1m0 3v1m0 3v1m0 2v1m0 3v1m0 2v1m0 3v1m0 2v1m0 3v1m0 3v1m0 2v1m0 3v1m0 2v1m0 3v1m0 2v1m0 3v1m0 3v1m0 2v1m0 3v1m0 2v1m0 3v1m0 2v1m0 3v1m0 3v1m0 2v1m0 3v1m0 2v1m0 3v1m0 3v1m0 2v1m0 3v1m0 2v1m0 3v1m0 2v1m0 3v1m0 3v1m0 2v1m0 3v1m0 2v1m0 3v1m0 2v1m0 3v1m0 3v1m0 2v1m0 3v1m0 2v1m0 3v1m0 2v1m0 3v1m0 3v1m0 2v1m0 3v1m0 2v1m0 3v1m0 3v1m0 2v1m0 3v1m0 2v1m0 3v1m0 2v1m0 3v1m0 3v1m0 2v1m0 3v1m0 2v1m0 3v1m0 2v1m0 3v1m0 3v1m0 2v1m0 3v1m0 2v1m0 3v1m0 2v1m0 3v1m0 3v1m0 2v1m0 3v1m0 2v1m0 3v1m0 2v1m0 3v1m0 3v1m0 2v1m0 3v1m0 2v1m0 3v1m0 3v1m0 2v1m0 3v1m0 2v1m0 3v1m0 2v1m0 3v1m0 3v1m0 2v1m0 3v1m0 2v1m0 3v1m0 2v1m0 3v1m0 3v1m0 2v1m0 3v1m0 2v1m0 3v1m0 2v1m0 3v1m0 3v1m0 2v1m0 3v1m0 2v1m0 3v1m0 2v1m0 3v1m0 3v1m0 2v1m0 3v1m0 2v1m0 3v1m0 3v1m0 2v1m0 3v1m0 2v1m0 3v1m0 2v1m0 3v1m0 3v1m0 2v1m0 3v1m0 2v1m0 3v1m0 2v1m0 3v1m0 3v1m0 2v1m0 3v1m0 2v1m0 3v1m0 2v1m0 3v1m0 3v1m0 2v1m0 3v1m0 2v1m0 3v1M533.5 114v1m0 3v1m0 2v1m0 3v1m0 2v1m0 3v1m0 3v1m0 2v1m0 3v1m0 2v1m0 3v1m0 2v1m0 3v1m0 3v1m0 2v1m0 3v1m0 2v1m0 3v1m0 2v1m0 3v1m0 3v1m0 2v1m0 3v1m0 2v1m0 3v1m0 2v1m0 3v1m0 3v1m0 2v1m0 3v1m0 2v1m0 3v1m0 3v1m0 2v1m0 3v1m0 2v1m0 3v1m0 2v1m0 3v1m0 3v1m0 2v1m0 3v1m0 2v1m0 3v1m0 2v1m0 3v1m0 3v1m0 2v1m0 3v1m0 2v1m0 3v1m0 2v1m0 3v1m0 3v1m0 2v1m0 3v1m0 2v1m0 3v1m0 2v1m0 3v1m0 3v1m0 2v1m0 3v1m0 2v1m0 3v1m0 3v1m0 2v1m0 3v1m0 2v1m0 3v1m0 2v1m0 3v1m0 3v1m0 2v1m0 3v1m0 2v1m0 3v1m0 2v1m0 3v1m0 3v1m0 2v1m0 3v1m0 2v1m0 3v1m0 2v1m0 3v1m0 3v1m0 2v1m0 3v1m0 2v1m0 3v1m0 2v1m0 3v1m0 3v1m0 2v1m0 3v1m0 2v1m0 3v1m0 3v1m0 2v1m0 3v1m0 2v1m0 3v1m0 2v1m0 3v1m0 3v1m0 2v1m0 3v1m0 2v1m0 3v1m0 2v1m0 3v1m0 3v1m0 2v1m0 3v1m0 2v1m0 3v1m0 2v1m0 3v1m0 3v1m0 2v1m0 3v1m0 2v1m0 3v1m0 2v1m0 3v1m0 3v1m0 2v1m0 3v1m0 2v1m0 3v1m0 3v1m0 2v1m0 3v1m0 2v1m0 3v1m0 2v1m0 3v1m0 3v1m0 2v1m0 3v1m0 2v1m0 3v1m0 2v1m0 3v1m0 3v1m0 2v1m0 3v1m0 2v1m0 3v1m0 2v1m0 3v1m0 3v1m0 2v1m0 3v1m0 2v1m0 3v1m0 3v1m0 2v1m0 3v1m0 2v1m0 3v1m0 2v1m0 3v1m0 3v1m0 2v1m0 3v1m0 2v1m0 3v1m0 2v1m0 3v1m0 3v1m0 2v1m0 3v1m0 2v1m0 3v1m0 2v1m0 3v1m0 3v1m0 2v1m0 3v1m0 2v1m0 3v1m0 2v1m0 3v1m0 3v1m0 2v1m0 3v1m0 2v1m0 3v1m0 3v1m0 2v1m0 3v1m0 2v1m0 3v1m0 2v1m0 3v1m0 3v1m0 2v1m0 3v1m0 2v1m0 3v1m0 2v1m0 3v1m0 3v1m0 2v1m0 3v1m0 2v1m0 3v1m0 2v1m0 3v1m0 3v1m0 2v1m0 3v1m0 2v1m0 3v1m0 2v1m0 3v1m0 3v1m0 2v1m0 3v1m0 2v1m0 3v1m0 3v1m0 2v1m0 3v1m0 2v1m0 3v1m0 2v1m0 3v1m0 3v1m0 2v1m0 3v1m0 2v1m0 3v1m0 2v1m0 3v1m0 3v1m0 2v1m0 3v1m0 2v1m0 3v1m0 2v1m0 3v1m0 3v1m0 2v1m0 3v1m0 2v1m0 3v1M569.5 114v1m0 3v1m0 2v1m0 3v1m0 2v1m0 3v1m0 3v1m0 2v1m0 3v1m0 2v1m0 3v1m0 2v1m0 3v1m0 3v1m0 2v1m0 3v1m0 2v1m0 3v1m0 2v1m0 3v1m0 3v1m0 2v1m0 3v1m0 2v1m0 3v1m0 2v1m0 3v1m0 3v1m0 2v1m0 3v1m0 2v1m0 3v1m0 3v1m0 2v1m0 3v1m0 2v1m0 3v1m0 2v1m0 3v1m0 3v1m0 2v1m0 3v1m0 2v1m0 3v1m0 2v1m0 3v1m0 3v1m0 2v1m0 3v1m0 2v1m0 3v1m0 2v1m0 3v1m0 3v1m0 2v1m0 3v1m0 2v1m0 3v1m0 2v1m0 3v1m0 3v1m0 2v1m0 3v1m0 2v1m0 3v1m0 3v1m0 2v1m0 3v1m0 2v1m0 3v1m0 2v1m0 3v1m0 3v1m0 2v1m0 3v1m0 2v1m0 3v1m0 2v1m0 3v1m0 3v1m0 2v1m0 3v1m0 2v1m0 3v1m0 2v1m0 3v1m0 3v1m0 2v1m0 3v1m0 2v1m0 3v1m0 2v1m0 3v1m0 3v1m0 2v1m0 3v1m0 2v1m0 3v1m0 3v1m0 2v1m0 3v1m0 2v1m0 3v1m0 2v1m0 3v1m0 3v1m0 2v1m0 3v1m0 2v1m0 3v1m0 2v1m0 3v1m0 3v1m0 2v1m0 3v1m0 2v1m0 3v1m0 2v1m0 3v1m0 3v1m0 2v1m0 3v1m0 2v1m0 3v1m0 2v1m0 3v1m0 3v1m0 2v1m0 3v1m0 2v1m0 3v1m0 3v1m0 2v1m0 3v1m0 2v1m0 3v1m0 2v1m0 3v1m0 3v1m0 2v1m0 3v1m0 2v1m0 3v1m0 2v1m0 3v1m0 3v1m0 2v1m0 3v1m0 2v1m0 3v1m0 2v1m0 3v1m0 3v1m0 2v1m0 3v1m0 2v1m0 3v1m0 3v1m0 2v1m0 3v1m0 2v1m0 3v1m0 2v1m0 3v1m0 3v1m0 2v1m0 3v1m0 2v1m0 3v1m0 2v1m0 3v1m0 3v1m0 2v1m0 3v1m0 2v1m0 3v1m0 2v1m0 3v1m0 3v1m0 2v1m0 3v1m0 2v1m0 3v1m0 2v1m0 3v1m0 3v1m0 2v1m0 3v1m0 2v1m0 3v1m0 3v1m0 2v1m0 3v1m0 2v1m0 3v1m0 2v1m0 3v1m0 3v1m0 2v1m0 3v1m0 2v1m0 3v1m0 2v1m0 3v1m0 3v1m0 2v1m0 3v1m0 2v1m0 3v1m0 2v1m0 3v1m0 3v1m0 2v1m0 3v1m0 2v1m0 3v1m0 2v1m0 3v1m0 3v1m0 2v1m0 3v1m0 2v1m0 3v1m0 3v1m0 2v1m0 3v1m0 2v1m0 3v1m0 2v1m0 3v1m0 3v1m0 2v1m0 3v1m0 2v1m0 3v1m0 2v1m0 3v1m0 3v1m0 2v1m0 3v1m0 2v1m0 3v1m0 2v1m0 3v1m0 3v1m0 2v1m0 3v1m0 2v1m0 3v1M605.5 114v1m0 3v1m0 2v1m0 3v1m0 2v1m0 3v1m0 3v1m0 2v1m0 3v1m0 2v1m0 3v1m0 2v1m0 3v1m0 3v1m0 2v1m0 3v1m0 2v1m0 3v1m0 2v1m0 3v1m0 3v1m0 2v1m0 3v1m0 2v1m0 3v1m0 2v1m0 3v1m0 3v1m0 2v1m0 3v1m0 2v1m0 3v1m0 3v1m0 2v1m0 3v1m0 2v1m0 3v1m0 2v1m0 3v1m0 3v1m0 2v1m0 3v1m0 2v1m0 3v1m0 2v1m0 3v1m0 3v1m0 2v1m0 3v1m0 2v1m0 3v1m0 2v1m0 3v1m0 3v1m0 2v1m0 3v1m0 2v1m0 3v1m0 2v1m0 3v1m0 3v1m0 2v1m0 3v1m0 2v1m0 3v1m0 3v1m0 2v1m0 3v1m0 2v1m0 3v1m0 2v1m0 3v1m0 3v1m0 2v1m0 3v1m0 2v1m0 3v1m0 2v1m0 3v1m0 3v1m0 2v1m0 3v1m0 2v1m0 3v1m0 2v1m0 3v1m0 3v1m0 2v1m0 3v1m0 2v1m0 3v1m0 2v1m0 3v1m0 3v1m0 2v1m0 3v1m0 2v1m0 3v1m0 3v1m0 2v1m0 3v1m0 2v1m0 3v1m0 2v1m0 3v1m0 3v1m0 2v1m0 3v1m0 2v1m0 3v1m0 2v1m0 3v1m0 3v1m0 2v1m0 3v1m0 2v1m0 3v1m0 2v1m0 3v1m0 3v1m0 2v1m0 3v1m0 2v1m0 3v1m0 2v1m0 3v1m0 3v1m0 2v1m0 3v1m0 2v1m0 3v1m0 3v1m0 2v1m0 3v1m0 2v1m0 3v1m0 2v1m0 3v1m0 3v1m0 2v1m0 3v1m0 2v1m0 3v1m0 2v1m0 3v1m0 3v1m0 2v1m0 3v1m0 2v1m0 3v1m0 2v1m0 3v1m0 3v1m0 2v1m0 3v1m0 2v1m0 3v1m0 3v1m0 2v1m0 3v1m0 2v1m0 3v1m0 2v1m0 3v1m0 3v1m0 2v1m0 3v1m0 2v1m0 3v1m0 2v1m0 3v1m0 3v1m0 2v1m0 3v1m0 2v1m0 3v1m0 2v1m0 3v1m0 3v1m0 2v1m0 3v1m0 2v1m0 3v1m0 2v1m0 3v1m0 3v1m0 2v1m0 3v1m0 2v1m0 3v1m0 3v1m0 2v1m0 3v1m0 2v1m0 3v1m0 2v1m0 3v1m0 3v1m0 2v1m0 3v1m0 2v1m0 3v1m0 2v1m0 3v1m0 3v1m0 2v1m0 3v1m0 2v1m0 3v1m0 2v1m0 3v1m0 3v1m0 2v1m0 3v1m0 2v1m0 3v1m0 2v1m0 3v1m0 3v1m0 2v1m0 3v1m0 2v1m0 3v1m0 3v1m0 2v1m0 3v1m0 2v1m0 3v1m0 2v1m0 3v1m0 3v1m0 2v1m0 3v1m0 2v1m0 3v1m0 2v1m0 3v1m0 3v1m0 2v1m0 3v1m0 2v1m0 3v1m0 2v1m0 3v1m0 3v1m0 2v1m0 3v1m0 2v1m0 3v1M640.5 114v1m0 3v1m0 2v1m0 3v1m0 2v1m0 3v1m0 3v1m0 2v1m0 3v1m0 2v1m0 3v1m0 2v1m0 3v1m0 3v1m0 2v1m0 3v1m0 2v1m0 3v1m0 2v1m0 3v1m0 3v1m0 2v1m0 3v1m0 2v1m0 3v1m0 2v1m0 3v1m0 3v1m0 2v1m0 3v1m0 2v1m0 3v1m0 3v1m0 2v1m0 3v1m0 2v1m0 3v1m0 2v1m0 3v1m0 3v1m0 2v1m0 3v1m0 2v1m0 3v1m0 2v1m0 3v1m0 3v1m0 2v1m0 3v1m0 2v1m0 3v1m0 2v1m0 3v1m0 3v1m0 2v1m0 3v1m0 2v1m0 3v1m0 2v1m0 3v1m0 3v1m0 2v1m0 3v1m0 2v1m0 3v1m0 3v1m0 2v1m0 3v1m0 2v1m0 3v1m0 2v1m0 3v1m0 3v1m0 2v1m0 3v1m0 2v1m0 3v1m0 2v1m0 3v1m0 3v1m0 2v1m0 3v1m0 2v1m0 3v1m0 2v1m0 3v1m0 3v1m0 2v1m0 3v1m0 2v1m0 3v1m0 2v1m0 3v1m0 3v1m0 2v1m0 3v1m0 2v1m0 3v1m0 3v1m0 2v1m0 3v1m0 2v1m0 3v1m0 2v1m0 3v1m0 3v1m0 2v1m0 3v1m0 2v1m0 3v1m0 2v1m0 3v1m0 3v1m0 2v1m0 3v1m0 2v1m0 3v1m0 2v1m0 3v1m0 3v1m0 2v1m0 3v1m0 2v1m0 3v1m0 2v1m0 3v1m0 3v1m0 2v1m0 3v1m0 2v1m0 3v1m0 3v1m0 2v1m0 3v1m0 2v1m0 3v1m0 2v1m0 3v1m0 3v1m0 2v1m0 3v1m0 2v1m0 3v1m0 2v1m0 3v1m0 3v1m0 2v1m0 3v1m0 2v1m0 3v1m0 2v1m0 3v1m0 3v1m0 2v1m0 3v1m0 2v1m0 3v1m0 3v1m0 2v1m0 3v1m0 2v1m0 3v1m0 2v1m0 3v1m0 3v1m0 2v1m0 3v1m0 2v1m0 3v1m0 2v1m0 3v1m0 3v1m0 2v1m0 3v1m0 2v1m0 3v1m0 2v1m0 3v1m0 3v1m0 2v1m0 3v1m0 2v1m0 3v1m0 2v1m0 3v1m0 3v1m0 2v1m0 3v1m0 2v1m0 3v1m0 3v1m0 2v1m0 3v1m0 2v1m0 3v1m0 2v1m0 3v1m0 3v1m0 2v1m0 3v1m0 2v1m0 3v1m0 2v1m0 3v1m0 3v1m0 2v1m0 3v1m0 2v1m0 3v1m0 2v1m0 3v1m0 3v1m0 2v1m0 3v1m0 2v1m0 3v1m0 2v1m0 3v1m0 3v1m0 2v1m0 3v1m0 2v1m0 3v1m0 3v1m0 2v1m0 3v1m0 2v1m0 3v1m0 2v1m0 3v1m0 3v1m0 2v1m0 3v1m0 2v1m0 3v1m0 2v1m0 3v1m0 3v1m0 2v1m0 3v1m0 2v1m0 3v1m0 2v1m0 3v1m0 3v1m0 2v1m0 3v1m0 2v1m0 3v1M676.5 114v1m0 3v1m0 2v1m0 3v1m0 2v1m0 3v1m0 3v1m0 2v1m0 3v1m0 2v1m0 3v1m0 2v1m0 3v1m0 3v1m0 2v1m0 3v1m0 2v1m0 3v1m0 2v1m0 3v1m0 3v1m0 2v1m0 3v1m0 2v1m0 3v1m0 2v1m0 3v1m0 3v1m0 2v1m0 3v1m0 2v1m0 3v1m0 3v1m0 2v1m0 3v1m0 2v1m0 3v1m0 2v1m0 3v1m0 3v1m0 2v1m0 3v1m0 2v1m0 3v1m0 2v1m0 3v1m0 3v1m0 2v1m0 3v1m0 2v1m0 3v1m0 2v1m0 3v1m0 3v1m0 2v1m0 3v1m0 2v1m0 3v1m0 2v1m0 3v1m0 3v1m0 2v1m0 3v1m0 2v1m0 3v1m0 3v1m0 2v1m0 3v1m0 2v1m0 3v1m0 2v1m0 3v1m0 3v1m0 2v1m0 3v1m0 2v1m0 3v1m0 2v1m0 3v1m0 3v1m0 2v1m0 3v1m0 2v1m0 3v1m0 2v1m0 3v1m0 3v1m0 2v1m0 3v1m0 2v1m0 3v1m0 2v1m0 3v1m0 3v1m0 2v1m0 3v1m0 2v1m0 3v1m0 3v1m0 2v1m0 3v1m0 2v1m0 3v1m0 2v1m0 3v1m0 3v1m0 2v1m0 3v1m0 2v1m0 3v1m0 2v1m0 3v1m0 3v1m0 2v1m0 3v1m0 2v1m0 3v1m0 2v1m0 3v1m0 3v1m0 2v1m0 3v1m0 2v1m0 3v1m0 2v1m0 3v1m0 3v1m0 2v1m0 3v1m0 2v1m0 3v1m0 3v1m0 2v1m0 3v1m0 2v1m0 3v1m0 2v1m0 3v1m0 3v1m0 2v1m0 3v1m0 2v1m0 3v1m0 2v1m0 3v1m0 3v1m0 2v1m0 3v1m0 2v1m0 3v1m0 2v1m0 3v1m0 3v1m0 2v1m0 3v1m0 2v1m0 3v1m0 3v1m0 2v1m0 3v1m0 2v1m0 3v1m0 2v1m0 3v1m0 3v1m0 2v1m0 3v1m0 2v1m0 3v1m0 2v1m0 3v1m0 3v1m0 2v1m0 3v1m0 2v1m0 3v1m0 2v1m0 3v1m0 3v1m0 2v1m0 3v1m0 2v1m0 3v1m0 2v1m0 3v1m0 3v1m0 2v1m0 3v1m0 2v1m0 3v1m0 3v1m0 2v1m0 3v1m0 2v1m0 3v1m0 2v1m0 3v1m0 3v1m0 2v1m0 3v1m0 2v1m0 3v1m0 2v1m0 3v1m0 3v1m0 2v1m0 3v1m0 2v1m0 3v1m0 2v1m0 3v1m0 3v1m0 2v1m0 3v1m0 2v1m0 3v1m0 2v1m0 3v1m0 3v1m0 2v1m0 3v1m0 2v1m0 3v1m0 3v1m0 2v1m0 3v1m0 2v1m0 3v1m0 2v1m0 3v1m0 3v1m0 2v1m0 3v1m0 2v1m0 3v1m0 2v1m0 3v1m0 3v1m0 2v1m0 3v1m0 2v1m0 3v1m0 2v1m0 3v1m0 3v1m0 2v1m0 3v1m0 2v1m0 3v1M712.5 114v1m0 3v1m0 2v1m0 3v1m0 2v1m0 3v1m0 3v1m0 2v1m0 3v1m0 2v1m0 3v1m0 2v1m0 3v1m0 3v1m0 2v1m0 3v1m0 2v1m0 3v1m0 2v1m0 3v1m0 3v1m0 2v1m0 3v1m0 2v1m0 3v1m0 2v1m0 3v1m0 3v1m0 2v1m0 3v1m0 2v1m0 3v1m0 3v1m0 2v1m0 3v1m0 2v1m0 3v1m0 2v1m0 3v1m0 3v1m0 2v1m0 3v1m0 2v1m0 3v1m0 2v1m0 3v1m0 3v1m0 2v1m0 3v1m0 2v1m0 3v1m0 2v1m0 3v1m0 3v1m0 2v1m0 3v1m0 2v1m0 3v1m0 2v1m0 3v1m0 3v1m0 2v1m0 3v1m0 2v1m0 3v1m0 3v1m0 2v1m0 3v1m0 2v1m0 3v1m0 2v1m0 3v1m0 3v1m0 2v1m0 3v1m0 2v1m0 3v1m0 2v1m0 3v1m0 3v1m0 2v1m0 3v1m0 2v1m0 3v1m0 2v1m0 3v1m0 3v1m0 2v1m0 3v1m0 2v1m0 3v1m0 2v1m0 3v1m0 3v1m0 2v1m0 3v1m0 2v1m0 3v1m0 3v1m0 2v1m0 3v1m0 2v1m0 3v1m0 2v1m0 3v1m0 3v1m0 2v1m0 3v1m0 2v1m0 3v1m0 2v1m0 3v1m0 3v1m0 2v1m0 3v1m0 2v1m0 3v1m0 2v1m0 3v1m0 3v1m0 2v1m0 3v1m0 2v1m0 3v1m0 2v1m0 3v1m0 3v1m0 2v1m0 3v1m0 2v1m0 3v1m0 3v1m0 2v1m0 3v1m0 2v1m0 3v1m0 2v1m0 3v1m0 3v1m0 2v1m0 3v1m0 2v1m0 3v1m0 2v1m0 3v1m0 3v1m0 2v1m0 3v1m0 2v1m0 3v1m0 2v1m0 3v1m0 3v1m0 2v1m0 3v1m0 2v1m0 3v1m0 3v1m0 2v1m0 3v1m0 2v1m0 3v1m0 2v1m0 3v1m0 3v1m0 2v1m0 3v1m0 2v1m0 3v1m0 2v1m0 3v1m0 3v1m0 2v1m0 3v1m0 2v1m0 3v1m0 2v1m0 3v1m0 3v1m0 2v1m0 3v1m0 2v1m0 3v1m0 2v1m0 3v1m0 3v1m0 2v1m0 3v1m0 2v1m0 3v1m0 3v1m0 2v1m0 3v1m0 2v1m0 3v1m0 2v1m0 3v1m0 3v1m0 2v1m0 3v1m0 2v1m0 3v1m0 2v1m0 3v1m0 3v1m0 2v1m0 3v1m0 2v1m0 3v1m0 2v1m0 3v1m0 3v1m0 2v1m0 3v1m0 2v1m0 3v1m0 2v1m0 3v1m0 3v1m0 2v1m0 3v1m0 2v1m0 3v1m0 3v1m0 2v1m0 3v1m0 2v1m0 3v1m0 2v1m0 3v1m0 3v1m0 2v1m0 3v1m0 2v1m0 3v1m0 2v1m0 3v1m0 3v1m0 2v1m0 3v1m0 2v1m0 3v1m0 2v1m0 3v1m0 3v1m0 2v1m0 3v1m0 2v1m0 3v1M748.5 114v1m0 3v1m0 2v1m0 3v1m0 2v1m0 3v1m0 3v1m0 2v1m0 3v1m0 2v1m0 3v1m0 2v1m0 3v1m0 3v1m0 2v1m0 3v1m0 2v1m0 3v1m0 2v1m0 3v1m0 3v1m0 2v1m0 3v1m0 2v1m0 3v1m0 2v1m0 3v1m0 3v1m0 2v1m0 3v1m0 2v1m0 3v1m0 3v1m0 2v1m0 3v1m0 2v1m0 3v1m0 2v1m0 3v1m0 3v1m0 2v1m0 3v1m0 2v1m0 3v1m0 2v1m0 3v1m0 3v1m0 2v1m0 3v1m0 2v1m0 3v1m0 2v1m0 3v1m0 3v1m0 2v1m0 3v1m0 2v1m0 3v1m0 2v1m0 3v1m0 3v1m0 2v1m0 3v1m0 2v1m0 3v1m0 3v1m0 2v1m0 3v1m0 2v1m0 3v1m0 2v1m0 3v1m0 3v1m0 2v1m0 3v1m0 2v1m0 3v1m0 2v1m0 3v1m0 3v1m0 2v1m0 3v1m0 2v1m0 3v1m0 2v1m0 3v1m0 3v1m0 2v1m0 3v1m0 2v1m0 3v1m0 2v1m0 3v1m0 3v1m0 2v1m0 3v1m0 2v1m0 3v1m0 3v1m0 2v1m0 3v1m0 2v1m0 3v1m0 2v1m0 3v1m0 3v1m0 2v1m0 3v1m0 2v1m0 3v1m0 2v1m0 3v1m0 3v1m0 2v1m0 3v1m0 2v1m0 3v1m0 2v1m0 3v1m0 3v1m0 2v1m0 3v1m0 2v1m0 3v1m0 2v1m0 3v1m0 3v1m0 2v1m0 3v1m0 2v1m0 3v1m0 3v1m0 2v1m0 3v1m0 2v1m0 3v1m0 2v1m0 3v1m0 3v1m0 2v1m0 3v1m0 2v1m0 3v1m0 2v1m0 3v1m0 3v1m0 2v1m0 3v1m0 2v1m0 3v1m0 2v1m0 3v1m0 3v1m0 2v1m0 3v1m0 2v1m0 3v1m0 3v1m0 2v1m0 3v1m0 2v1m0 3v1m0 2v1m0 3v1m0 3v1m0 2v1m0 3v1m0 2v1m0 3v1m0 2v1m0 3v1m0 3v1m0 2v1m0 3v1m0 2v1m0 3v1m0 2v1m0 3v1m0 3v1m0 2v1m0 3v1m0 2v1m0 3v1m0 2v1m0 3v1m0 3v1m0 2v1m0 3v1m0 2v1m0 3v1m0 3v1m0 2v1m0 3v1m0 2v1m0 3v1m0 2v1m0 3v1m0 3v1m0 2v1m0 3v1m0 2v1m0 3v1m0 2v1m0 3v1m0 3v1m0 2v1m0 3v1m0 2v1m0 3v1m0 2v1m0 3v1m0 3v1m0 2v1m0 3v1m0 2v1m0 3v1m0 2v1m0 3v1m0 3v1m0 2v1m0 3v1m0 2v1m0 3v1m0 3v1m0 2v1m0 3v1m0 2v1m0 3v1m0 2v1m0 3v1m0 3v1m0 2v1m0 3v1m0 2v1m0 3v1m0 2v1m0 3v1m0 3v1m0 2v1m0 3v1m0 2v1m0 3v1m0 2v1m0 3v1m0 3v1m0 2v1m0 3v1m0 2v1m0 3v1M783.5 114v1m0 3v1m0 2v1m0 3v1m0 2v1m0 3v1m0 3v1m0 2v1m0 3v1m0 2v1m0 3v1m0 2v1m0 3v1m0 3v1m0 2v1m0 3v1m0 2v1m0 3v1m0 2v1m0 3v1m0 3v1m0 2v1m0 3v1m0 2v1m0 3v1m0 2v1m0 3v1m0 3v1m0 2v1m0 3v1m0 2v1m0 3v1m0 3v1m0 2v1m0 3v1m0 2v1m0 3v1m0 2v1m0 3v1m0 3v1m0 2v1m0 3v1m0 2v1m0 3v1m0 2v1m0 3v1m0 3v1m0 2v1m0 3v1m0 2v1m0 3v1m0 2v1m0 3v1m0 3v1m0 2v1m0 3v1m0 2v1m0 3v1m0 2v1m0 3v1m0 3v1m0 2v1m0 3v1m0 2v1m0 3v1m0 3v1m0 2v1m0 3v1m0 2v1m0 3v1m0 2v1m0 3v1m0 3v1m0 2v1m0 3v1m0 2v1m0 3v1m0 2v1m0 3v1m0 3v1m0 2v1m0 3v1m0 2v1m0 3v1m0 2v1m0 3v1m0 3v1m0 2v1m0 3v1m0 2v1m0 3v1m0 2v1m0 3v1m0 3v1m0 2v1m0 3v1m0 2v1m0 3v1m0 3v1m0 2v1m0 3v1m0 2v1m0 3v1m0 2v1m0 3v1m0 3v1m0 2v1m0 3v1m0 2v1m0 3v1m0 2v1m0 3v1m0 3v1m0 2v1m0 3v1m0 2v1m0 3v1m0 2v1m0 3v1m0 3v1m0 2v1m0 3v1m0 2v1m0 3v1m0 2v1m0 3v1m0 3v1m0 2v1m0 3v1m0 2v1m0 3v1m0 3v1m0 2v1m0 3v1m0 2v1m0 3v1m0 2v1m0 3v1m0 3v1m0 2v1m0 3v1m0 2v1m0 3v1m0 2v1m0 3v1m0 3v1m0 2v1m0 3v1m0 2v1m0 3v1m0 2v1m0 3v1m0 3v1m0 2v1m0 3v1m0 2v1m0 3v1m0 3v1m0 2v1m0 3v1m0 2v1m0 3v1m0 2v1m0 3v1m0 3v1m0 2v1m0 3v1m0 2v1m0 3v1m0 2v1m0 3v1m0 3v1m0 2v1m0 3v1m0 2v1m0 3v1m0 2v1m0 3v1m0 3v1m0 2v1m0 3v1m0 2v1m0 3v1m0 2v1m0 3v1m0 3v1m0 2v1m0 3v1m0 2v1m0 3v1m0 3v1m0 2v1m0 3v1m0 2v1m0 3v1m0 2v1m0 3v1m0 3v1m0 2v1m0 3v1m0 2v1m0 3v1m0 2v1m0 3v1m0 3v1m0 2v1m0 3v1m0 2v1m0 3v1m0 2v1m0 3v1m0 3v1m0 2v1m0 3v1m0 2v1m0 3v1m0 2v1m0 3v1m0 3v1m0 2v1m0 3v1m0 2v1m0 3v1m0 3v1m0 2v1m0 3v1m0 2v1m0 3v1m0 2v1m0 3v1m0 3v1m0 2v1m0 3v1m0 2v1m0 3v1m0 2v1m0 3v1m0 3v1m0 2v1m0 3v1m0 2v1m0 3v1m0 2v1m0 3v1m0 3v1m0 2v1m0 3v1m0 2v1m0 3v1M819.5 114v1m0 3v1m0 2v1m0 3v1m0 2v1m0 3v1m0 3v1m0 2v1m0 3v1m0 2v1m0 3v1m0 2v1m0 3v1m0 3v1m0 2v1m0 3v1m0 2v1m0 3v1m0 2v1m0 3v1m0 3v1m0 2v1m0 3v1m0 2v1m0 3v1m0 2v1m0 3v1m0 3v1m0 2v1m0 3v1m0 2v1m0 3v1m0 3v1m0 2v1m0 3v1m0 2v1m0 3v1m0 2v1m0 3v1m0 3v1m0 2v1m0 3v1m0 2v1m0 3v1m0 2v1m0 3v1m0 3v1m0 2v1m0 3v1m0 2v1m0 3v1m0 2v1m0 3v1m0 3v1m0 2v1m0 3v1m0 2v1m0 3v1m0 2v1m0 3v1m0 3v1m0 2v1m0 3v1m0 2v1m0 3v1m0 3v1m0 2v1m0 3v1m0 2v1m0 3v1m0 2v1m0 3v1m0 3v1m0 2v1m0 3v1m0 2v1m0 3v1m0 2v1m0 3v1m0 3v1m0 2v1m0 3v1m0 2v1m0 3v1m0 2v1m0 3v1m0 3v1m0 2v1m0 3v1m0 2v1m0 3v1m0 2v1m0 3v1m0 3v1m0 2v1m0 3v1m0 2v1m0 3v1m0 3v1m0 2v1m0 3v1m0 2v1m0 3v1m0 2v1m0 3v1m0 3v1m0 2v1m0 3v1m0 2v1m0 3v1m0 2v1m0 3v1m0 3v1m0 2v1m0 3v1m0 2v1m0 3v1m0 2v1m0 3v1m0 3v1m0 2v1m0 3v1m0 2v1m0 3v1m0 2v1m0 3v1m0 3v1m0 2v1m0 3v1m0 2v1m0 3v1m0 3v1m0 2v1m0 3v1m0 2v1m0 3v1m0 2v1m0 3v1m0 3v1m0 2v1m0 3v1m0 2v1m0 3v1m0 2v1m0 3v1m0 3v1m0 2v1m0 3v1m0 2v1m0 3v1m0 2v1m0 3v1m0 3v1m0 2v1m0 3v1m0 2v1m0 3v1m0 3v1m0 2v1m0 3v1m0 2v1m0 3v1m0 2v1m0 3v1m0 3v1m0 2v1m0 3v1m0 2v1m0 3v1m0 2v1m0 3v1m0 3v1m0 2v1m0 3v1m0 2v1m0 3v1m0 2v1m0 3v1m0 3v1m0 2v1m0 3v1m0 2v1m0 3v1m0 2v1m0 3v1m0 3v1m0 2v1m0 3v1m0 2v1m0 3v1m0 3v1m0 2v1m0 3v1m0 2v1m0 3v1m0 2v1m0 3v1m0 3v1m0 2v1m0 3v1m0 2v1m0 3v1m0 2v1m0 3v1m0 3v1m0 2v1m0 3v1m0 2v1m0 3v1m0 2v1m0 3v1m0 3v1m0 2v1m0 3v1m0 2v1m0 3v1m0 2v1m0 3v1m0 3v1m0 2v1m0 3v1m0 2v1m0 3v1m0 3v1m0 2v1m0 3v1m0 2v1m0 3v1m0 2v1m0 3v1m0 3v1m0 2v1m0 3v1m0 2v1m0 3v1m0 2v1m0 3v1m0 3v1m0 2v1m0 3v1m0 2v1m0 3v1m0 2v1m0 3v1m0 3v1m0 2v1m0 3v1m0 2v1m0 3v1M855.5 114v1m0 3v1m0 2v1m0 3v1m0 2v1m0 3v1m0 3v1m0 2v1m0 3v1m0 2v1m0 3v1m0 2v1m0 3v1m0 3v1m0 2v1m0 3v1m0 2v1m0 3v1m0 2v1m0 3v1m0 3v1m0 2v1m0 3v1m0 2v1m0 3v1m0 2v1m0 3v1m0 3v1m0 2v1m0 3v1m0 2v1m0 3v1m0 3v1m0 2v1m0 3v1m0 2v1m0 3v1m0 2v1m0 3v1m0 3v1m0 2v1m0 3v1m0 2v1m0 3v1m0 2v1m0 3v1m0 3v1m0 2v1m0 3v1m0 2v1m0 3v1m0 2v1m0 3v1m0 3v1m0 2v1m0 3v1m0 2v1m0 3v1m0 2v1m0 3v1m0 3v1m0 2v1m0 3v1m0 2v1m0 3v1m0 3v1m0 2v1m0 3v1m0 2v1m0 3v1m0 2v1m0 3v1m0 3v1m0 2v1m0 3v1m0 2v1m0 3v1m0 2v1m0 3v1m0 3v1m0 2v1m0 3v1m0 2v1m0 3v1m0 2v1m0 3v1m0 3v1m0 2v1m0 3v1m0 2v1m0 3v1m0 2v1m0 3v1m0 3v1m0 2v1m0 3v1m0 2v1m0 3v1m0 3v1m0 2v1m0 3v1m0 2v1m0 3v1m0 2v1m0 3v1m0 3v1m0 2v1m0 3v1m0 2v1m0 3v1m0 2v1m0 3v1m0 3v1m0 2v1m0 3v1m0 2v1m0 3v1m0 2v1m0 3v1m0 3v1m0 2v1m0 3v1m0 2v1m0 3v1m0 2v1m0 3v1m0 3v1m0 2v1m0 3v1m0 2v1m0 3v1m0 3v1m0 2v1m0 3v1m0 2v1m0 3v1m0 2v1m0 3v1m0 3v1m0 2v1m0 3v1m0 2v1m0 3v1m0 2v1m0 3v1m0 3v1m0 2v1m0 3v1m0 2v1m0 3v1m0 2v1m0 3v1m0 3v1m0 2v1m0 3v1m0 2v1m0 3v1m0 3v1m0 2v1m0 3v1m0 2v1m0 3v1m0 2v1m0 3v1m0 3v1m0 2v1m0 3v1m0 2v1m0 3v1m0 2v1m0 3v1m0 3v1m0 2v1m0 3v1m0 2v1m0 3v1m0 2v1m0 3v1m0 3v1m0 2v1m0 3v1m0 2v1m0 3v1m0 2v1m0 3v1m0 3v1m0 2v1m0 3v1m0 2v1m0 3v1m0 3v1m0 2v1m0 3v1m0 2v1m0 3v1m0 2v1m0 3v1m0 3v1m0 2v1m0 3v1m0 2v1m0 3v1m0 2v1m0 3v1m0 3v1m0 2v1m0 3v1m0 2v1m0 3v1m0 2v1m0 3v1m0 3v1m0 2v1m0 3v1m0 2v1m0 3v1m0 2v1m0 3v1m0 3v1m0 2v1m0 3v1m0 2v1m0 3v1m0 3v1m0 2v1m0 3v1m0 2v1m0 3v1m0 2v1m0 3v1m0 3v1m0 2v1m0 3v1m0 2v1m0 3v1m0 2v1m0 3v1m0 3v1m0 2v1m0 3v1m0 2v1m0 3v1m0 2v1m0 3v1m0 3v1m0 2v1m0 3v1m0 2v1m0 3v1M891.5 114v1m0 3v1m0 2v1m0 3v1m0 2v1m0 3v1m0 3v1m0 2v1m0 3v1m0 2v1m0 3v1m0 2v1m0 3v1m0 3v1m0 2v1m0 3v1m0 2v1m0 3v1m0 2v1m0 3v1m0 3v1m0 2v1m0 3v1m0 2v1m0 3v1m0 2v1m0 3v1m0 3v1m0 2v1m0 3v1m0 2v1m0 3v1m0 3v1m0 2v1m0 3v1m0 2v1m0 3v1m0 2v1m0 3v1m0 3v1m0 2v1m0 3v1m0 2v1m0 3v1m0 2v1m0 3v1m0 3v1m0 2v1m0 3v1m0 2v1m0 3v1m0 2v1m0 3v1m0 3v1m0 2v1m0 3v1m0 2v1m0 3v1m0 2v1m0 3v1m0 3v1m0 2v1m0 3v1m0 2v1m0 3v1m0 3v1m0 2v1m0 3v1m0 2v1m0 3v1m0 2v1m0 3v1m0 3v1m0 2v1m0 3v1m0 2v1m0 3v1m0 2v1m0 3v1m0 3v1m0 2v1m0 3v1m0 2v1m0 3v1m0 2v1m0 3v1m0 3v1m0 2v1m0 3v1m0 2v1m0 3v1m0 2v1m0 3v1m0 3v1m0 2v1m0 3v1m0 2v1m0 3v1m0 3v1m0 2v1m0 3v1m0 2v1m0 3v1m0 2v1m0 3v1m0 3v1m0 2v1m0 3v1m0 2v1m0 3v1m0 2v1m0 3v1m0 3v1m0 2v1m0 3v1m0 2v1m0 3v1m0 2v1m0 3v1m0 3v1m0 2v1m0 3v1m0 2v1m0 3v1m0 2v1m0 3v1m0 3v1m0 2v1m0 3v1m0 2v1m0 3v1m0 3v1m0 2v1m0 3v1m0 2v1m0 3v1m0 2v1m0 3v1m0 3v1m0 2v1m0 3v1m0 2v1m0 3v1m0 2v1m0 3v1m0 3v1m0 2v1m0 3v1m0 2v1m0 3v1m0 2v1m0 3v1m0 3v1m0 2v1m0 3v1m0 2v1m0 3v1m0 3v1m0 2v1m0 3v1m0 2v1m0 3v1m0 2v1m0 3v1m0 3v1m0 2v1m0 3v1m0 2v1m0 3v1m0 2v1m0 3v1m0 3v1m0 2v1m0 3v1m0 2v1m0 3v1m0 2v1m0 3v1m0 3v1m0 2v1m0 3v1m0 2v1m0 3v1m0 2v1m0 3v1m0 3v1m0 2v1m0 3v1m0 2v1m0 3v1m0 3v1m0 2v1m0 3v1m0 2v1m0 3v1m0 2v1m0 3v1m0 3v1m0 2v1m0 3v1m0 2v1m0 3v1m0 2v1m0 3v1m0 3v1m0 2v1m0 3v1m0 2v1m0 3v1m0 2v1m0 3v1m0 3v1m0 2v1m0 3v1m0 2v1m0 3v1m0 2v1m0 3v1m0 3v1m0 2v1m0 3v1m0 2v1m0 3v1m0 3v1m0 2v1m0 3v1m0 2v1m0 3v1m0 2v1m0 3v1m0 3v1m0 2v1m0 3v1m0 2v1m0 3v1m0 2v1m0 3v1m0 3v1m0 2v1m0 3v1m0 2v1m0 3v1m0 2v1m0 3v1m0 3v1m0 2v1m0 3v1m0 2v1m0 3v1M926.5 114v1m0 3v1m0 2v1m0 3v1m0 2v1m0 3v1m0 3v1m0 2v1m0 3v1m0 2v1m0 3v1m0 2v1m0 3v1m0 3v1m0 2v1m0 3v1m0 2v1m0 3v1m0 2v1m0 3v1m0 3v1m0 2v1m0 3v1m0 2v1m0 3v1m0 2v1m0 3v1m0 3v1m0 2v1m0 3v1m0 2v1m0 3v1m0 3v1m0 2v1m0 3v1m0 2v1m0 3v1m0 2v1m0 3v1m0 3v1m0 2v1m0 3v1m0 2v1m0 3v1m0 2v1m0 3v1m0 3v1m0 2v1m0 3v1m0 2v1m0 3v1m0 2v1m0 3v1m0 3v1m0 2v1m0 3v1m0 2v1m0 3v1m0 2v1m0 3v1m0 3v1m0 2v1m0 3v1m0 2v1m0 3v1m0 3v1m0 2v1m0 3v1m0 2v1m0 3v1m0 2v1m0 3v1m0 3v1m0 2v1m0 3v1m0 2v1m0 3v1m0 2v1m0 3v1m0 3v1m0 2v1m0 3v1m0 2v1m0 3v1m0 2v1m0 3v1m0 3v1m0 2v1m0 3v1m0 2v1m0 3v1m0 2v1m0 3v1m0 3v1m0 2v1m0 3v1m0 2v1m0 3v1m0 3v1m0 2v1m0 3v1m0 2v1m0 3v1m0 2v1m0 3v1m0 3v1m0 2v1m0 3v1m0 2v1m0 3v1m0 2v1m0 3v1m0 3v1m0 2v1m0 3v1m0 2v1m0 3v1m0 2v1m0 3v1m0 3v1m0 2v1m0 3v1m0 2v1m0 3v1m0 2v1m0 3v1m0 3v1m0 2v1m0 3v1m0 2v1m0 3v1m0 3v1m0 2v1m0 3v1m0 2v1m0 3v1m0 2v1m0 3v1m0 3v1m0 2v1m0 3v1m0 2v1m0 3v1m0 2v1m0 3v1m0 3v1m0 2v1m0 3v1m0 2v1m0 3v1m0 2v1m0 3v1m0 3v1m0 2v1m0 3v1m0 2v1m0 3v1m0 3v1m0 2v1m0 3v1m0 2v1m0 3v1m0 2v1m0 3v1m0 3v1m0 2v1m0 3v1m0 2v1m0 3v1m0 2v1m0 3v1m0 3v1m0 2v1m0 3v1m0 2v1m0 3v1m0 2v1m0 3v1m0 3v1m0 2v1m0 3v1m0 2v1m0 3v1m0 2v1m0 3v1m0 3v1m0 2v1m0 3v1m0 2v1m0 3v1m0 3v1m0 2v1m0 3v1m0 2v1m0 3v1m0 2v1m0 3v1m0 3v1m0 2v1m0 3v1m0 2v1m0 3v1m0 2v1m0 3v1m0 3v1m0 2v1m0 3v1m0 2v1m0 3v1m0 2v1m0 3v1m0 3v1m0 2v1m0 3v1m0 2v1m0 3v1m0 2v1m0 3v1m0 3v1m0 2v1m0 3v1m0 2v1m0 3v1m0 3v1m0 2v1m0 3v1m0 2v1m0 3v1m0 2v1m0 3v1m0 3v1m0 2v1m0 3v1m0 2v1m0 3v1m0 2v1m0 3v1m0 3v1m0 2v1m0 3v1m0 2v1m0 3v1m0 2v1m0 3v1m0 3v1m0 2v1m0 3v1m0 2v1m0 3v1M962.5 114v1m0 3v1m0 2v1m0 3v1m0 2v1m0 3v1m0 3v1m0 2v1m0 3v1m0 2v1m0 3v1m0 2v1m0 3v1m0 3v1m0 2v1m0 3v1m0 2v1m0 3v1m0 2v1m0 3v1m0 3v1m0 2v1m0 3v1m0 2v1m0 3v1m0 2v1m0 3v1m0 3v1m0 2v1m0 3v1m0 2v1m0 3v1m0 3v1m0 2v1m0 3v1m0 2v1m0 3v1m0 2v1m0 3v1m0 3v1m0 2v1m0 3v1m0 2v1m0 3v1m0 2v1m0 3v1m0 3v1m0 2v1m0 3v1m0 2v1m0 3v1m0 2v1m0 3v1m0 3v1m0 2v1m0 3v1m0 2v1m0 3v1m0 2v1m0 3v1m0 3v1m0 2v1m0 3v1m0 2v1m0 3v1m0 3v1m0 2v1m0 3v1m0 2v1m0 3v1m0 2v1m0 3v1m0 3v1m0 2v1m0 3v1m0 2v1m0 3v1m0 2v1m0 3v1m0 3v1m0 2v1m0 3v1m0 2v1m0 3v1m0 2v1m0 3v1m0 3v1m0 2v1m0 3v1m0 2v1m0 3v1m0 2v1m0 3v1m0 3v1m0 2v1m0 3v1m0 2v1m0 3v1m0 3v1m0 2v1m0 3v1m0 2v1m0 3v1m0 2v1m0 3v1m0 3v1m0 2v1m0 3v1m0 2v1m0 3v1m0 2v1m0 3v1m0 3v1m0 2v1m0 3v1m0 2v1m0 3v1m0 2v1m0 3v1m0 3v1m0 2v1m0 3v1m0 2v1m0 3v1m0 2v1m0 3v1m0 3v1m0 2v1m0 3v1m0 2v1m0 3v1m0 3v1m0 2v1m0 3v1m0 2v1m0 3v1m0 2v1m0 3v1m0 3v1m0 2v1m0 3v1m0 2v1m0 3v1m0 2v1m0 3v1m0 3v1m0 2v1m0 3v1m0 2v1m0 3v1m0 2v1m0 3v1m0 3v1m0 2v1m0 3v1m0 2v1m0 3v1m0 3v1m0 2v1m0 3v1m0 2v1m0 3v1m0 2v1m0 3v1m0 3v1m0 2v1m0 3v1m0 2v1m0 3v1m0 2v1m0 3v1m0 3v1m0 2v1m0 3v1m0 2v1m0 3v1m0 2v1m0 3v1m0 3v1m0 2v1m0 3v1m0 2v1m0 3v1m0 2v1m0 3v1m0 3v1m0 2v1m0 3v1m0 2v1m0 3v1m0 3v1m0 2v1m0 3v1m0 2v1m0 3v1m0 2v1m0 3v1m0 3v1m0 2v1m0 3v1m0 2v1m0 3v1m0 2v1m0 3v1m0 3v1m0 2v1m0 3v1m0 2v1m0 3v1m0 2v1m0 3v1m0 3v1m0 2v1m0 3v1m0 2v1m0 3v1m0 2v1m0 3v1m0 3v1m0 2v1m0 3v1m0 2v1m0 3v1m0 3v1m0 2v1m0 3v1m0 2v1m0 3v1m0 2v1m0 3v1m0 3v1m0 2v1m0 3v1m0 2v1m0 3v1m0 2v1m0 3v1m0 3v1m0 2v1m0 3v1m0 2v1m0 3v1m0 2v1m0 3v1m0 3v1m0 2v1m0 3v1m0 2v1m0 3v1M998.5 114v1m0 3v1m0 2v1m0 3v1m0 2v1m0 3v1m0 3v1m0 2v1m0 3v1m0 2v1m0 3v1m0 2v1m0 3v1m0 3v1m0 2v1m0 3v1m0 2v1m0 3v1m0 2v1m0 3v1m0 3v1m0 2v1m0 3v1m0 2v1m0 3v1m0 2v1m0 3v1m0 3v1m0 2v1m0 3v1m0 2v1m0 3v1m0 3v1m0 2v1m0 3v1m0 2v1m0 3v1m0 2v1m0 3v1m0 3v1m0 2v1m0 3v1m0 2v1m0 3v1m0 2v1m0 3v1m0 3v1m0 2v1m0 3v1m0 2v1m0 3v1m0 2v1m0 3v1m0 3v1m0 2v1m0 3v1m0 2v1m0 3v1m0 2v1m0 3v1m0 3v1m0 2v1m0 3v1m0 2v1m0 3v1m0 3v1m0 2v1m0 3v1m0 2v1m0 3v1m0 2v1m0 3v1m0 3v1m0 2v1m0 3v1m0 2v1m0 3v1m0 2v1m0 3v1m0 3v1m0 2v1m0 3v1m0 2v1m0 3v1m0 2v1m0 3v1m0 3v1m0 2v1m0 3v1m0 2v1m0 3v1m0 2v1m0 3v1m0 3v1m0 2v1m0 3v1m0 2v1m0 3v1m0 3v1m0 2v1m0 3v1m0 2v1m0 3v1m0 2v1m0 3v1m0 3v1m0 2v1m0 3v1m0 2v1m0 3v1m0 2v1m0 3v1m0 3v1m0 2v1m0 3v1m0 2v1m0 3v1m0 2v1m0 3v1m0 3v1m0 2v1m0 3v1m0 2v1m0 3v1m0 2v1m0 3v1m0 3v1m0 2v1m0 3v1m0 2v1m0 3v1m0 3v1m0 2v1m0 3v1m0 2v1m0 3v1m0 2v1m0 3v1m0 3v1m0 2v1m0 3v1m0 2v1m0 3v1m0 2v1m0 3v1m0 3v1m0 2v1m0 3v1m0 2v1m0 3v1m0 2v1m0 3v1m0 3v1m0 2v1m0 3v1m0 2v1m0 3v1m0 3v1m0 2v1m0 3v1m0 2v1m0 3v1m0 2v1m0 3v1m0 3v1m0 2v1m0 3v1m0 2v1m0 3v1m0 2v1m0 3v1m0 3v1m0 2v1m0 3v1m0 2v1m0 3v1m0 2v1m0 3v1m0 3v1m0 2v1m0 3v1m0 2v1m0 3v1m0 2v1m0 3v1m0 3v1m0 2v1m0 3v1m0 2v1m0 3v1m0 3v1m0 2v1m0 3v1m0 2v1m0 3v1m0 2v1m0 3v1m0 3v1m0 2v1m0 3v1m0 2v1m0 3v1m0 2v1m0 3v1m0 3v1m0 2v1m0 3v1m0 2v1m0 3v1m0 2v1m0 3v1m0 3v1m0 2v1m0 3v1m0 2v1m0 3v1m0 2v1m0 3v1m0 3v1m0 2v1m0 3v1m0 2v1m0 3v1m0 3v1m0 2v1m0 3v1m0 2v1m0 3v1m0 2v1m0 3v1m0 3v1m0 2v1m0 3v1m0 2v1m0 3v1m0 2v1m0 3v1m0 3v1m0 2v1m0 3v1m0 2v1m0 3v1m0 2v1m0 3v1m0 3v1m0 2v1m0 3v1m0 2v1m0 3v1M1034.5 114v1m0 3v1m0 2v1m0 3v1m0 2v1m0 3v1m0 3v1m0 2v1m0 3v1m0 2v1m0 3v1m0 2v1m0 3v1m0 3v1m0 2v1m0 3v1m0 2v1m0 3v1m0 2v1m0 3v1m0 3v1m0 2v1m0 3v1m0 2v1m0 3v1m0 2v1m0 3v1m0 3v1m0 2v1m0 3v1m0 2v1m0 3v1m0 3v1m0 2v1m0 3v1m0 2v1m0 3v1m0 2v1m0 3v1m0 3v1m0 2v1m0 3v1m0 2v1m0 3v1m0 2v1m0 3v1m0 3v1m0 2v1m0 3v1m0 2v1m0 3v1m0 2v1m0 3v1m0 3v1m0 2v1m0 3v1m0 2v1m0 3v1m0 2v1m0 3v1m0 3v1m0 2v1m0 3v1m0 2v1m0 3v1m0 3v1m0 2v1m0 3v1m0 2v1m0 3v1m0 2v1m0 3v1m0 3v1m0 2v1m0 3v1m0 2v1m0 3v1m0 2v1m0 3v1m0 3v1m0 2v1m0 3v1m0 2v1m0 3v1m0 2v1m0 3v1m0 3v1m0 2v1m0 3v1m0 2v1m0 3v1m0 2v1m0 3v1m0 3v1m0 2v1m0 3v1m0 2v1m0 3v1m0 3v1m0 2v1m0 3v1m0 2v1m0 3v1m0 2v1m0 3v1m0 3v1m0 2v1m0 3v1m0 2v1m0 3v1m0 2v1m0 3v1m0 3v1m0 2v1m0 3v1m0 2v1m0 3v1m0 2v1m0 3v1m0 3v1m0 2v1m0 3v1m0 2v1m0 3v1m0 2v1m0 3v1m0 3v1m0 2v1m0 3v1m0 2v1m0 3v1m0 3v1m0 2v1m0 3v1m0 2v1m0 3v1m0 2v1m0 3v1m0 3v1m0 2v1m0 3v1m0 2v1m0 3v1m0 2v1m0 3v1m0 3v1m0 2v1m0 3v1m0 2v1m0 3v1m0 2v1m0 3v1m0 3v1m0 2v1m0 3v1m0 2v1m0 3v1m0 3v1m0 2v1m0 3v1m0 2v1m0 3v1m0 2v1m0 3v1m0 3v1m0 2v1m0 3v1m0 2v1m0 3v1m0 2v1m0 3v1m0 3v1m0 2v1m0 3v1m0 2v1m0 3v1m0 2v1m0 3v1m0 3v1m0 2v1m0 3v1m0 2v1m0 3v1m0 2v1m0 3v1m0 3v1m0 2v1m0 3v1m0 2v1m0 3v1m0 3v1m0 2v1m0 3v1m0 2v1m0 3v1m0 2v1m0 3v1m0 3v1m0 2v1m0 3v1m0 2v1m0 3v1m0 2v1m0 3v1m0 3v1m0 2v1m0 3v1m0 2v1m0 3v1m0 2v1m0 3v1m0 3v1m0 2v1m0 3v1m0 2v1m0 3v1m0 2v1m0 3v1m0 3v1m0 2v1m0 3v1m0 2v1m0 3v1m0 3v1m0 2v1m0 3v1m0 2v1m0 3v1m0 2v1m0 3v1m0 3v1m0 2v1m0 3v1m0 2v1m0 3v1m0 2v1m0 3v1m0 3v1m0 2v1m0 3v1m0 2v1m0 3v1m0 2v1m0 3v1m0 3v1m0 2v1m0 3v1m0 2v1m0 3v1M1070.5 114v1m0 3v1m0 2v1m0 3v1m0 2v1m0 3v1m0 3v1m0 2v1m0 3v1m0 2v1m0 3v1m0 2v1m0 3v1m0 3v1m0 2v1m0 3v1m0 2v1m0 3v1m0 2v1m0 3v1m0 3v1m0 2v1m0 3v1m0 2v1m0 3v1m0 2v1m0 3v1m0 3v1m0 2v1m0 3v1m0 2v1m0 3v1m0 3v1m0 2v1m0 3v1m0 2v1m0 3v1m0 2v1m0 3v1m0 3v1m0 2v1m0 3v1m0 2v1m0 3v1m0 2v1m0 3v1m0 3v1m0 2v1m0 3v1m0 2v1m0 3v1m0 2v1m0 3v1m0 3v1m0 2v1m0 3v1m0 2v1m0 3v1m0 2v1m0 3v1m0 3v1m0 2v1m0 3v1m0 2v1m0 3v1m0 3v1m0 2v1m0 3v1m0 2v1m0 3v1m0 2v1m0 3v1m0 3v1m0 2v1m0 3v1m0 2v1m0 3v1m0 2v1m0 3v1m0 3v1m0 2v1m0 3v1m0 2v1m0 3v1m0 2v1m0 3v1m0 3v1m0 2v1m0 3v1m0 2v1m0 3v1m0 2v1m0 3v1m0 3v1m0 2v1m0 3v1m0 2v1m0 3v1m0 3v1m0 2v1m0 3v1m0 2v1m0 3v1m0 2v1m0 3v1m0 3v1m0 2v1m0 3v1m0 2v1m0 3v1m0 2v1m0 3v1m0 3v1m0 2v1m0 3v1m0 2v1m0 3v1m0 2v1m0 3v1m0 3v1m0 2v1m0 3v1m0 2v1m0 3v1m0 2v1m0 3v1m0 3v1m0 2v1m0 3v1m0 2v1m0 3v1m0 3v1m0 2v1m0 3v1m0 2v1m0 3v1m0 2v1m0 3v1m0 3v1m0 2v1m0 3v1m0 2v1m0 3v1m0 2v1m0 3v1m0 3v1m0 2v1m0 3v1m0 2v1m0 3v1m0 2v1m0 3v1m0 3v1m0 2v1m0 3v1m0 2v1m0 3v1m0 3v1m0 2v1m0 3v1m0 2v1m0 3v1m0 2v1m0 3v1m0 3v1m0 2v1m0 3v1m0 2v1m0 3v1m0 2v1m0 3v1m0 3v1m0 2v1m0 3v1m0 2v1m0 3v1m0 2v1m0 3v1m0 3v1m0 2v1m0 3v1m0 2v1m0 3v1m0 2v1m0 3v1m0 3v1m0 2v1m0 3v1m0 2v1m0 3v1m0 3v1m0 2v1m0 3v1m0 2v1m0 3v1m0 2v1m0 3v1m0 3v1m0 2v1m0 3v1m0 2v1m0 3v1m0 2v1m0 3v1m0 3v1m0 2v1m0 3v1m0 2v1m0 3v1m0 2v1m0 3v1m0 3v1m0 2v1m0 3v1m0 2v1m0 3v1m0 2v1m0 3v1m0 3v1m0 2v1m0 3v1m0 2v1m0 3v1m0 3v1m0 2v1m0 3v1m0 2v1m0 3v1m0 2v1m0 3v1m0 3v1m0 2v1m0 3v1m0 2v1m0 3v1m0 2v1m0 3v1m0 3v1m0 2v1m0 3v1m0 2v1m0 3v1m0 2v1m0 3v1m0 3v1m0 2v1m0 3v1m0 2v1m0 3v1M1105.5 114v1m0 3v1m0 2v1m0 3v1m0 2v1m0 3v1m0 3v1m0 2v1m0 3v1m0 2v1m0 3v1m0 2v1m0 3v1m0 3v1m0 2v1m0 3v1m0 2v1m0 3v1m0 2v1m0 3v1m0 3v1m0 2v1m0 3v1m0 2v1m0 3v1m0 2v1m0 3v1m0 3v1m0 2v1m0 3v1m0 2v1m0 3v1m0 3v1m0 2v1m0 3v1m0 2v1m0 3v1m0 2v1m0 3v1m0 3v1m0 2v1m0 3v1m0 2v1m0 3v1m0 2v1m0 3v1m0 3v1m0 2v1m0 3v1m0 2v1m0 3v1m0 2v1m0 3v1m0 3v1m0 2v1m0 3v1m0 2v1m0 3v1m0 2v1m0 3v1m0 3v1m0 2v1m0 3v1m0 2v1m0 3v1m0 3v1m0 2v1m0 3v1m0 2v1m0 3v1m0 2v1m0 3v1m0 3v1m0 2v1m0 3v1m0 2v1m0 3v1m0 2v1m0 3v1m0 3v1m0 2v1m0 3v1m0 2v1m0 3v1m0 2v1m0 3v1m0 3v1m0 2v1m0 3v1m0 2v1m0 3v1m0 2v1m0 3v1m0 3v1m0 2v1m0 3v1m0 2v1m0 3v1m0 3v1m0 2v1m0 3v1m0 2v1m0 3v1m0 2v1m0 3v1m0 3v1m0 2v1m0 3v1m0 2v1m0 3v1m0 2v1m0 3v1m0 3v1m0 2v1m0 3v1m0 2v1m0 3v1m0 2v1m0 3v1m0 3v1m0 2v1m0 3v1m0 2v1m0 3v1m0 2v1m0 3v1m0 3v1m0 2v1m0 3v1m0 2v1m0 3v1m0 3v1m0 2v1m0 3v1m0 2v1m0 3v1m0 2v1m0 3v1m0 3v1m0 2v1m0 3v1m0 2v1m0 3v1m0 2v1m0 3v1m0 3v1m0 2v1m0 3v1m0 2v1m0 3v1m0 2v1m0 3v1m0 3v1m0 2v1m0 3v1m0 2v1m0 3v1m0 3v1m0 2v1m0 3v1m0 2v1m0 3v1m0 2v1m0 3v1m0 3v1m0 2v1m0 3v1m0 2v1m0 3v1m0 2v1m0 3v1m0 3v1m0 2v1m0 3v1m0 2v1m0 3v1m0 2v1m0 3v1m0 3v1m0 2v1m0 3v1m0 2v1m0 3v1m0 2v1m0 3v1m0 3v1m0 2v1m0 3v1m0 2v1m0 3v1m0 3v1m0 2v1m0 3v1m0 2v1m0 3v1m0 2v1m0 3v1m0 3v1m0 2v1m0 3v1m0 2v1m0 3v1m0 2v1m0 3v1m0 3v1m0 2v1m0 3v1m0 2v1m0 3v1m0 2v1m0 3v1m0 3v1m0 2v1m0 3v1m0 2v1m0 3v1m0 2v1m0 3v1m0 3v1m0 2v1m0 3v1m0 2v1m0 3v1m0 3v1m0 2v1m0 3v1m0 2v1m0 3v1m0 2v1m0 3v1m0 3v1m0 2v1m0 3v1m0 2v1m0 3v1m0 2v1m0 3v1m0 3v1m0 2v1m0 3v1m0 2v1m0 3v1m0 2v1m0 3v1m0 3v1m0 2v1m0 3v1m0 2v1m0 3v1M1141.5 114v1m0 3v1m0 2v1m0 3v1m0 2v1m0 3v1m0 3v1m0 2v1m0 3v1m0 2v1m0 3v1m0 2v1m0 3v1m0 3v1m0 2v1m0 3v1m0 2v1m0 3v1m0 2v1m0 3v1m0 3v1m0 2v1m0 3v1m0 2v1m0 3v1m0 2v1m0 3v1m0 3v1m0 2v1m0 3v1m0 2v1m0 3v1m0 3v1m0 2v1m0 3v1m0 2v1m0 3v1m0 2v1m0 3v1m0 3v1m0 2v1m0 3v1m0 2v1m0 3v1m0 2v1m0 3v1m0 3v1m0 2v1m0 3v1m0 2v1m0 3v1m0 2v1m0 3v1m0 3v1m0 2v1m0 3v1m0 2v1m0 3v1m0 2v1m0 3v1m0 3v1m0 2v1m0 3v1m0 2v1m0 3v1m0 3v1m0 2v1m0 3v1m0 2v1m0 3v1m0 2v1m0 3v1m0 3v1m0 2v1m0 3v1m0 2v1m0 3v1m0 2v1m0 3v1m0 3v1m0 2v1m0 3v1m0 2v1m0 3v1m0 2v1m0 3v1m0 3v1m0 2v1m0 3v1m0 2v1m0 3v1m0 2v1m0 3v1m0 3v1m0 2v1m0 3v1m0 2v1m0 3v1m0 3v1m0 2v1m0 3v1m0 2v1m0 3v1m0 2v1m0 3v1m0 3v1m0 2v1m0 3v1m0 2v1m0 3v1m0 2v1m0 3v1m0 3v1m0 2v1m0 3v1m0 2v1m0 3v1m0 2v1m0 3v1m0 3v1m0 2v1m0 3v1m0 2v1m0 3v1m0 2v1m0 3v1m0 3v1m0 2v1m0 3v1m0 2v1m0 3v1m0 3v1m0 2v1m0 3v1m0 2v1m0 3v1m0 2v1m0 3v1m0 3v1m0 2v1m0 3v1m0 2v1m0 3v1m0 2v1m0 3v1m0 3v1m0 2v1m0 3v1m0 2v1m0 3v1m0 2v1m0 3v1m0 3v1m0 2v1m0 3v1m0 2v1m0 3v1m0 3v1m0 2v1m0 3v1m0 2v1m0 3v1m0 2v1m0 3v1m0 3v1m0 2v1m0 3v1m0 2v1m0 3v1m0 2v1m0 3v1m0 3v1m0 2v1m0 3v1m0 2v1m0 3v1m0 2v1m0 3v1m0 3v1m0 2v1m0 3v1m0 2v1m0 3v1m0 2v1m0 3v1m0 3v1m0 2v1m0 3v1m0 2v1m0 3v1m0 3v1m0 2v1m0 3v1m0 2v1m0 3v1m0 2v1m0 3v1m0 3v1m0 2v1m0 3v1m0 2v1m0 3v1m0 2v1m0 3v1m0 3v1m0 2v1m0 3v1m0 2v1m0 3v1m0 2v1m0 3v1m0 3v1m0 2v1m0 3v1m0 2v1m0 3v1m0 2v1m0 3v1m0 3v1m0 2v1m0 3v1m0 2v1m0 3v1m0 3v1m0 2v1m0 3v1m0 2v1m0 3v1m0 2v1m0 3v1m0 3v1m0 2v1m0 3v1m0 2v1m0 3v1m0 2v1m0 3v1m0 3v1m0 2v1m0 3v1m0 2v1m0 3v1m0 2v1m0 3v1m0 3v1m0 2v1m0 3v1m0 2v1m0 3v1M1177.5 114v1m0 3v1m0 2v1m0 3v1m0 2v1m0 3v1m0 3v1m0 2v1m0 3v1m0 2v1m0 3v1m0 2v1m0 3v1m0 3v1m0 2v1m0 3v1m0 2v1m0 3v1m0 2v1m0 3v1m0 3v1m0 2v1m0 3v1m0 2v1m0 3v1m0 2v1m0 3v1m0 3v1m0 2v1m0 3v1m0 2v1m0 3v1m0 3v1m0 2v1m0 3v1m0 2v1m0 3v1m0 2v1m0 3v1m0 3v1m0 2v1m0 3v1m0 2v1m0 3v1m0 2v1m0 3v1m0 3v1m0 2v1m0 3v1m0 2v1m0 3v1m0 2v1m0 3v1m0 3v1m0 2v1m0 3v1m0 2v1m0 3v1m0 2v1m0 3v1m0 3v1m0 2v1m0 3v1m0 2v1m0 3v1m0 3v1m0 2v1m0 3v1m0 2v1m0 3v1m0 2v1m0 3v1m0 3v1m0 2v1m0 3v1m0 2v1m0 3v1m0 2v1m0 3v1m0 3v1m0 2v1m0 3v1m0 2v1m0 3v1m0 2v1m0 3v1m0 3v1m0 2v1m0 3v1m0 2v1m0 3v1m0 2v1m0 3v1m0 3v1m0 2v1m0 3v1m0 2v1m0 3v1m0 3v1m0 2v1m0 3v1m0 2v1m0 3v1m0 2v1m0 3v1m0 3v1m0 2v1m0 3v1m0 2v1m0 3v1m0 2v1m0 3v1m0 3v1m0 2v1m0 3v1m0 2v1m0 3v1m0 2v1m0 3v1m0 3v1m0 2v1m0 3v1m0 2v1m0 3v1m0 2v1m0 3v1m0 3v1m0 2v1m0 3v1m0 2v1m0 3v1m0 3v1m0 2v1m0 3v1m0 2v1m0 3v1m0 2v1m0 3v1m0 3v1m0 2v1m0 3v1m0 2v1m0 3v1m0 2v1m0 3v1m0 3v1m0 2v1m0 3v1m0 2v1m0 3v1m0 2v1m0 3v1m0 3v1m0 2v1m0 3v1m0 2v1m0 3v1m0 3v1m0 2v1m0 3v1m0 2v1m0 3v1m0 2v1m0 3v1m0 3v1m0 2v1m0 3v1m0 2v1m0 3v1m0 2v1m0 3v1m0 3v1m0 2v1m0 3v1m0 2v1m0 3v1m0 2v1m0 3v1m0 3v1m0 2v1m0 3v1m0 2v1m0 3v1m0 2v1m0 3v1m0 3v1m0 2v1m0 3v1m0 2v1m0 3v1m0 3v1m0 2v1m0 3v1m0 2v1m0 3v1m0 2v1m0 3v1m0 3v1m0 2v1m0 3v1m0 2v1m0 3v1m0 2v1m0 3v1m0 3v1m0 2v1m0 3v1m0 2v1m0 3v1m0 2v1m0 3v1m0 3v1m0 2v1m0 3v1m0 2v1m0 3v1m0 2v1m0 3v1m0 3v1m0 2v1m0 3v1m0 2v1m0 3v1m0 3v1m0 2v1m0 3v1m0 2v1m0 3v1m0 2v1m0 3v1m0 3v1m0 2v1m0 3v1m0 2v1m0 3v1m0 2v1m0 3v1m0 3v1m0 2v1m0 3v1m0 2v1m0 3v1m0 2v1m0 3v1m0 3v1m0 2v1m0 3v1m0 2v1m0 3v1M1213.5 114v1m0 3v1m0 2v1m0 3v1m0 2v1m0 3v1m0 3v1m0 2v1m0 3v1m0 2v1m0 3v1m0 2v1m0 3v1m0 3v1m0 2v1m0 3v1m0 2v1m0 3v1m0 2v1m0 3v1m0 3v1m0 2v1m0 3v1m0 2v1m0 3v1m0 2v1m0 3v1m0 3v1m0 2v1m0 3v1m0 2v1m0 3v1m0 3v1m0 2v1m0 3v1m0 2v1m0 3v1m0 2v1m0 3v1m0 3v1m0 2v1m0 3v1m0 2v1m0 3v1m0 2v1m0 3v1m0 3v1m0 2v1m0 3v1m0 2v1m0 3v1m0 2v1m0 3v1m0 3v1m0 2v1m0 3v1m0 2v1m0 3v1m0 2v1m0 3v1m0 3v1m0 2v1m0 3v1m0 2v1m0 3v1m0 3v1m0 2v1m0 3v1m0 2v1m0 3v1m0 2v1m0 3v1m0 3v1m0 2v1m0 3v1m0 2v1m0 3v1m0 2v1m0 3v1m0 3v1m0 2v1m0 3v1m0 2v1m0 3v1m0 2v1m0 3v1m0 3v1m0 2v1m0 3v1m0 2v1m0 3v1m0 2v1m0 3v1m0 3v1m0 2v1m0 3v1m0 2v1m0 3v1m0 3v1m0 2v1m0 3v1m0 2v1m0 3v1m0 2v1m0 3v1m0 3v1m0 2v1m0 3v1m0 2v1m0 3v1m0 2v1m0 3v1m0 3v1m0 2v1m0 3v1m0 2v1m0 3v1m0 2v1m0 3v1m0 3v1m0 2v1m0 3v1m0 2v1m0 3v1m0 2v1m0 3v1m0 3v1m0 2v1m0 3v1m0 2v1m0 3v1m0 3v1m0 2v1m0 3v1m0 2v1m0 3v1m0 2v1m0 3v1m0 3v1m0 2v1m0 3v1m0 2v1m0 3v1m0 2v1m0 3v1m0 3v1m0 2v1m0 3v1m0 2v1m0 3v1m0 2v1m0 3v1m0 3v1m0 2v1m0 3v1m0 2v1m0 3v1m0 3v1m0 2v1m0 3v1m0 2v1m0 3v1m0 2v1m0 3v1m0 3v1m0 2v1m0 3v1m0 2v1m0 3v1m0 2v1m0 3v1m0 3v1m0 2v1m0 3v1m0 2v1m0 3v1m0 2v1m0 3v1m0 3v1m0 2v1m0 3v1m0 2v1m0 3v1m0 2v1m0 3v1m0 3v1m0 2v1m0 3v1m0 2v1m0 3v1m0 3v1m0 2v1m0 3v1m0 2v1m0 3v1m0 2v1m0 3v1m0 3v1m0 2v1m0 3v1m0 2v1m0 3v1m0 2v1m0 3v1m0 3v1m0 2v1m0 3v1m0 2v1m0 3v1m0 2v1m0 3v1m0 3v1m0 2v1m0 3v1m0 2v1m0 3v1m0 2v1m0 3v1m0 3v1m0 2v1m0 3v1m0 2v1m0 3v1m0 3v1m0 2v1m0 3v1m0 2v1m0 3v1m0 2v1m0 3v1m0 3v1m0 2v1m0 3v1m0 2v1m0 3v1m0 2v1m0 3v1m0 3v1m0 2v1m0 3v1m0 2v1m0 3v1m0 2v1m0 3v1m0 3v1m0 2v1m0 3v1m0 2v1m0 3v1M1248.5 114v1m0 3v1m0 2v1m0 3v1m0 2v1m0 3v1m0 3v1m0 2v1m0 3v1m0 2v1m0 3v1m0 2v1m0 3v1m0 3v1m0 2v1m0 3v1m0 2v1m0 3v1m0 2v1m0 3v1m0 3v1m0 2v1m0 3v1m0 2v1m0 3v1m0 2v1m0 3v1m0 3v1m0 2v1m0 3v1m0 2v1m0 3v1m0 3v1m0 2v1m0 3v1m0 2v1m0 3v1m0 2v1m0 3v1m0 3v1m0 2v1m0 3v1m0 2v1m0 3v1m0 2v1m0 3v1m0 3v1m0 2v1m0 3v1m0 2v1m0 3v1m0 2v1m0 3v1m0 3v1m0 2v1m0 3v1m0 2v1m0 3v1m0 2v1m0 3v1m0 3v1m0 2v1m0 3v1m0 2v1m0 3v1m0 3v1m0 2v1m0 3v1m0 2v1m0 3v1m0 2v1m0 3v1m0 3v1m0 2v1m0 3v1m0 2v1m0 3v1m0 2v1m0 3v1m0 3v1m0 2v1m0 3v1m0 2v1m0 3v1m0 2v1m0 3v1m0 3v1m0 2v1m0 3v1m0 2v1m0 3v1m0 2v1m0 3v1m0 3v1m0 2v1m0 3v1m0 2v1m0 3v1m0 3v1m0 2v1m0 3v1m0 2v1m0 3v1m0 2v1m0 3v1m0 3v1m0 2v1m0 3v1m0 2v1m0 3v1m0 2v1m0 3v1m0 3v1m0 2v1m0 3v1m0 2v1m0 3v1m0 2v1m0 3v1m0 3v1m0 2v1m0 3v1m0 2v1m0 3v1m0 2v1m0 3v1m0 3v1m0 2v1m0 3v1m0 2v1m0 3v1m0 3v1m0 2v1m0 3v1m0 2v1m0 3v1m0 2v1m0 3v1m0 3v1m0 2v1m0 3v1m0 2v1m0 3v1m0 2v1m0 3v1m0 3v1m0 2v1m0 3v1m0 2v1m0 3v1m0 2v1m0 3v1m0 3v1m0 2v1m0 3v1m0 2v1m0 3v1m0 3v1m0 2v1m0 3v1m0 2v1m0 3v1m0 2v1m0 3v1m0 3v1m0 2v1m0 3v1m0 2v1m0 3v1m0 2v1m0 3v1m0 3v1m0 2v1m0 3v1m0 2v1m0 3v1m0 2v1m0 3v1m0 3v1m0 2v1m0 3v1m0 2v1m0 3v1m0 2v1m0 3v1m0 3v1m0 2v1m0 3v1m0 2v1m0 3v1m0 3v1m0 2v1m0 3v1m0 2v1m0 3v1m0 2v1m0 3v1m0 3v1m0 2v1m0 3v1m0 2v1m0 3v1m0 2v1m0 3v1m0 3v1m0 2v1m0 3v1m0 2v1m0 3v1m0 2v1m0 3v1m0 3v1m0 2v1m0 3v1m0 2v1m0 3v1m0 2v1m0 3v1m0 3v1m0 2v1m0 3v1m0 2v1m0 3v1m0 3v1m0 2v1m0 3v1m0 2v1m0 3v1m0 2v1m0 3v1m0 3v1m0 2v1m0 3v1m0 2v1m0 3v1m0 2v1m0 3v1m0 3v1m0 2v1m0 3v1m0 2v1m0 3v1m0 2v1m0 3v1m0 3v1m0 2v1m0 3v1m0 2v1m0 3v1M1284.5 114v1m0 3v1m0 2v1m0 3v1m0 2v1m0 3v1m0 3v1m0 2v1m0 3v1m0 2v1m0 3v1m0 2v1m0 3v1m0 3v1m0 2v1m0 3v1m0 2v1m0 3v1m0 2v1m0 3v1m0 3v1m0 2v1m0 3v1m0 2v1m0 3v1m0 2v1m0 3v1m0 3v1m0 2v1m0 3v1m0 2v1m0 3v1m0 3v1m0 2v1m0 3v1m0 2v1m0 3v1m0 2v1m0 3v1m0 3v1m0 2v1m0 3v1m0 2v1m0 3v1m0 2v1m0 3v1m0 3v1m0 2v1m0 3v1m0 2v1m0 3v1m0 2v1m0 3v1m0 3v1m0 2v1m0 3v1m0 2v1m0 3v1m0 2v1m0 3v1m0 3v1m0 2v1m0 3v1m0 2v1m0 3v1m0 3v1m0 2v1m0 3v1m0 2v1m0 3v1m0 2v1m0 3v1m0 3v1m0 2v1m0 3v1m0 2v1m0 3v1m0 2v1m0 3v1m0 3v1m0 2v1m0 3v1m0 2v1m0 3v1m0 2v1m0 3v1m0 3v1m0 2v1m0 3v1m0 2v1m0 3v1m0 2v1m0 3v1m0 3v1m0 2v1m0 3v1m0 2v1m0 3v1m0 3v1m0 2v1m0 3v1m0 2v1m0 3v1m0 2v1m0 3v1m0 3v1m0 2v1m0 3v1m0 2v1m0 3v1m0 2v1m0 3v1m0 3v1m0 2v1m0 3v1m0 2v1m0 3v1m0 2v1m0 3v1m0 3v1m0 2v1m0 3v1m0 2v1m0 3v1m0 2v1m0 3v1m0 3v1m0 2v1m0 3v1m0 2v1m0 3v1m0 3v1m0 2v1m0 3v1m0 2v1m0 3v1m0 2v1m0 3v1m0 3v1m0 2v1m0 3v1m0 2v1m0 3v1m0 2v1m0 3v1m0 3v1m0 2v1m0 3v1m0 2v1m0 3v1m0 2v1m0 3v1m0 3v1m0 2v1m0 3v1m0 2v1m0 3v1m0 3v1m0 2v1m0 3v1m0 2v1m0 3v1m0 2v1m0 3v1m0 3v1m0 2v1m0 3v1m0 2v1m0 3v1m0 2v1m0 3v1m0 3v1m0 2v1m0 3v1m0 2v1m0 3v1m0 2v1m0 3v1m0 3v1m0 2v1m0 3v1m0 2v1m0 3v1m0 2v1m0 3v1m0 3v1m0 2v1m0 3v1m0 2v1m0 3v1m0 3v1m0 2v1m0 3v1m0 2v1m0 3v1m0 2v1m0 3v1m0 3v1m0 2v1m0 3v1m0 2v1m0 3v1m0 2v1m0 3v1m0 3v1m0 2v1m0 3v1m0 2v1m0 3v1m0 2v1m0 3v1m0 3v1m0 2v1m0 3v1m0 2v1m0 3v1m0 2v1m0 3v1m0 3v1m0 2v1m0 3v1m0 2v1m0 3v1m0 3v1m0 2v1m0 3v1m0 2v1m0 3v1m0 2v1m0 3v1m0 3v1m0 2v1m0 3v1m0 2v1m0 3v1m0 2v1m0 3v1m0 3v1m0 2v1m0 3v1m0 2v1m0 3v1m0 2v1m0 3v1m0 3v1m0 2v1m0 3v1m0 2v1m0 3v1M1320.5 114v1m0 3v1m0 2v1m0 3v1m0 2v1m0 3v1m0 3v1m0 2v1m0 3v1m0 2v1m0 3v1m0 2v1m0 3v1m0 3v1m0 2v1m0 3v1m0 2v1m0 3v1m0 2v1m0 3v1m0 3v1m0 2v1m0 3v1m0 2v1m0 3v1m0 2v1m0 3v1m0 3v1m0 2v1m0 3v1m0 2v1m0 3v1m0 3v1m0 2v1m0 3v1m0 2v1m0 3v1m0 2v1m0 3v1m0 3v1m0 2v1m0 3v1m0 2v1m0 3v1m0 2v1m0 3v1m0 3v1m0 2v1m0 3v1m0 2v1m0 3v1m0 2v1m0 3v1m0 3v1m0 2v1m0 3v1m0 2v1m0 3v1m0 2v1m0 3v1m0 3v1m0 2v1m0 3v1m0 2v1m0 3v1m0 3v1m0 2v1m0 3v1m0 2v1m0 3v1m0 2v1m0 3v1m0 3v1m0 2v1m0 3v1m0 2v1m0 3v1m0 2v1m0 3v1m0 3v1m0 2v1m0 3v1m0 2v1m0 3v1m0 2v1m0 3v1m0 3v1m0 2v1m0 3v1m0 2v1m0 3v1m0 2v1m0 3v1m0 3v1m0 2v1m0 3v1m0 2v1m0 3v1m0 3v1m0 2v1m0 3v1m0 2v1m0 3v1m0 2v1m0 3v1m0 3v1m0 2v1m0 3v1m0 2v1m0 3v1m0 2v1m0 3v1m0 3v1m0 2v1m0 3v1m0 2v1m0 3v1m0 2v1m0 3v1m0 3v1m0 2v1m0 3v1m0 2v1m0 3v1m0 2v1m0 3v1m0 3v1m0 2v1m0 3v1m0 2v1m0 3v1m0 3v1m0 2v1m0 3v1m0 2v1m0 3v1m0 2v1m0 3v1m0 3v1m0 2v1m0 3v1m0 2v1m0 3v1m0 2v1m0 3v1m0 3v1m0 2v1m0 3v1m0 2v1m0 3v1m0 2v1m0 3v1m0 3v1m0 2v1m0 3v1m0 2v1m0 3v1m0 3v1m0 2v1m0 3v1m0 2v1m0 3v1m0 2v1m0 3v1m0 3v1m0 2v1m0 3v1m0 2v1m0 3v1m0 2v1m0 3v1m0 3v1m0 2v1m0 3v1m0 2v1m0 3v1m0 2v1m0 3v1m0 3v1m0 2v1m0 3v1m0 2v1m0 3v1m0 2v1m0 3v1m0 3v1m0 2v1m0 3v1m0 2v1m0 3v1m0 3v1m0 2v1m0 3v1m0 2v1m0 3v1m0 2v1m0 3v1m0 3v1m0 2v1m0 3v1m0 2v1m0 3v1m0 2v1m0 3v1m0 3v1m0 2v1m0 3v1m0 2v1m0 3v1m0 2v1m0 3v1m0 3v1m0 2v1m0 3v1m0 2v1m0 3v1m0 2v1m0 3v1m0 3v1m0 2v1m0 3v1m0 2v1m0 3v1m0 3v1m0 2v1m0 3v1m0 2v1m0 3v1m0 2v1m0 3v1m0 3v1m0 2v1m0 3v1m0 2v1m0 3v1m0 2v1m0 3v1m0 3v1m0 2v1m0 3v1m0 2v1m0 3v1m0 2v1m0 3v1m0 3v1m0 2v1m0 3v1m0 2v1m0 3v1M1356.5 114v1m0 3v1m0 2v1m0 3v1m0 2v1m0 3v1m0 3v1m0 2v1m0 3v1m0 2v1m0 3v1m0 2v1m0 3v1m0 3v1m0 2v1m0 3v1m0 2v1m0 3v1m0 2v1m0 3v1m0 3v1m0 2v1m0 3v1m0 2v1m0 3v1m0 2v1m0 3v1m0 3v1m0 2v1m0 3v1m0 2v1m0 3v1m0 3v1m0 2v1m0 3v1m0 2v1m0 3v1m0 2v1m0 3v1m0 3v1m0 2v1m0 3v1m0 2v1m0 3v1m0 2v1m0 3v1m0 3v1m0 2v1m0 3v1m0 2v1m0 3v1m0 2v1m0 3v1m0 3v1m0 2v1m0 3v1m0 2v1m0 3v1m0 2v1m0 3v1m0 3v1m0 2v1m0 3v1m0 2v1m0 3v1m0 3v1m0 2v1m0 3v1m0 2v1m0 3v1m0 2v1m0 3v1m0 3v1m0 2v1m0 3v1m0 2v1m0 3v1m0 2v1m0 3v1m0 3v1m0 2v1m0 3v1m0 2v1m0 3v1m0 2v1m0 3v1m0 3v1m0 2v1m0 3v1m0 2v1m0 3v1m0 2v1m0 3v1m0 3v1m0 2v1m0 3v1m0 2v1m0 3v1m0 3v1m0 2v1m0 3v1m0 2v1m0 3v1m0 2v1m0 3v1m0 3v1m0 2v1m0 3v1m0 2v1m0 3v1m0 2v1m0 3v1m0 3v1m0 2v1m0 3v1m0 2v1m0 3v1m0 2v1m0 3v1m0 3v1m0 2v1m0 3v1m0 2v1m0 3v1m0 2v1m0 3v1m0 3v1m0 2v1m0 3v1m0 2v1m0 3v1m0 3v1m0 2v1m0 3v1m0 2v1m0 3v1m0 2v1m0 3v1m0 3v1m0 2v1m0 3v1m0 2v1m0 3v1m0 2v1m0 3v1m0 3v1m0 2v1m0 3v1m0 2v1m0 3v1m0 2v1m0 3v1m0 3v1m0 2v1m0 3v1m0 2v1m0 3v1m0 3v1m0 2v1m0 3v1m0 2v1m0 3v1m0 2v1m0 3v1m0 3v1m0 2v1m0 3v1m0 2v1m0 3v1m0 2v1m0 3v1m0 3v1m0 2v1m0 3v1m0 2v1m0 3v1m0 2v1m0 3v1m0 3v1m0 2v1m0 3v1m0 2v1m0 3v1m0 2v1m0 3v1m0 3v1m0 2v1m0 3v1m0 2v1m0 3v1m0 3v1m0 2v1m0 3v1m0 2v1m0 3v1m0 2v1m0 3v1m0 3v1m0 2v1m0 3v1m0 2v1m0 3v1m0 2v1m0 3v1m0 3v1m0 2v1m0 3v1m0 2v1m0 3v1m0 2v1m0 3v1m0 3v1m0 2v1m0 3v1m0 2v1m0 3v1m0 2v1m0 3v1m0 3v1m0 2v1m0 3v1m0 2v1m0 3v1m0 3v1m0 2v1m0 3v1m0 2v1m0 3v1m0 2v1m0 3v1m0 3v1m0 2v1m0 3v1m0 2v1m0 3v1m0 2v1m0 3v1m0 3v1m0 2v1m0 3v1m0 2v1m0 3v1m0 2v1m0 3v1m0 3v1m0 2v1m0 3v1m0 2v1m0 3v1M1391.5 114v1m0 3v1m0 2v1m0 3v1m0 2v1m0 3v1m0 3v1m0 2v1m0 3v1m0 2v1m0 3v1m0 2v1m0 3v1m0 3v1m0 2v1m0 3v1m0 2v1m0 3v1m0 2v1m0 3v1m0 3v1m0 2v1m0 3v1m0 2v1m0 3v1m0 2v1m0 3v1m0 3v1m0 2v1m0 3v1m0 2v1m0 3v1m0 3v1m0 2v1m0 3v1m0 2v1m0 3v1m0 2v1m0 3v1m0 3v1m0 2v1m0 3v1m0 2v1m0 3v1m0 2v1m0 3v1m0 3v1m0 2v1m0 3v1m0 2v1m0 3v1m0 2v1m0 3v1m0 3v1m0 2v1m0 3v1m0 2v1m0 3v1m0 2v1m0 3v1m0 3v1m0 2v1m0 3v1m0 2v1m0 3v1m0 3v1m0 2v1m0 3v1m0 2v1m0 3v1m0 2v1m0 3v1m0 3v1m0 2v1m0 3v1m0 2v1m0 3v1m0 2v1m0 3v1m0 3v1m0 2v1m0 3v1m0 2v1m0 3v1m0 2v1m0 3v1m0 3v1m0 2v1m0 3v1m0 2v1m0 3v1m0 2v1m0 3v1m0 3v1m0 2v1m0 3v1m0 2v1m0 3v1m0 3v1m0 2v1m0 3v1m0 2v1m0 3v1m0 2v1m0 3v1m0 3v1m0 2v1m0 3v1m0 2v1m0 3v1m0 2v1m0 3v1m0 3v1m0 2v1m0 3v1m0 2v1m0 3v1m0 2v1m0 3v1m0 3v1m0 2v1m0 3v1m0 2v1m0 3v1m0 2v1m0 3v1m0 3v1m0 2v1m0 3v1m0 2v1m0 3v1m0 3v1m0 2v1m0 3v1m0 2v1m0 3v1m0 2v1m0 3v1m0 3v1m0 2v1m0 3v1m0 2v1m0 3v1m0 2v1m0 3v1m0 3v1m0 2v1m0 3v1m0 2v1m0 3v1m0 2v1m0 3v1m0 3v1m0 2v1m0 3v1m0 2v1m0 3v1m0 3v1m0 2v1m0 3v1m0 2v1m0 3v1m0 2v1m0 3v1m0 3v1m0 2v1m0 3v1m0 2v1m0 3v1m0 2v1m0 3v1m0 3v1m0 2v1m0 3v1m0 2v1m0 3v1m0 2v1m0 3v1m0 3v1m0 2v1m0 3v1m0 2v1m0 3v1m0 2v1m0 3v1m0 3v1m0 2v1m0 3v1m0 2v1m0 3v1m0 3v1m0 2v1m0 3v1m0 2v1m0 3v1m0 2v1m0 3v1m0 3v1m0 2v1m0 3v1m0 2v1m0 3v1m0 2v1m0 3v1m0 3v1m0 2v1m0 3v1m0 2v1m0 3v1m0 2v1m0 3v1m0 3v1m0 2v1m0 3v1m0 2v1m0 3v1m0 2v1m0 3v1m0 3v1m0 2v1m0 3v1m0 2v1m0 3v1m0 3v1m0 2v1m0 3v1m0 2v1m0 3v1m0 2v1m0 3v1m0 3v1m0 2v1m0 3v1m0 2v1m0 3v1m0 2v1m0 3v1m0 3v1m0 2v1m0 3v1m0 2v1m0 3v1m0 2v1m0 3v1m0 3v1m0 2v1m0 3v1m0 2v1m0 3v1M1427.5 114v1m0 3v1m0 2v1m0 3v1m0 2v1m0 3v1m0 3v1m0 2v1m0 3v1m0 2v1m0 3v1m0 2v1m0 3v1m0 3v1m0 2v1m0 3v1m0 2v1m0 3v1m0 2v1m0 3v1m0 3v1m0 2v1m0 3v1m0 2v1m0 3v1m0 2v1m0 3v1m0 3v1m0 2v1m0 3v1m0 2v1m0 3v1m0 3v1m0 2v1m0 3v1m0 2v1m0 3v1m0 2v1m0 3v1m0 3v1m0 2v1m0 3v1m0 2v1m0 3v1m0 2v1m0 3v1m0 3v1m0 2v1m0 3v1m0 2v1m0 3v1m0 2v1m0 3v1m0 3v1m0 2v1m0 3v1m0 2v1m0 3v1m0 2v1m0 3v1m0 3v1m0 2v1m0 3v1m0 2v1m0 3v1m0 3v1m0 2v1m0 3v1m0 2v1m0 3v1m0 2v1m0 3v1m0 3v1m0 2v1m0 3v1m0 2v1m0 3v1m0 2v1m0 3v1m0 3v1m0 2v1m0 3v1m0 2v1m0 3v1m0 2v1m0 3v1m0 3v1m0 2v1m0 3v1m0 2v1m0 3v1m0 2v1m0 3v1m0 3v1m0 2v1m0 3v1m0 2v1m0 3v1m0 3v1m0 2v1m0 3v1m0 2v1m0 3v1m0 2v1m0 3v1m0 3v1m0 2v1m0 3v1m0 2v1m0 3v1m0 2v1m0 3v1m0 3v1m0 2v1m0 3v1m0 2v1m0 3v1m0 2v1m0 3v1m0 3v1m0 2v1m0 3v1m0 2v1m0 3v1m0 2v1m0 3v1m0 3v1m0 2v1m0 3v1m0 2v1m0 3v1m0 3v1m0 2v1m0 3v1m0 2v1m0 3v1m0 2v1m0 3v1m0 3v1m0 2v1m0 3v1m0 2v1m0 3v1m0 2v1m0 3v1m0 3v1m0 2v1m0 3v1m0 2v1m0 3v1m0 2v1m0 3v1m0 3v1m0 2v1m0 3v1m0 2v1m0 3v1m0 3v1m0 2v1m0 3v1m0 2v1m0 3v1m0 2v1m0 3v1m0 3v1m0 2v1m0 3v1m0 2v1m0 3v1m0 2v1m0 3v1m0 3v1m0 2v1m0 3v1m0 2v1m0 3v1m0 2v1m0 3v1m0 3v1m0 2v1m0 3v1m0 2v1m0 3v1m0 2v1m0 3v1m0 3v1m0 2v1m0 3v1m0 2v1m0 3v1m0 3v1m0 2v1m0 3v1m0 2v1m0 3v1m0 2v1m0 3v1m0 3v1m0 2v1m0 3v1m0 2v1m0 3v1m0 2v1m0 3v1m0 3v1m0 2v1m0 3v1m0 2v1m0 3v1m0 2v1m0 3v1m0 3v1m0 2v1m0 3v1m0 2v1m0 3v1m0 2v1m0 3v1m0 3v1m0 2v1m0 3v1m0 2v1m0 3v1m0 3v1m0 2v1m0 3v1m0 2v1m0 3v1m0 2v1m0 3v1m0 3v1m0 2v1m0 3v1m0 2v1m0 3v1m0 2v1m0 3v1m0 3v1m0 2v1m0 3v1m0 2v1m0 3v1m0 2v1m0 3v1m0 3v1m0 2v1m0 3v1m0 2v1m0 3v1M1463.5 114v1m0 3v1m0 2v1m0 3v1m0 2v1m0 3v1m0 3v1m0 2v1m0 3v1m0 2v1m0 3v1m0 2v1m0 3v1m0 3v1m0 2v1m0 3v1m0 2v1m0 3v1m0 2v1m0 3v1m0 3v1m0 2v1m0 3v1m0 2v1m0 3v1m0 2v1m0 3v1m0 3v1m0 2v1m0 3v1m0 2v1m0 3v1m0 3v1m0 2v1m0 3v1m0 2v1m0 3v1m0 2v1m0 3v1m0 3v1m0 2v1m0 3v1m0 2v1m0 3v1m0 2v1m0 3v1m0 3v1m0 2v1m0 3v1m0 2v1m0 3v1m0 2v1m0 3v1m0 3v1m0 2v1m0 3v1m0 2v1m0 3v1m0 2v1m0 3v1m0 3v1m0 2v1m0 3v1m0 2v1m0 3v1m0 3v1m0 2v1m0 3v1m0 2v1m0 3v1m0 2v1m0 3v1m0 3v1m0 2v1m0 3v1m0 2v1m0 3v1m0 2v1m0 3v1m0 3v1m0 2v1m0 3v1m0 2v1m0 3v1m0 2v1m0 3v1m0 3v1m0 2v1m0 3v1m0 2v1m0 3v1m0 2v1m0 3v1m0 3v1m0 2v1m0 3v1m0 2v1m0 3v1m0 3v1m0 2v1m0 3v1m0 2v1m0 3v1m0 2v1m0 3v1m0 3v1m0 2v1m0 3v1m0 2v1m0 3v1m0 2v1m0 3v1m0 3v1m0 2v1m0 3v1m0 2v1m0 3v1m0 2v1m0 3v1m0 3v1m0 2v1m0 3v1m0 2v1m0 3v1m0 2v1m0 3v1m0 3v1m0 2v1m0 3v1m0 2v1m0 3v1m0 3v1m0 2v1m0 3v1m0 2v1m0 3v1m0 2v1m0 3v1m0 3v1m0 2v1m0 3v1m0 2v1m0 3v1m0 2v1m0 3v1m0 3v1m0 2v1m0 3v1m0 2v1m0 3v1m0 2v1m0 3v1m0 3v1m0 2v1m0 3v1m0 2v1m0 3v1m0 3v1m0 2v1m0 3v1m0 2v1m0 3v1m0 2v1m0 3v1m0 3v1m0 2v1m0 3v1m0 2v1m0 3v1m0 2v1m0 3v1m0 3v1m0 2v1m0 3v1m0 2v1m0 3v1m0 2v1m0 3v1m0 3v1m0 2v1m0 3v1m0 2v1m0 3v1m0 2v1m0 3v1m0 3v1m0 2v1m0 3v1m0 2v1m0 3v1m0 3v1m0 2v1m0 3v1m0 2v1m0 3v1m0 2v1m0 3v1m0 3v1m0 2v1m0 3v1m0 2v1m0 3v1m0 2v1m0 3v1m0 3v1m0 2v1m0 3v1m0 2v1m0 3v1m0 2v1m0 3v1m0 3v1m0 2v1m0 3v1m0 2v1m0 3v1m0 2v1m0 3v1m0 3v1m0 2v1m0 3v1m0 2v1m0 3v1m0 3v1m0 2v1m0 3v1m0 2v1m0 3v1m0 2v1m0 3v1m0 3v1m0 2v1m0 3v1m0 2v1m0 3v1m0 2v1m0 3v1m0 3v1m0 2v1m0 3v1m0 2v1m0 3v1m0 2v1m0 3v1m0 3v1m0 2v1m0 3v1m0 2v1m0 3v1M1499.5 114v1m0 3v1m0 2v1m0 3v1m0 2v1m0 3v1m0 3v1m0 2v1m0 3v1m0 2v1m0 3v1m0 2v1m0 3v1m0 3v1m0 2v1m0 3v1m0 2v1m0 3v1m0 2v1m0 3v1m0 3v1m0 2v1m0 3v1m0 2v1m0 3v1m0 2v1m0 3v1m0 3v1m0 2v1m0 3v1m0 2v1m0 3v1m0 3v1m0 2v1m0 3v1m0 2v1m0 3v1m0 2v1m0 3v1m0 3v1m0 2v1m0 3v1m0 2v1m0 3v1m0 2v1m0 3v1m0 3v1m0 2v1m0 3v1m0 2v1m0 3v1m0 2v1m0 3v1m0 3v1m0 2v1m0 3v1m0 2v1m0 3v1m0 2v1m0 3v1m0 3v1m0 2v1m0 3v1m0 2v1m0 3v1m0 3v1m0 2v1m0 3v1m0 2v1m0 3v1m0 2v1m0 3v1m0 3v1m0 2v1m0 3v1m0 2v1m0 3v1m0 2v1m0 3v1m0 3v1m0 2v1m0 3v1m0 2v1m0 3v1m0 2v1m0 3v1m0 3v1m0 2v1m0 3v1m0 2v1m0 3v1m0 2v1m0 3v1m0 3v1m0 2v1m0 3v1m0 2v1m0 3v1m0 3v1m0 2v1m0 3v1m0 2v1m0 3v1m0 2v1m0 3v1m0 3v1m0 2v1m0 3v1m0 2v1m0 3v1m0 2v1m0 3v1m0 3v1m0 2v1m0 3v1m0 2v1m0 3v1m0 2v1m0 3v1m0 3v1m0 2v1m0 3v1m0 2v1m0 3v1m0 2v1m0 3v1m0 3v1m0 2v1m0 3v1m0 2v1m0 3v1m0 3v1m0 2v1m0 3v1m0 2v1m0 3v1m0 2v1m0 3v1m0 3v1m0 2v1m0 3v1m0 2v1m0 3v1m0 2v1m0 3v1m0 3v1m0 2v1m0 3v1m0 2v1m0 3v1m0 2v1m0 3v1m0 3v1m0 2v1m0 3v1m0 2v1m0 3v1m0 3v1m0 2v1m0 3v1m0 2v1m0 3v1m0 2v1m0 3v1m0 3v1m0 2v1m0 3v1m0 2v1m0 3v1m0 2v1m0 3v1m0 3v1m0 2v1m0 3v1m0 2v1m0 3v1m0 2v1m0 3v1m0 3v1m0 2v1m0 3v1m0 2v1m0 3v1m0 2v1m0 3v1m0 3v1m0 2v1m0 3v1m0 2v1m0 3v1m0 3v1m0 2v1m0 3v1m0 2v1m0 3v1m0 2v1m0 3v1m0 3v1m0 2v1m0 3v1m0 2v1m0 3v1m0 2v1m0 3v1m0 3v1m0 2v1m0 3v1m0 2v1m0 3v1m0 2v1m0 3v1m0 3v1m0 2v1m0 3v1m0 2v1m0 3v1m0 2v1m0 3v1m0 3v1m0 2v1m0 3v1m0 2v1m0 3v1m0 3v1m0 2v1m0 3v1m0 2v1m0 3v1m0 2v1m0 3v1m0 3v1m0 2v1m0 3v1m0 2v1m0 3v1m0 2v1m0 3v1m0 3v1m0 2v1m0 3v1m0 2v1m0 3v1m0 2v1m0 3v1m0 3v1m0 2v1m0 3v1m0 2v1m0 3v1M1534.5 114v1m0 3v1m0 2v1m0 3v1m0 2v1m0 3v1m0 3v1m0 2v1m0 3v1m0 2v1m0 3v1m0 2v1m0 3v1m0 3v1m0 2v1m0 3v1m0 2v1m0 3v1m0 2v1m0 3v1m0 3v1m0 2v1m0 3v1m0 2v1m0 3v1m0 2v1m0 3v1m0 3v1m0 2v1m0 3v1m0 2v1m0 3v1m0 3v1m0 2v1m0 3v1m0 2v1m0 3v1m0 2v1m0 3v1m0 3v1m0 2v1m0 3v1m0 2v1m0 3v1m0 2v1m0 3v1m0 3v1m0 2v1m0 3v1m0 2v1m0 3v1m0 2v1m0 3v1m0 3v1m0 2v1m0 3v1m0 2v1m0 3v1m0 2v1m0 3v1m0 3v1m0 2v1m0 3v1m0 2v1m0 3v1m0 3v1m0 2v1m0 3v1m0 2v1m0 3v1m0 2v1m0 3v1m0 3v1m0 2v1m0 3v1m0 2v1m0 3v1m0 2v1m0 3v1m0 3v1m0 2v1m0 3v1m0 2v1m0 3v1m0 2v1m0 3v1m0 3v1m0 2v1m0 3v1m0 2v1m0 3v1m0 2v1m0 3v1m0 3v1m0 2v1m0 3v1m0 2v1m0 3v1m0 3v1m0 2v1m0 3v1m0 2v1m0 3v1m0 2v1m0 3v1m0 3v1m0 2v1m0 3v1m0 2v1m0 3v1m0 2v1m0 3v1m0 3v1m0 2v1m0 3v1m0 2v1m0 3v1m0 2v1m0 3v1m0 3v1m0 2v1m0 3v1m0 2v1m0 3v1m0 2v1m0 3v1m0 3v1m0 2v1m0 3v1m0 2v1m0 3v1m0 3v1m0 2v1m0 3v1m0 2v1m0 3v1m0 2v1m0 3v1m0 3v1m0 2v1m0 3v1m0 2v1m0 3v1m0 2v1m0 3v1m0 3v1m0 2v1m0 3v1m0 2v1m0 3v1m0 2v1m0 3v1m0 3v1m0 2v1m0 3v1m0 2v1m0 3v1m0 3v1m0 2v1m0 3v1m0 2v1m0 3v1m0 2v1m0 3v1m0 3v1m0 2v1m0 3v1m0 2v1m0 3v1m0 2v1m0 3v1m0 3v1m0 2v1m0 3v1m0 2v1m0 3v1m0 2v1m0 3v1m0 3v1m0 2v1m0 3v1m0 2v1m0 3v1m0 2v1m0 3v1m0 3v1m0 2v1m0 3v1m0 2v1m0 3v1m0 3v1m0 2v1m0 3v1m0 2v1m0 3v1m0 2v1m0 3v1m0 3v1m0 2v1m0 3v1m0 2v1m0 3v1m0 2v1m0 3v1m0 3v1m0 2v1m0 3v1m0 2v1m0 3v1m0 2v1m0 3v1m0 3v1m0 2v1m0 3v1m0 2v1m0 3v1m0 2v1m0 3v1m0 3v1m0 2v1m0 3v1m0 2v1m0 3v1m0 3v1m0 2v1m0 3v1m0 2v1m0 3v1m0 2v1m0 3v1m0 3v1m0 2v1m0 3v1m0 2v1m0 3v1m0 2v1m0 3v1m0 3v1m0 2v1m0 3v1m0 2v1m0 3v1m0 2v1m0 3v1m0 3v1m0 2v1m0 3v1m0 2v1m0 3v1" stroke="#808080" fill="none"/>
<rect x="495" y="121" width="289" height="294" fill="url(#hb)"/>
<rect x="495.5" y="121.5" width="288" height="293" fill="none" stroke="#ff9d80"/>
<rect x="909" y="336" width="473" height="413" fill="url(#hb)"/>
<rect x="909.5" y="336.5" width="472" height="412" fill="none" stroke="#ff9d80"/>
<rect x="706" y="482" width="118" height="488" fill="url(#hb)"/>
<rect x="706.5" y="482.5" width="117" height="487" fill="none" stroke="#ff9d80"/>
<polygon points="950.5,146.5 886.5,280.5 1086.5,283.5" fill="url(#ht)" stroke="#80a8ff"/>
<polygon points="509.5,577.5 455.5,671.5 592.5,682.5" fill="url(#ht)" stroke="#80a8ff"/>
<path d="M342 130h1v2h-1zM342 134h1v2h-1zM342 138h1v2h-1zM342 142h1v2h-1zM342 146h1v2h-1zM342 150h1v2h-1zM342 154h1v2h-1zM342 158h1v2h-1zM343 144h2v1h-2zM347 144h2v1h-2zM351 144h2v1h-2zM355 144h2v1h-2zM343 140h2v1h-2zM345 141h1v1h-1zM346 142h1v5h-1zM345 147h1v1h-1zM343 148h2v1h-2zM342 148h1v1h-1z" fill="#000"/>
<rect x="362" y="980" width="37" height="7" fill="#808080"/>
<rect x="398.5" y="980.5" width="36" height="6" fill="none" stroke="#808080"/>
<path d="M" />
</svg>
<div class="t" style="left:387.3px;top:964px;font-size:13px;line-height:13px;color:#808080;letter-spacing:0.26px;font-family:'Liberation Mono',monospace;">100 nm</div>
<div class="t" style="left:1566.4px;top:83px;letter-spacing:0.32px;">Layers</div>
<svg style="left:1863px;top:85px" width="26" height="12" viewBox="0 0 26 12">
<rect x="0.5" y="0.5" width="10" height="10" rx="2" fill="none" stroke="#6e6e6e"/>
<rect x="4" y="2.5" width="4.5" height="4.5" rx="1" fill="none" stroke="#6e6e6e"/>
<rect x="2.5" y="4" width="4.5" height="4.5" rx="1" fill="#efefef" stroke="#6e6e6e"/>
<rect x="14.5" y="0.5" width="10" height="10" rx="2" fill="none" stroke="#6e6e6e"/>
<path d="M16.8 2.8L22.2 8.2M22.2 2.8L16.8 8.2" stroke="#6e6e6e" stroke-width="1.8"/>
</svg>
<div class="a" style="left:1563px;top:100px;width:326px;height:880px;background:#fff;border:1px solid #b9b9b9"></div>
<div class="a" style="left:1564px;top:118px;width:324px;height:17px;background:#308cc6"></div>
<div class="a" style="left:1560px;top:533px;width:1px;height:17px;background:repeating-linear-gradient(180deg,#b0b0b0 0 1px,transparent 1px 3px)"></div>
<svg style="left:1876px;top:1008px" width="14" height="14"><g fill="#b8b8b8"><rect x="10" y="2" width="1" height="1"/><rect x="7" y="5" width="1" height="1"/><rect x="10" y="5" width="1" height="1"/><rect x="4" y="8" width="1" height="1"/><rect x="7" y="8" width="1" height="1"/><rect x="10" y="8" width="1" height="1"/><rect x="1" y="11" width="1" height="1"/><rect x="4" y="11" width="1" height="1"/><rect x="7" y="11" width="1" height="1"/><rect x="10" y="11" width="1" height="1"/></g></svg>
<div class="t" style="left:1606.7px;top:102px;font-weight:bold;letter-spacing:0.87px;">boxes</div>
<div class="t" style="left:1607.4px;top:119px;font-weight:bold;color:#fff;letter-spacing:0.86px;">triangles</div>
<svg style="left:1567px;top:102px" width="32" height="15" shape-rendering="crispEdges"><rect x="0.5" y="0.5" width="31" height="14" fill="#fff" stroke="#ff9d80"/><path d="M1 6h1v1h-1zM2 5h1v1h-1zM2 13h1v1h-1zM3 4h1v1h-1zM3 12h1v1h-1zM4 3h1v1h-1zM4 11h1v1h-1zM5 2h1v1h-1zM5 10h1v1h-1zM6 1h1v1h-1zM6 9h1v1h-1zM7 8h1v1h-1zM8 7h1v1h-1zM9 6h1v1h-1zM10 5h1v1h-1zM10 13h1v1h-1zM11 4h1v1h-1zM11 12h1v1h-1zM12 3h1v1h-1zM12 11h1v1h-1zM13 2h1v1h-1zM13 10h1v1h-1zM14 1h1v1h-1zM14 9h1v1h-1zM15 8h1v1h-1zM16 7h1v1h-1zM17 6h1v1h-1zM18 5h1v1h-1zM18 13h1v1h-1zM19 4h1v1h-1zM19 12h1v1h-1zM20 3h1v1h-1zM20 11h1v1h-1zM21 2h1v1h-1zM21 10h1v1h-1zM22 1h1v1h-1zM22 9h1v1h-1zM23 8h1v1h-1zM24 7h1v1h-1zM25 6h1v1h-1zM26 5h1v1h-1zM26 13h1v1h-1zM27 4h1v1h-1zM27 12h1v1h-1zM28 3h1v1h-1zM28 11h1v1h-1zM29 2h1v1h-1zM29 10h1v1h-1zM30 1h1v1h-1zM30 9h1v1h-1z" fill="#ff9d80"/></svg>
<svg style="left:1567px;top:119px" width="32" height="15" shape-rendering="crispEdges"><rect x="0.5" y="0.5" width="31" height="14" fill="#c4ddee" stroke="#80a8ff"/><path d="M1 8h1v1h-1zM2 1h1v1h-1zM2 9h1v1h-1zM3 2h1v1h-1zM3 10h1v1h-1zM4 3h1v1h-1zM4 11h1v1h-1zM5 4h1v1h-1zM5 12h1v1h-1zM6 5h1v1h-1zM6 13h1v1h-1zM7 6h1v1h-1zM8 7h1v1h-1zM9 8h1v1h-1zM10 1h1v1h-1zM10 9h1v1h-1zM11 2h1v1h-1zM11 10h1v1h-1zM12 3h1v1h-1zM12 11h1v1h-1zM13 4h1v1h-1zM13 12h1v1h-1zM14 5h1v1h-1zM14 13h1v1h-1zM15 6h1v1h-1zM16 7h1v1h-1zM17 8h1v1h-1zM18 1h1v1h-1zM18 9h1v1h-1zM19 2h1v1h-1zM19 10h1v1h-1zM20 3h1v1h-1zM20 11h1v1h-1zM21 4h1v1h-1zM21 12h1v1h-1zM22 5h1v1h-1zM22 13h1v1h-1zM23 6h1v1h-1zM24 7h1v1h-1zM25 8h1v1h-1zM26 1h1v1h-1zM26 9h1v1h-1zM27 2h1v1h-1zM27 10h1v1h-1zM28 3h1v1h-1zM28 11h1v1h-1zM29 4h1v1h-1zM29 12h1v1h-1zM30 5h1v1h-1zM30 13h1v1h-1z" fill="#80a8ff"/></svg>
<div class="a" style="left:1563px;top:980px;width:24px;height:22px;border:1px solid #b9b9b9;border-radius:3px;background:linear-gradient(#fafafa,#e8e8e8)"></div>
<div class="a" style="left:1587px;top:980px;width:24px;height:22px;border:1px solid #b9b9b9;border-radius:3px;background:linear-gradient(#fafafa,#e8e8e8)"></div>
<div class="a" style="left:1611px;top:980px;width:24px;height:22px;border:1px solid #b9b9b9;border-radius:3px;background:linear-gradient(#fafafa,#e8e8e8)"></div>
<div class="a" style="left:1635px;top:980px;width:24px;height:22px;border:1px solid #b9b9b9;border-radius:3px;background:linear-gradient(#fafafa,#e8e8e8)"></div>
<svg style="left:1563px;top:980px" width="100" height="22">
<path d="M8.3 5h8v4.3h3.3l-7.3 6.7l-7.3-6.7h3.3z" fill="#1a1a1a"/><rect x="6.7" y="17" width="10.5" height="1.2" fill="#1a1a1a"/>
<path d="M32 5h8v3.6h3.3l-7.3 7l-7.3-7h3.3z" fill="#1a1a1a"/>
<path d="M59.8 6.3l7.3 7.5h-3.3v3h-8v-3h-3.3z" fill="#1a1a1a"/>
<path d="M84.1 7.8l7.3 6.9h-3.3v2.1h-8v-2.1h-3.3z" fill="#1a1a1a"/><rect x="78.9" y="3.6" width="10.5" height="1.2" fill="#1a1a1a"/>
</svg>
<div class="t" style="left:4.1px;top:1007px;font-weight:bold;letter-spacing:-0.3px;">T</div>
<div class="t" style="left:18.9px;top:1007px;letter-spacing:0.58px;">(Default)</div>
<div class="t" style="left:134.7px;top:1007px;font-weight:bold;letter-spacing:0.2px;">G</div>
<div class="t" style="left:1630.8px;top:1007px;font-weight:bold;letter-spacing:0.3px;">xy</div>
<div class="t" style="left:1696.0px;top:1007px;letter-spacing:0.43px;">-0.91700</div>
<div class="t" style="left:1806.8px;top:1007px;letter-spacing:0.47px;">0.77300</div>
</body></html>
